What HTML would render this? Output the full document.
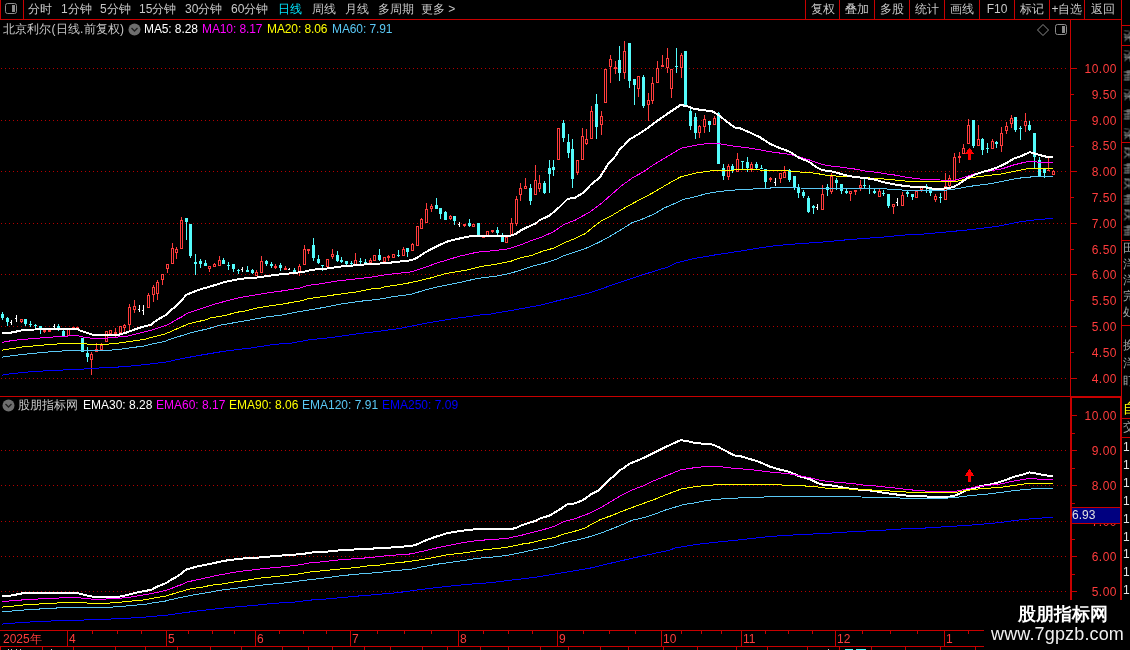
<!DOCTYPE html>
<html><head><meta charset="utf-8">
<style>
html,body{margin:0;padding:0;background:#000;}
body{width:1130px;height:650px;overflow:hidden;position:relative;font-family:"Liberation Sans",sans-serif;}
svg.main{position:absolute;left:0;top:0;}
.t{position:absolute;white-space:nowrap;line-height:15px;font-size:12px;will-change:transform;}
.ax{left:1074px;width:43px;text-align:right;color:#ff3c3c;letter-spacing:0.5px;}
.ic{position:absolute;}
.rc{left:1123px;}
</style></head><body>
<svg class="main" width="1130" height="650" viewBox="0 0 1130 650" shape-rendering="crispEdges">
<line x1="1" y1="68.5" x2="1066" y2="68.5" stroke="#b40000" stroke-width="1" stroke-dasharray="1 3"/>
<line x1="1" y1="120.5" x2="1066" y2="120.5" stroke="#b40000" stroke-width="1" stroke-dasharray="1 3"/>
<line x1="1" y1="171.5" x2="1066" y2="171.5" stroke="#b40000" stroke-width="1" stroke-dasharray="1 3"/>
<line x1="1" y1="223.5" x2="1066" y2="223.5" stroke="#b40000" stroke-width="1" stroke-dasharray="1 3"/>
<line x1="1" y1="274.5" x2="1066" y2="274.5" stroke="#b40000" stroke-width="1" stroke-dasharray="1 3"/>
<line x1="1" y1="326.5" x2="1066" y2="326.5" stroke="#b40000" stroke-width="1" stroke-dasharray="1 3"/>
<line x1="1" y1="378.5" x2="1066" y2="378.5" stroke="#b40000" stroke-width="1" stroke-dasharray="1 3"/>
<line x1="1" y1="450.5" x2="1066" y2="450.5" stroke="#b40000" stroke-width="1" stroke-dasharray="1 3"/>
<line x1="1" y1="485.5" x2="1066" y2="485.5" stroke="#b40000" stroke-width="1" stroke-dasharray="1 3"/>
<line x1="1" y1="521.5" x2="1066" y2="521.5" stroke="#b40000" stroke-width="1" stroke-dasharray="1 3"/>
<line x1="1" y1="556.5" x2="1066" y2="556.5" stroke="#b40000" stroke-width="1" stroke-dasharray="1 3"/>
<line x1="1" y1="591.5" x2="1066" y2="591.5" stroke="#b40000" stroke-width="1" stroke-dasharray="1 3"/>
<rect x="2" y="312" width="1" height="8" fill="#54fcfc"/>
<rect x="1" y="314" width="3" height="4" fill="#54fcfc"/>
<rect x="7" y="317" width="1" height="9" fill="#54fcfc"/>
<rect x="6" y="318" width="3" height="4" fill="#54fcfc"/>
<rect x="11" y="320" width="1" height="5" fill="#ffffff"/>
<rect x="10" y="322" width="1" height="1" fill="#ffffff"/>
<rect x="16" y="315" width="1" height="7" fill="#ffffff"/>
<rect x="15" y="318" width="1" height="1" fill="#ffffff"/>
<rect x="21" y="322" width="1" height="1" fill="#ff3c3c"/>
<rect x="20" y="319" width="3" height="1" fill="#ff3c3c"/>
<rect x="20" y="321" width="3" height="1" fill="#ff3c3c"/>
<rect x="20" y="319" width="1" height="3" fill="#ff3c3c"/>
<rect x="22" y="319" width="1" height="3" fill="#ff3c3c"/>
<rect x="25" y="319" width="1" height="7" fill="#54fcfc"/>
<rect x="24" y="319" width="3" height="5" fill="#54fcfc"/>
<rect x="30" y="321" width="1" height="6" fill="#54fcfc"/>
<rect x="29" y="324" width="3" height="1" fill="#54fcfc"/>
<rect x="35" y="324" width="1" height="6" fill="#54fcfc"/>
<rect x="34" y="325" width="3" height="1" fill="#54fcfc"/>
<rect x="40" y="326" width="1" height="8" fill="#54fcfc"/>
<rect x="39" y="326" width="3" height="4" fill="#54fcfc"/>
<rect x="44" y="332" width="1" height="1" fill="#ff3c3c"/>
<rect x="43" y="330" width="3" height="2" fill="#ff3c3c"/>
<rect x="48" y="330" width="3" height="2" fill="#ff3c3c"/>
<rect x="54" y="324" width="1" height="4" fill="#ffffff"/>
<rect x="53" y="326" width="1" height="1" fill="#ffffff"/>
<rect x="58" y="324" width="1" height="7" fill="#54fcfc"/>
<rect x="57" y="326" width="3" height="4" fill="#54fcfc"/>
<rect x="63" y="329" width="1" height="7" fill="#54fcfc"/>
<rect x="62" y="331" width="3" height="5" fill="#54fcfc"/>
<rect x="67" y="329" width="3" height="1" fill="#ff3c3c"/>
<rect x="67" y="335" width="3" height="1" fill="#ff3c3c"/>
<rect x="67" y="329" width="1" height="7" fill="#ff3c3c"/>
<rect x="69" y="329" width="1" height="7" fill="#ff3c3c"/>
<rect x="72" y="327" width="3" height="2" fill="#ff3c3c"/>
<rect x="76" y="327" width="3" height="1" fill="#ff3c3c"/>
<rect x="76" y="329" width="3" height="1" fill="#ff3c3c"/>
<rect x="76" y="327" width="1" height="3" fill="#ff3c3c"/>
<rect x="78" y="327" width="1" height="3" fill="#ff3c3c"/>
<rect x="82" y="338" width="1" height="14" fill="#54fcfc"/>
<rect x="81" y="338" width="3" height="14" fill="#54fcfc"/>
<rect x="87" y="347" width="1" height="15" fill="#54fcfc"/>
<rect x="86" y="353" width="3" height="4" fill="#54fcfc"/>
<rect x="91" y="352" width="1" height="2" fill="#ff3c3c"/>
<rect x="91" y="360" width="1" height="15" fill="#ff3c3c"/>
<rect x="90" y="354" width="3" height="1" fill="#ff3c3c"/>
<rect x="90" y="359" width="3" height="1" fill="#ff3c3c"/>
<rect x="90" y="354" width="1" height="6" fill="#ff3c3c"/>
<rect x="92" y="354" width="1" height="6" fill="#ff3c3c"/>
<rect x="96" y="343" width="1" height="6" fill="#ff3c3c"/>
<rect x="95" y="349" width="3" height="1" fill="#ff3c3c"/>
<rect x="95" y="351" width="3" height="1" fill="#ff3c3c"/>
<rect x="95" y="349" width="1" height="3" fill="#ff3c3c"/>
<rect x="97" y="349" width="1" height="3" fill="#ff3c3c"/>
<rect x="101" y="343" width="1" height="2" fill="#ff3c3c"/>
<rect x="100" y="345" width="3" height="1" fill="#ff3c3c"/>
<rect x="100" y="349" width="3" height="1" fill="#ff3c3c"/>
<rect x="100" y="345" width="1" height="5" fill="#ff3c3c"/>
<rect x="102" y="345" width="1" height="5" fill="#ff3c3c"/>
<rect x="105" y="331" width="3" height="1" fill="#ff3c3c"/>
<rect x="105" y="341" width="3" height="1" fill="#ff3c3c"/>
<rect x="105" y="331" width="1" height="11" fill="#ff3c3c"/>
<rect x="107" y="331" width="1" height="11" fill="#ff3c3c"/>
<rect x="109" y="330" width="3" height="1" fill="#ff3c3c"/>
<rect x="109" y="333" width="3" height="1" fill="#ff3c3c"/>
<rect x="109" y="330" width="1" height="4" fill="#ff3c3c"/>
<rect x="111" y="330" width="1" height="4" fill="#ff3c3c"/>
<rect x="115" y="328" width="1" height="4" fill="#ff3c3c"/>
<rect x="115" y="333" width="1" height="4" fill="#ff3c3c"/>
<rect x="114" y="332" width="3" height="2" fill="#ff3c3c"/>
<rect x="119" y="326" width="3" height="1" fill="#ff3c3c"/>
<rect x="119" y="332" width="3" height="1" fill="#ff3c3c"/>
<rect x="119" y="326" width="1" height="7" fill="#ff3c3c"/>
<rect x="121" y="326" width="1" height="7" fill="#ff3c3c"/>
<rect x="124" y="324" width="1" height="1" fill="#ff3c3c"/>
<rect x="124" y="328" width="1" height="4" fill="#ff3c3c"/>
<rect x="123" y="325" width="3" height="1" fill="#ff3c3c"/>
<rect x="123" y="327" width="3" height="1" fill="#ff3c3c"/>
<rect x="123" y="325" width="1" height="3" fill="#ff3c3c"/>
<rect x="125" y="325" width="1" height="3" fill="#ff3c3c"/>
<rect x="129" y="304" width="1" height="3" fill="#ff3c3c"/>
<rect x="129" y="325" width="1" height="6" fill="#ff3c3c"/>
<rect x="128" y="307" width="3" height="1" fill="#ff3c3c"/>
<rect x="128" y="324" width="3" height="1" fill="#ff3c3c"/>
<rect x="128" y="307" width="1" height="18" fill="#ff3c3c"/>
<rect x="130" y="307" width="1" height="18" fill="#ff3c3c"/>
<rect x="134" y="300" width="1" height="6" fill="#ff3c3c"/>
<rect x="134" y="310" width="1" height="3" fill="#ff3c3c"/>
<rect x="133" y="306" width="3" height="1" fill="#ff3c3c"/>
<rect x="133" y="309" width="3" height="1" fill="#ff3c3c"/>
<rect x="133" y="306" width="1" height="4" fill="#ff3c3c"/>
<rect x="135" y="306" width="1" height="4" fill="#ff3c3c"/>
<rect x="139" y="305" width="1" height="7" fill="#ffffff"/>
<rect x="138" y="309" width="1" height="1" fill="#ffffff"/>
<rect x="143" y="305" width="1" height="10" fill="#ffffff"/>
<rect x="142" y="310" width="1" height="1" fill="#ffffff"/>
<rect x="148" y="293" width="1" height="2" fill="#ff3c3c"/>
<rect x="147" y="295" width="3" height="1" fill="#ff3c3c"/>
<rect x="147" y="307" width="3" height="1" fill="#ff3c3c"/>
<rect x="147" y="295" width="1" height="13" fill="#ff3c3c"/>
<rect x="149" y="295" width="1" height="13" fill="#ff3c3c"/>
<rect x="153" y="285" width="1" height="2" fill="#ff3c3c"/>
<rect x="153" y="295" width="1" height="7" fill="#ff3c3c"/>
<rect x="152" y="287" width="3" height="1" fill="#ff3c3c"/>
<rect x="152" y="294" width="3" height="1" fill="#ff3c3c"/>
<rect x="152" y="287" width="1" height="8" fill="#ff3c3c"/>
<rect x="154" y="287" width="1" height="8" fill="#ff3c3c"/>
<rect x="157" y="280" width="1" height="2" fill="#ff3c3c"/>
<rect x="157" y="294" width="1" height="6" fill="#ff3c3c"/>
<rect x="156" y="282" width="3" height="1" fill="#ff3c3c"/>
<rect x="156" y="293" width="3" height="1" fill="#ff3c3c"/>
<rect x="156" y="282" width="1" height="12" fill="#ff3c3c"/>
<rect x="158" y="282" width="1" height="12" fill="#ff3c3c"/>
<rect x="162" y="280" width="1" height="5" fill="#ff3c3c"/>
<rect x="161" y="274" width="3" height="1" fill="#ff3c3c"/>
<rect x="161" y="279" width="3" height="1" fill="#ff3c3c"/>
<rect x="161" y="274" width="1" height="6" fill="#ff3c3c"/>
<rect x="163" y="274" width="1" height="6" fill="#ff3c3c"/>
<rect x="167" y="269" width="1" height="4" fill="#ff3c3c"/>
<rect x="166" y="264" width="3" height="1" fill="#ff3c3c"/>
<rect x="166" y="268" width="3" height="1" fill="#ff3c3c"/>
<rect x="166" y="264" width="1" height="5" fill="#ff3c3c"/>
<rect x="168" y="264" width="1" height="5" fill="#ff3c3c"/>
<rect x="172" y="243" width="1" height="5" fill="#ff3c3c"/>
<rect x="171" y="248" width="3" height="1" fill="#ff3c3c"/>
<rect x="171" y="263" width="3" height="1" fill="#ff3c3c"/>
<rect x="171" y="248" width="1" height="16" fill="#ff3c3c"/>
<rect x="173" y="248" width="1" height="16" fill="#ff3c3c"/>
<rect x="176" y="247" width="1" height="2" fill="#ff3c3c"/>
<rect x="176" y="253" width="1" height="6" fill="#ff3c3c"/>
<rect x="175" y="249" width="3" height="1" fill="#ff3c3c"/>
<rect x="175" y="252" width="3" height="1" fill="#ff3c3c"/>
<rect x="175" y="249" width="1" height="4" fill="#ff3c3c"/>
<rect x="177" y="249" width="1" height="4" fill="#ff3c3c"/>
<rect x="181" y="217" width="1" height="3" fill="#ff3c3c"/>
<rect x="180" y="220" width="3" height="1" fill="#ff3c3c"/>
<rect x="180" y="248" width="3" height="1" fill="#ff3c3c"/>
<rect x="180" y="220" width="1" height="29" fill="#ff3c3c"/>
<rect x="182" y="220" width="1" height="29" fill="#ff3c3c"/>
<rect x="186" y="218" width="1" height="22" fill="#54fcfc"/>
<rect x="185" y="218" width="3" height="4" fill="#54fcfc"/>
<rect x="190" y="224" width="1" height="34" fill="#54fcfc"/>
<rect x="189" y="224" width="3" height="32" fill="#54fcfc"/>
<rect x="195" y="254" width="1" height="21" fill="#54fcfc"/>
<rect x="194" y="262" width="3" height="2" fill="#54fcfc"/>
<rect x="200" y="259" width="1" height="9" fill="#54fcfc"/>
<rect x="199" y="261" width="3" height="3" fill="#54fcfc"/>
<rect x="205" y="260" width="1" height="6" fill="#54fcfc"/>
<rect x="204" y="263" width="3" height="3" fill="#54fcfc"/>
<rect x="209" y="269" width="1" height="3" fill="#ff3c3c"/>
<rect x="208" y="266" width="3" height="1" fill="#ff3c3c"/>
<rect x="208" y="268" width="3" height="1" fill="#ff3c3c"/>
<rect x="208" y="266" width="1" height="3" fill="#ff3c3c"/>
<rect x="210" y="266" width="1" height="3" fill="#ff3c3c"/>
<rect x="214" y="263" width="1" height="1" fill="#ff3c3c"/>
<rect x="213" y="264" width="3" height="1" fill="#ff3c3c"/>
<rect x="213" y="266" width="3" height="1" fill="#ff3c3c"/>
<rect x="213" y="264" width="1" height="3" fill="#ff3c3c"/>
<rect x="215" y="264" width="1" height="3" fill="#ff3c3c"/>
<rect x="219" y="256" width="1" height="4" fill="#ff3c3c"/>
<rect x="218" y="260" width="3" height="1" fill="#ff3c3c"/>
<rect x="218" y="265" width="3" height="1" fill="#ff3c3c"/>
<rect x="218" y="260" width="1" height="6" fill="#ff3c3c"/>
<rect x="220" y="260" width="1" height="6" fill="#ff3c3c"/>
<rect x="223" y="258" width="1" height="6" fill="#54fcfc"/>
<rect x="222" y="260" width="3" height="4" fill="#54fcfc"/>
<rect x="228" y="262" width="1" height="8" fill="#54fcfc"/>
<rect x="227" y="265" width="3" height="1" fill="#54fcfc"/>
<rect x="233" y="264" width="1" height="8" fill="#54fcfc"/>
<rect x="232" y="264" width="3" height="5" fill="#54fcfc"/>
<rect x="238" y="269" width="1" height="5" fill="#54fcfc"/>
<rect x="237" y="270" width="3" height="1" fill="#54fcfc"/>
<rect x="242" y="267" width="1" height="5" fill="#ffffff"/>
<rect x="241" y="269" width="1" height="1" fill="#ffffff"/>
<rect x="247" y="266" width="1" height="6" fill="#54fcfc"/>
<rect x="246" y="270" width="3" height="2" fill="#54fcfc"/>
<rect x="252" y="269" width="1" height="5" fill="#54fcfc"/>
<rect x="251" y="270" width="3" height="3" fill="#54fcfc"/>
<rect x="256" y="270" width="1" height="2" fill="#ff3c3c"/>
<rect x="255" y="272" width="3" height="1" fill="#ff3c3c"/>
<rect x="255" y="275" width="3" height="1" fill="#ff3c3c"/>
<rect x="255" y="272" width="1" height="4" fill="#ff3c3c"/>
<rect x="257" y="272" width="1" height="4" fill="#ff3c3c"/>
<rect x="261" y="256" width="1" height="5" fill="#ff3c3c"/>
<rect x="260" y="261" width="3" height="1" fill="#ff3c3c"/>
<rect x="260" y="272" width="3" height="1" fill="#ff3c3c"/>
<rect x="260" y="261" width="1" height="12" fill="#ff3c3c"/>
<rect x="262" y="261" width="1" height="12" fill="#ff3c3c"/>
<rect x="266" y="260" width="1" height="6" fill="#54fcfc"/>
<rect x="265" y="261" width="3" height="3" fill="#54fcfc"/>
<rect x="271" y="262" width="1" height="6" fill="#54fcfc"/>
<rect x="270" y="264" width="3" height="2" fill="#54fcfc"/>
<rect x="275" y="264" width="1" height="2" fill="#ff3c3c"/>
<rect x="275" y="268" width="1" height="1" fill="#ff3c3c"/>
<rect x="274" y="266" width="3" height="2" fill="#ff3c3c"/>
<rect x="280" y="263" width="1" height="8" fill="#54fcfc"/>
<rect x="279" y="265" width="3" height="3" fill="#54fcfc"/>
<rect x="285" y="266" width="1" height="2" fill="#ff3c3c"/>
<rect x="284" y="268" width="3" height="2" fill="#ff3c3c"/>
<rect x="289" y="268" width="1" height="2" fill="#ffffff"/>
<rect x="288" y="269" width="1" height="1" fill="#ffffff"/>
<rect x="294" y="268" width="1" height="6" fill="#54fcfc"/>
<rect x="293" y="270" width="3" height="2" fill="#54fcfc"/>
<rect x="299" y="264" width="1" height="2" fill="#ff3c3c"/>
<rect x="299" y="273" width="1" height="3" fill="#ff3c3c"/>
<rect x="298" y="266" width="3" height="1" fill="#ff3c3c"/>
<rect x="298" y="272" width="3" height="1" fill="#ff3c3c"/>
<rect x="298" y="266" width="1" height="7" fill="#ff3c3c"/>
<rect x="300" y="266" width="1" height="7" fill="#ff3c3c"/>
<rect x="304" y="245" width="1" height="4" fill="#ff3c3c"/>
<rect x="303" y="249" width="3" height="1" fill="#ff3c3c"/>
<rect x="303" y="264" width="3" height="1" fill="#ff3c3c"/>
<rect x="303" y="249" width="1" height="16" fill="#ff3c3c"/>
<rect x="305" y="249" width="1" height="16" fill="#ff3c3c"/>
<rect x="308" y="250" width="1" height="4" fill="#ff3c3c"/>
<rect x="307" y="249" width="3" height="2" fill="#ff3c3c"/>
<rect x="313" y="238" width="1" height="23" fill="#54fcfc"/>
<rect x="312" y="245" width="3" height="13" fill="#54fcfc"/>
<rect x="318" y="255" width="1" height="9" fill="#54fcfc"/>
<rect x="317" y="259" width="3" height="4" fill="#54fcfc"/>
<rect x="322" y="265" width="1" height="6" fill="#54fcfc"/>
<rect x="321" y="265" width="3" height="1" fill="#54fcfc"/>
<rect x="326" y="259" width="3" height="1" fill="#ff3c3c"/>
<rect x="326" y="266" width="3" height="1" fill="#ff3c3c"/>
<rect x="326" y="259" width="1" height="8" fill="#ff3c3c"/>
<rect x="328" y="259" width="1" height="8" fill="#ff3c3c"/>
<rect x="332" y="249" width="1" height="5" fill="#ff3c3c"/>
<rect x="332" y="257" width="1" height="2" fill="#ff3c3c"/>
<rect x="331" y="254" width="3" height="1" fill="#ff3c3c"/>
<rect x="331" y="256" width="3" height="1" fill="#ff3c3c"/>
<rect x="331" y="254" width="1" height="3" fill="#ff3c3c"/>
<rect x="333" y="254" width="1" height="3" fill="#ff3c3c"/>
<rect x="337" y="251" width="1" height="11" fill="#54fcfc"/>
<rect x="336" y="255" width="3" height="6" fill="#54fcfc"/>
<rect x="341" y="257" width="1" height="6" fill="#54fcfc"/>
<rect x="340" y="260" width="3" height="2" fill="#54fcfc"/>
<rect x="346" y="261" width="1" height="4" fill="#54fcfc"/>
<rect x="345" y="261" width="3" height="3" fill="#54fcfc"/>
<rect x="351" y="261" width="1" height="4" fill="#54fcfc"/>
<rect x="350" y="263" width="3" height="1" fill="#54fcfc"/>
<rect x="355" y="253" width="1" height="7" fill="#ff3c3c"/>
<rect x="354" y="260" width="3" height="1" fill="#ff3c3c"/>
<rect x="354" y="264" width="3" height="1" fill="#ff3c3c"/>
<rect x="354" y="260" width="1" height="5" fill="#ff3c3c"/>
<rect x="356" y="260" width="1" height="5" fill="#ff3c3c"/>
<rect x="360" y="258" width="1" height="6" fill="#54fcfc"/>
<rect x="359" y="261" width="3" height="1" fill="#54fcfc"/>
<rect x="365" y="259" width="1" height="5" fill="#54fcfc"/>
<rect x="364" y="262" width="3" height="1" fill="#54fcfc"/>
<rect x="370" y="258" width="1" height="2" fill="#ff3c3c"/>
<rect x="369" y="260" width="3" height="1" fill="#ff3c3c"/>
<rect x="369" y="262" width="3" height="1" fill="#ff3c3c"/>
<rect x="369" y="260" width="1" height="3" fill="#ff3c3c"/>
<rect x="371" y="260" width="1" height="3" fill="#ff3c3c"/>
<rect x="373" y="255" width="3" height="1" fill="#ff3c3c"/>
<rect x="373" y="260" width="3" height="1" fill="#ff3c3c"/>
<rect x="373" y="255" width="1" height="6" fill="#ff3c3c"/>
<rect x="375" y="255" width="1" height="6" fill="#ff3c3c"/>
<rect x="379" y="249" width="1" height="12" fill="#54fcfc"/>
<rect x="378" y="255" width="3" height="5" fill="#54fcfc"/>
<rect x="383" y="257" width="3" height="1" fill="#ff3c3c"/>
<rect x="383" y="261" width="3" height="1" fill="#ff3c3c"/>
<rect x="383" y="257" width="1" height="5" fill="#ff3c3c"/>
<rect x="385" y="257" width="1" height="5" fill="#ff3c3c"/>
<rect x="388" y="255" width="1" height="1" fill="#ff3c3c"/>
<rect x="388" y="258" width="1" height="3" fill="#ff3c3c"/>
<rect x="387" y="256" width="3" height="2" fill="#ff3c3c"/>
<rect x="392" y="254" width="3" height="1" fill="#ff3c3c"/>
<rect x="392" y="257" width="3" height="1" fill="#ff3c3c"/>
<rect x="392" y="254" width="1" height="4" fill="#ff3c3c"/>
<rect x="394" y="254" width="1" height="4" fill="#ff3c3c"/>
<rect x="398" y="250" width="1" height="7" fill="#54fcfc"/>
<rect x="397" y="255" width="3" height="1" fill="#54fcfc"/>
<rect x="403" y="247" width="1" height="2" fill="#ff3c3c"/>
<rect x="402" y="249" width="3" height="1" fill="#ff3c3c"/>
<rect x="402" y="255" width="3" height="1" fill="#ff3c3c"/>
<rect x="402" y="249" width="1" height="7" fill="#ff3c3c"/>
<rect x="404" y="249" width="1" height="7" fill="#ff3c3c"/>
<rect x="407" y="248" width="1" height="9" fill="#54fcfc"/>
<rect x="406" y="248" width="3" height="4" fill="#54fcfc"/>
<rect x="412" y="243" width="1" height="1" fill="#ff3c3c"/>
<rect x="411" y="244" width="3" height="1" fill="#ff3c3c"/>
<rect x="411" y="250" width="3" height="1" fill="#ff3c3c"/>
<rect x="411" y="244" width="1" height="7" fill="#ff3c3c"/>
<rect x="413" y="244" width="1" height="7" fill="#ff3c3c"/>
<rect x="416" y="226" width="3" height="1" fill="#ff3c3c"/>
<rect x="416" y="245" width="3" height="1" fill="#ff3c3c"/>
<rect x="416" y="226" width="1" height="20" fill="#ff3c3c"/>
<rect x="418" y="226" width="1" height="20" fill="#ff3c3c"/>
<rect x="421" y="218" width="1" height="1" fill="#ff3c3c"/>
<rect x="420" y="219" width="3" height="1" fill="#ff3c3c"/>
<rect x="420" y="228" width="3" height="1" fill="#ff3c3c"/>
<rect x="420" y="219" width="1" height="10" fill="#ff3c3c"/>
<rect x="422" y="219" width="1" height="10" fill="#ff3c3c"/>
<rect x="426" y="203" width="1" height="6" fill="#ff3c3c"/>
<rect x="425" y="209" width="3" height="1" fill="#ff3c3c"/>
<rect x="425" y="222" width="3" height="1" fill="#ff3c3c"/>
<rect x="425" y="209" width="1" height="14" fill="#ff3c3c"/>
<rect x="427" y="209" width="1" height="14" fill="#ff3c3c"/>
<rect x="431" y="204" width="1" height="2" fill="#ff3c3c"/>
<rect x="431" y="209" width="1" height="3" fill="#ff3c3c"/>
<rect x="430" y="206" width="3" height="1" fill="#ff3c3c"/>
<rect x="430" y="208" width="3" height="1" fill="#ff3c3c"/>
<rect x="430" y="206" width="1" height="3" fill="#ff3c3c"/>
<rect x="432" y="206" width="1" height="3" fill="#ff3c3c"/>
<rect x="436" y="198" width="1" height="11" fill="#54fcfc"/>
<rect x="435" y="205" width="3" height="4" fill="#54fcfc"/>
<rect x="440" y="208" width="1" height="11" fill="#54fcfc"/>
<rect x="439" y="208" width="3" height="6" fill="#54fcfc"/>
<rect x="445" y="211" width="1" height="9" fill="#54fcfc"/>
<rect x="444" y="212" width="3" height="8" fill="#54fcfc"/>
<rect x="450" y="215" width="1" height="1" fill="#ff3c3c"/>
<rect x="450" y="219" width="1" height="1" fill="#ff3c3c"/>
<rect x="449" y="216" width="3" height="1" fill="#ff3c3c"/>
<rect x="449" y="218" width="3" height="1" fill="#ff3c3c"/>
<rect x="449" y="216" width="1" height="3" fill="#ff3c3c"/>
<rect x="451" y="216" width="1" height="3" fill="#ff3c3c"/>
<rect x="454" y="216" width="1" height="9" fill="#54fcfc"/>
<rect x="453" y="216" width="3" height="5" fill="#54fcfc"/>
<rect x="459" y="222" width="1" height="5" fill="#ffffff"/>
<rect x="458" y="224" width="1" height="1" fill="#ffffff"/>
<rect x="464" y="225" width="1" height="2" fill="#ff3c3c"/>
<rect x="463" y="224" width="3" height="2" fill="#ff3c3c"/>
<rect x="469" y="219" width="1" height="8" fill="#54fcfc"/>
<rect x="468" y="223" width="3" height="3" fill="#54fcfc"/>
<rect x="472" y="224" width="3" height="1" fill="#ff3c3c"/>
<rect x="472" y="226" width="3" height="1" fill="#ff3c3c"/>
<rect x="472" y="224" width="1" height="3" fill="#ff3c3c"/>
<rect x="474" y="224" width="1" height="3" fill="#ff3c3c"/>
<rect x="478" y="223" width="1" height="12" fill="#54fcfc"/>
<rect x="477" y="223" width="3" height="12" fill="#54fcfc"/>
<rect x="482" y="236" width="3" height="2" fill="#ff3c3c"/>
<rect x="487" y="236" width="1" height="1" fill="#ff3c3c"/>
<rect x="486" y="231" width="3" height="1" fill="#ff3c3c"/>
<rect x="486" y="235" width="3" height="1" fill="#ff3c3c"/>
<rect x="486" y="231" width="1" height="5" fill="#ff3c3c"/>
<rect x="488" y="231" width="1" height="5" fill="#ff3c3c"/>
<rect x="492" y="231" width="1" height="2" fill="#ff3c3c"/>
<rect x="491" y="230" width="3" height="2" fill="#ff3c3c"/>
<rect x="497" y="227" width="1" height="8" fill="#54fcfc"/>
<rect x="496" y="230" width="3" height="3" fill="#54fcfc"/>
<rect x="502" y="233" width="1" height="9" fill="#54fcfc"/>
<rect x="501" y="235" width="3" height="7" fill="#54fcfc"/>
<rect x="505" y="237" width="3" height="1" fill="#ff3c3c"/>
<rect x="505" y="242" width="3" height="1" fill="#ff3c3c"/>
<rect x="505" y="237" width="1" height="6" fill="#ff3c3c"/>
<rect x="507" y="237" width="1" height="6" fill="#ff3c3c"/>
<rect x="511" y="218" width="1" height="5" fill="#ff3c3c"/>
<rect x="510" y="223" width="3" height="1" fill="#ff3c3c"/>
<rect x="510" y="234" width="3" height="1" fill="#ff3c3c"/>
<rect x="510" y="223" width="1" height="12" fill="#ff3c3c"/>
<rect x="512" y="223" width="1" height="12" fill="#ff3c3c"/>
<rect x="516" y="196" width="1" height="3" fill="#ff3c3c"/>
<rect x="516" y="224" width="1" height="2" fill="#ff3c3c"/>
<rect x="515" y="199" width="3" height="1" fill="#ff3c3c"/>
<rect x="515" y="223" width="3" height="1" fill="#ff3c3c"/>
<rect x="515" y="199" width="1" height="25" fill="#ff3c3c"/>
<rect x="517" y="199" width="1" height="25" fill="#ff3c3c"/>
<rect x="520" y="183" width="1" height="5" fill="#ff3c3c"/>
<rect x="520" y="195" width="1" height="6" fill="#ff3c3c"/>
<rect x="519" y="188" width="3" height="1" fill="#ff3c3c"/>
<rect x="519" y="194" width="3" height="1" fill="#ff3c3c"/>
<rect x="519" y="188" width="1" height="7" fill="#ff3c3c"/>
<rect x="521" y="188" width="1" height="7" fill="#ff3c3c"/>
<rect x="525" y="178" width="1" height="8" fill="#ff3c3c"/>
<rect x="524" y="186" width="3" height="1" fill="#ff3c3c"/>
<rect x="524" y="188" width="3" height="1" fill="#ff3c3c"/>
<rect x="524" y="186" width="1" height="3" fill="#ff3c3c"/>
<rect x="526" y="186" width="1" height="3" fill="#ff3c3c"/>
<rect x="530" y="184" width="1" height="21" fill="#54fcfc"/>
<rect x="529" y="188" width="3" height="13" fill="#54fcfc"/>
<rect x="535" y="165" width="1" height="15" fill="#ff3c3c"/>
<rect x="534" y="180" width="3" height="1" fill="#ff3c3c"/>
<rect x="534" y="194" width="3" height="1" fill="#ff3c3c"/>
<rect x="534" y="180" width="1" height="15" fill="#ff3c3c"/>
<rect x="536" y="180" width="1" height="15" fill="#ff3c3c"/>
<rect x="539" y="175" width="1" height="8" fill="#ff3c3c"/>
<rect x="539" y="189" width="1" height="3" fill="#ff3c3c"/>
<rect x="538" y="183" width="3" height="1" fill="#ff3c3c"/>
<rect x="538" y="188" width="3" height="1" fill="#ff3c3c"/>
<rect x="538" y="183" width="1" height="6" fill="#ff3c3c"/>
<rect x="540" y="183" width="1" height="6" fill="#ff3c3c"/>
<rect x="544" y="181" width="1" height="13" fill="#54fcfc"/>
<rect x="543" y="183" width="3" height="10" fill="#54fcfc"/>
<rect x="549" y="160" width="1" height="33" fill="#54fcfc"/>
<rect x="548" y="168" width="3" height="6" fill="#54fcfc"/>
<rect x="553" y="160" width="1" height="16" fill="#54fcfc"/>
<rect x="552" y="167" width="3" height="3" fill="#54fcfc"/>
<rect x="557" y="128" width="3" height="1" fill="#ff3c3c"/>
<rect x="557" y="159" width="3" height="1" fill="#ff3c3c"/>
<rect x="557" y="128" width="1" height="32" fill="#ff3c3c"/>
<rect x="559" y="128" width="1" height="32" fill="#ff3c3c"/>
<rect x="563" y="120" width="1" height="22" fill="#54fcfc"/>
<rect x="562" y="123" width="3" height="15" fill="#54fcfc"/>
<rect x="568" y="134" width="1" height="24" fill="#54fcfc"/>
<rect x="567" y="142" width="3" height="11" fill="#54fcfc"/>
<rect x="572" y="139" width="1" height="49" fill="#54fcfc"/>
<rect x="571" y="149" width="3" height="30" fill="#54fcfc"/>
<rect x="577" y="173" width="1" height="2" fill="#ff3c3c"/>
<rect x="576" y="160" width="3" height="1" fill="#ff3c3c"/>
<rect x="576" y="172" width="3" height="1" fill="#ff3c3c"/>
<rect x="576" y="160" width="1" height="13" fill="#ff3c3c"/>
<rect x="578" y="160" width="1" height="13" fill="#ff3c3c"/>
<rect x="582" y="128" width="1" height="8" fill="#ff3c3c"/>
<rect x="581" y="136" width="3" height="1" fill="#ff3c3c"/>
<rect x="581" y="159" width="3" height="1" fill="#ff3c3c"/>
<rect x="581" y="136" width="1" height="24" fill="#ff3c3c"/>
<rect x="583" y="136" width="1" height="24" fill="#ff3c3c"/>
<rect x="586" y="129" width="1" height="10" fill="#ff3c3c"/>
<rect x="586" y="144" width="1" height="1" fill="#ff3c3c"/>
<rect x="585" y="139" width="3" height="1" fill="#ff3c3c"/>
<rect x="585" y="143" width="3" height="1" fill="#ff3c3c"/>
<rect x="585" y="139" width="1" height="5" fill="#ff3c3c"/>
<rect x="587" y="139" width="1" height="5" fill="#ff3c3c"/>
<rect x="591" y="106" width="1" height="5" fill="#ff3c3c"/>
<rect x="590" y="111" width="3" height="1" fill="#ff3c3c"/>
<rect x="590" y="138" width="3" height="1" fill="#ff3c3c"/>
<rect x="590" y="111" width="1" height="28" fill="#ff3c3c"/>
<rect x="592" y="111" width="1" height="28" fill="#ff3c3c"/>
<rect x="596" y="94" width="1" height="45" fill="#54fcfc"/>
<rect x="595" y="104" width="3" height="23" fill="#54fcfc"/>
<rect x="601" y="111" width="1" height="5" fill="#ff3c3c"/>
<rect x="601" y="125" width="1" height="10" fill="#ff3c3c"/>
<rect x="600" y="116" width="3" height="1" fill="#ff3c3c"/>
<rect x="600" y="124" width="3" height="1" fill="#ff3c3c"/>
<rect x="600" y="116" width="1" height="9" fill="#ff3c3c"/>
<rect x="602" y="116" width="1" height="9" fill="#ff3c3c"/>
<rect x="604" y="69" width="3" height="1" fill="#ff3c3c"/>
<rect x="604" y="102" width="3" height="1" fill="#ff3c3c"/>
<rect x="604" y="69" width="1" height="34" fill="#ff3c3c"/>
<rect x="606" y="69" width="1" height="34" fill="#ff3c3c"/>
<rect x="610" y="55" width="1" height="4" fill="#ff3c3c"/>
<rect x="610" y="67" width="1" height="16" fill="#ff3c3c"/>
<rect x="609" y="59" width="3" height="1" fill="#ff3c3c"/>
<rect x="609" y="66" width="3" height="1" fill="#ff3c3c"/>
<rect x="609" y="59" width="1" height="8" fill="#ff3c3c"/>
<rect x="611" y="59" width="1" height="8" fill="#ff3c3c"/>
<rect x="615" y="61" width="1" height="6" fill="#ff3c3c"/>
<rect x="615" y="69" width="1" height="5" fill="#ff3c3c"/>
<rect x="614" y="67" width="3" height="2" fill="#ff3c3c"/>
<rect x="619" y="46" width="1" height="35" fill="#54fcfc"/>
<rect x="618" y="60" width="3" height="13" fill="#54fcfc"/>
<rect x="624" y="41" width="1" height="10" fill="#ff3c3c"/>
<rect x="624" y="73" width="1" height="6" fill="#ff3c3c"/>
<rect x="623" y="51" width="3" height="1" fill="#ff3c3c"/>
<rect x="623" y="72" width="3" height="1" fill="#ff3c3c"/>
<rect x="623" y="51" width="1" height="22" fill="#ff3c3c"/>
<rect x="625" y="51" width="1" height="22" fill="#ff3c3c"/>
<rect x="629" y="43" width="1" height="45" fill="#54fcfc"/>
<rect x="628" y="43" width="3" height="38" fill="#54fcfc"/>
<rect x="634" y="79" width="1" height="26" fill="#54fcfc"/>
<rect x="633" y="79" width="3" height="6" fill="#54fcfc"/>
<rect x="638" y="89" width="1" height="8" fill="#ff3c3c"/>
<rect x="637" y="76" width="3" height="1" fill="#ff3c3c"/>
<rect x="637" y="88" width="3" height="1" fill="#ff3c3c"/>
<rect x="637" y="76" width="1" height="13" fill="#ff3c3c"/>
<rect x="639" y="76" width="1" height="13" fill="#ff3c3c"/>
<rect x="643" y="75" width="1" height="33" fill="#54fcfc"/>
<rect x="642" y="77" width="3" height="29" fill="#54fcfc"/>
<rect x="648" y="93" width="1" height="7" fill="#ff3c3c"/>
<rect x="648" y="105" width="1" height="16" fill="#ff3c3c"/>
<rect x="647" y="100" width="3" height="1" fill="#ff3c3c"/>
<rect x="647" y="104" width="3" height="1" fill="#ff3c3c"/>
<rect x="647" y="100" width="1" height="5" fill="#ff3c3c"/>
<rect x="649" y="100" width="1" height="5" fill="#ff3c3c"/>
<rect x="652" y="77" width="1" height="6" fill="#ff3c3c"/>
<rect x="652" y="101" width="1" height="3" fill="#ff3c3c"/>
<rect x="651" y="83" width="3" height="1" fill="#ff3c3c"/>
<rect x="651" y="100" width="3" height="1" fill="#ff3c3c"/>
<rect x="651" y="83" width="1" height="18" fill="#ff3c3c"/>
<rect x="653" y="83" width="1" height="18" fill="#ff3c3c"/>
<rect x="657" y="61" width="1" height="7" fill="#ff3c3c"/>
<rect x="656" y="68" width="3" height="1" fill="#ff3c3c"/>
<rect x="656" y="82" width="3" height="1" fill="#ff3c3c"/>
<rect x="656" y="68" width="1" height="15" fill="#ff3c3c"/>
<rect x="658" y="68" width="1" height="15" fill="#ff3c3c"/>
<rect x="662" y="55" width="1" height="10" fill="#ff3c3c"/>
<rect x="661" y="65" width="3" height="2" fill="#ff3c3c"/>
<rect x="667" y="48" width="1" height="10" fill="#ff3c3c"/>
<rect x="667" y="68" width="1" height="5" fill="#ff3c3c"/>
<rect x="666" y="58" width="3" height="1" fill="#ff3c3c"/>
<rect x="666" y="67" width="3" height="1" fill="#ff3c3c"/>
<rect x="666" y="58" width="1" height="10" fill="#ff3c3c"/>
<rect x="668" y="58" width="1" height="10" fill="#ff3c3c"/>
<rect x="671" y="89" width="1" height="9" fill="#ff3c3c"/>
<rect x="670" y="69" width="3" height="1" fill="#ff3c3c"/>
<rect x="670" y="88" width="3" height="1" fill="#ff3c3c"/>
<rect x="670" y="69" width="1" height="20" fill="#ff3c3c"/>
<rect x="672" y="69" width="1" height="20" fill="#ff3c3c"/>
<rect x="676" y="48" width="1" height="25" fill="#54fcfc"/>
<rect x="675" y="66" width="3" height="1" fill="#54fcfc"/>
<rect x="681" y="53" width="1" height="2" fill="#ff3c3c"/>
<rect x="681" y="68" width="1" height="10" fill="#ff3c3c"/>
<rect x="680" y="55" width="3" height="1" fill="#ff3c3c"/>
<rect x="680" y="67" width="3" height="1" fill="#ff3c3c"/>
<rect x="680" y="55" width="1" height="13" fill="#ff3c3c"/>
<rect x="682" y="55" width="1" height="13" fill="#ff3c3c"/>
<rect x="685" y="51" width="1" height="54" fill="#54fcfc"/>
<rect x="684" y="51" width="3" height="54" fill="#54fcfc"/>
<rect x="690" y="109" width="1" height="21" fill="#54fcfc"/>
<rect x="689" y="111" width="3" height="15" fill="#54fcfc"/>
<rect x="695" y="113" width="1" height="26" fill="#54fcfc"/>
<rect x="694" y="117" width="3" height="16" fill="#54fcfc"/>
<rect x="699" y="125" width="1" height="1" fill="#ff3c3c"/>
<rect x="699" y="133" width="1" height="5" fill="#ff3c3c"/>
<rect x="698" y="126" width="3" height="1" fill="#ff3c3c"/>
<rect x="698" y="132" width="3" height="1" fill="#ff3c3c"/>
<rect x="698" y="126" width="1" height="7" fill="#ff3c3c"/>
<rect x="700" y="126" width="1" height="7" fill="#ff3c3c"/>
<rect x="704" y="115" width="1" height="4" fill="#ff3c3c"/>
<rect x="704" y="127" width="1" height="6" fill="#ff3c3c"/>
<rect x="703" y="119" width="3" height="1" fill="#ff3c3c"/>
<rect x="703" y="126" width="3" height="1" fill="#ff3c3c"/>
<rect x="703" y="119" width="1" height="8" fill="#ff3c3c"/>
<rect x="705" y="119" width="1" height="8" fill="#ff3c3c"/>
<rect x="709" y="121" width="1" height="11" fill="#54fcfc"/>
<rect x="708" y="121" width="3" height="4" fill="#54fcfc"/>
<rect x="714" y="116" width="1" height="2" fill="#ff3c3c"/>
<rect x="713" y="118" width="3" height="1" fill="#ff3c3c"/>
<rect x="713" y="124" width="3" height="1" fill="#ff3c3c"/>
<rect x="713" y="118" width="1" height="7" fill="#ff3c3c"/>
<rect x="715" y="118" width="1" height="7" fill="#ff3c3c"/>
<rect x="718" y="112" width="1" height="52" fill="#54fcfc"/>
<rect x="717" y="113" width="3" height="51" fill="#54fcfc"/>
<rect x="723" y="164" width="1" height="16" fill="#54fcfc"/>
<rect x="722" y="168" width="3" height="8" fill="#54fcfc"/>
<rect x="728" y="164" width="1" height="2" fill="#ff3c3c"/>
<rect x="728" y="177" width="1" height="3" fill="#ff3c3c"/>
<rect x="727" y="166" width="3" height="1" fill="#ff3c3c"/>
<rect x="727" y="176" width="3" height="1" fill="#ff3c3c"/>
<rect x="727" y="166" width="1" height="11" fill="#ff3c3c"/>
<rect x="729" y="166" width="1" height="11" fill="#ff3c3c"/>
<rect x="732" y="164" width="1" height="9" fill="#54fcfc"/>
<rect x="731" y="166" width="3" height="4" fill="#54fcfc"/>
<rect x="737" y="153" width="1" height="6" fill="#ff3c3c"/>
<rect x="736" y="159" width="3" height="1" fill="#ff3c3c"/>
<rect x="736" y="171" width="3" height="1" fill="#ff3c3c"/>
<rect x="736" y="159" width="1" height="13" fill="#ff3c3c"/>
<rect x="738" y="159" width="1" height="13" fill="#ff3c3c"/>
<rect x="742" y="161" width="1" height="8" fill="#54fcfc"/>
<rect x="741" y="161" width="3" height="1" fill="#54fcfc"/>
<rect x="747" y="157" width="1" height="15" fill="#54fcfc"/>
<rect x="746" y="162" width="3" height="6" fill="#54fcfc"/>
<rect x="751" y="162" width="1" height="2" fill="#ff3c3c"/>
<rect x="751" y="169" width="1" height="3" fill="#ff3c3c"/>
<rect x="750" y="164" width="3" height="1" fill="#ff3c3c"/>
<rect x="750" y="168" width="3" height="1" fill="#ff3c3c"/>
<rect x="750" y="164" width="1" height="5" fill="#ff3c3c"/>
<rect x="752" y="164" width="1" height="5" fill="#ff3c3c"/>
<rect x="756" y="162" width="1" height="7" fill="#54fcfc"/>
<rect x="755" y="164" width="3" height="4" fill="#54fcfc"/>
<rect x="761" y="165" width="1" height="4" fill="#54fcfc"/>
<rect x="760" y="168" width="3" height="1" fill="#54fcfc"/>
<rect x="765" y="169" width="1" height="19" fill="#54fcfc"/>
<rect x="764" y="169" width="3" height="13" fill="#54fcfc"/>
<rect x="770" y="177" width="1" height="1" fill="#ff3c3c"/>
<rect x="770" y="180" width="1" height="2" fill="#ff3c3c"/>
<rect x="769" y="178" width="3" height="2" fill="#ff3c3c"/>
<rect x="775" y="178" width="1" height="8" fill="#ffffff"/>
<rect x="774" y="182" width="1" height="1" fill="#ffffff"/>
<rect x="780" y="179" width="1" height="4" fill="#ff3c3c"/>
<rect x="779" y="173" width="3" height="1" fill="#ff3c3c"/>
<rect x="779" y="178" width="3" height="1" fill="#ff3c3c"/>
<rect x="779" y="173" width="1" height="6" fill="#ff3c3c"/>
<rect x="781" y="173" width="1" height="6" fill="#ff3c3c"/>
<rect x="784" y="166" width="1" height="6" fill="#ff3c3c"/>
<rect x="783" y="172" width="3" height="1" fill="#ff3c3c"/>
<rect x="783" y="177" width="3" height="1" fill="#ff3c3c"/>
<rect x="783" y="172" width="1" height="6" fill="#ff3c3c"/>
<rect x="785" y="172" width="1" height="6" fill="#ff3c3c"/>
<rect x="789" y="169" width="1" height="13" fill="#54fcfc"/>
<rect x="788" y="170" width="3" height="10" fill="#54fcfc"/>
<rect x="794" y="176" width="1" height="14" fill="#54fcfc"/>
<rect x="793" y="176" width="3" height="11" fill="#54fcfc"/>
<rect x="798" y="184" width="1" height="14" fill="#54fcfc"/>
<rect x="797" y="187" width="3" height="6" fill="#54fcfc"/>
<rect x="803" y="190" width="1" height="8" fill="#54fcfc"/>
<rect x="802" y="192" width="3" height="4" fill="#54fcfc"/>
<rect x="808" y="196" width="1" height="17" fill="#54fcfc"/>
<rect x="807" y="198" width="3" height="14" fill="#54fcfc"/>
<rect x="813" y="205" width="1" height="9" fill="#54fcfc"/>
<rect x="812" y="206" width="3" height="2" fill="#54fcfc"/>
<rect x="817" y="204" width="1" height="6" fill="#ffffff"/>
<rect x="816" y="207" width="1" height="1" fill="#ffffff"/>
<rect x="822" y="185" width="1" height="9" fill="#ff3c3c"/>
<rect x="821" y="194" width="3" height="1" fill="#ff3c3c"/>
<rect x="821" y="209" width="3" height="1" fill="#ff3c3c"/>
<rect x="821" y="194" width="1" height="16" fill="#ff3c3c"/>
<rect x="823" y="194" width="1" height="16" fill="#ff3c3c"/>
<rect x="827" y="184" width="1" height="12" fill="#54fcfc"/>
<rect x="826" y="187" width="3" height="3" fill="#54fcfc"/>
<rect x="831" y="173" width="1" height="3" fill="#ff3c3c"/>
<rect x="831" y="192" width="1" height="2" fill="#ff3c3c"/>
<rect x="830" y="176" width="3" height="1" fill="#ff3c3c"/>
<rect x="830" y="191" width="3" height="1" fill="#ff3c3c"/>
<rect x="830" y="176" width="1" height="16" fill="#ff3c3c"/>
<rect x="832" y="176" width="1" height="16" fill="#ff3c3c"/>
<rect x="836" y="178" width="1" height="12" fill="#54fcfc"/>
<rect x="835" y="180" width="3" height="3" fill="#54fcfc"/>
<rect x="841" y="184" width="1" height="10" fill="#54fcfc"/>
<rect x="840" y="184" width="3" height="7" fill="#54fcfc"/>
<rect x="846" y="189" width="1" height="5" fill="#54fcfc"/>
<rect x="845" y="191" width="3" height="2" fill="#54fcfc"/>
<rect x="850" y="194" width="1" height="7" fill="#ff3c3c"/>
<rect x="849" y="191" width="3" height="1" fill="#ff3c3c"/>
<rect x="849" y="193" width="3" height="1" fill="#ff3c3c"/>
<rect x="849" y="191" width="1" height="3" fill="#ff3c3c"/>
<rect x="851" y="191" width="1" height="3" fill="#ff3c3c"/>
<rect x="855" y="191" width="1" height="4" fill="#ff3c3c"/>
<rect x="854" y="190" width="3" height="2" fill="#ff3c3c"/>
<rect x="860" y="180" width="1" height="5" fill="#ff3c3c"/>
<rect x="860" y="188" width="1" height="3" fill="#ff3c3c"/>
<rect x="859" y="185" width="3" height="1" fill="#ff3c3c"/>
<rect x="859" y="187" width="3" height="1" fill="#ff3c3c"/>
<rect x="859" y="185" width="1" height="3" fill="#ff3c3c"/>
<rect x="861" y="185" width="1" height="3" fill="#ff3c3c"/>
<rect x="864" y="179" width="1" height="9" fill="#54fcfc"/>
<rect x="863" y="185" width="3" height="1" fill="#54fcfc"/>
<rect x="869" y="185" width="1" height="9" fill="#54fcfc"/>
<rect x="868" y="188" width="3" height="1" fill="#54fcfc"/>
<rect x="874" y="188" width="1" height="6" fill="#54fcfc"/>
<rect x="873" y="191" width="3" height="2" fill="#54fcfc"/>
<rect x="879" y="189" width="1" height="2" fill="#ff3c3c"/>
<rect x="878" y="191" width="3" height="1" fill="#ff3c3c"/>
<rect x="878" y="196" width="3" height="1" fill="#ff3c3c"/>
<rect x="878" y="191" width="1" height="6" fill="#ff3c3c"/>
<rect x="880" y="191" width="1" height="6" fill="#ff3c3c"/>
<rect x="883" y="190" width="1" height="6" fill="#54fcfc"/>
<rect x="882" y="193" width="3" height="1" fill="#54fcfc"/>
<rect x="888" y="194" width="1" height="14" fill="#54fcfc"/>
<rect x="887" y="194" width="3" height="12" fill="#54fcfc"/>
<rect x="893" y="207" width="1" height="7" fill="#ff3c3c"/>
<rect x="892" y="204" width="3" height="1" fill="#ff3c3c"/>
<rect x="892" y="206" width="3" height="1" fill="#ff3c3c"/>
<rect x="892" y="204" width="1" height="3" fill="#ff3c3c"/>
<rect x="894" y="204" width="1" height="3" fill="#ff3c3c"/>
<rect x="897" y="198" width="1" height="8" fill="#ffffff"/>
<rect x="896" y="202" width="1" height="1" fill="#ffffff"/>
<rect x="902" y="192" width="1" height="3" fill="#ff3c3c"/>
<rect x="901" y="195" width="3" height="1" fill="#ff3c3c"/>
<rect x="901" y="205" width="3" height="1" fill="#ff3c3c"/>
<rect x="901" y="195" width="1" height="11" fill="#ff3c3c"/>
<rect x="903" y="195" width="1" height="11" fill="#ff3c3c"/>
<rect x="907" y="191" width="1" height="6" fill="#54fcfc"/>
<rect x="906" y="192" width="3" height="2" fill="#54fcfc"/>
<rect x="912" y="194" width="1" height="6" fill="#54fcfc"/>
<rect x="911" y="194" width="3" height="3" fill="#54fcfc"/>
<rect x="916" y="190" width="1" height="1" fill="#ff3c3c"/>
<rect x="915" y="191" width="3" height="1" fill="#ff3c3c"/>
<rect x="915" y="197" width="3" height="1" fill="#ff3c3c"/>
<rect x="915" y="191" width="1" height="7" fill="#ff3c3c"/>
<rect x="917" y="191" width="1" height="7" fill="#ff3c3c"/>
<rect x="921" y="186" width="1" height="1" fill="#ff3c3c"/>
<rect x="921" y="190" width="1" height="2" fill="#ff3c3c"/>
<rect x="920" y="187" width="3" height="1" fill="#ff3c3c"/>
<rect x="920" y="189" width="3" height="1" fill="#ff3c3c"/>
<rect x="920" y="187" width="1" height="3" fill="#ff3c3c"/>
<rect x="922" y="187" width="1" height="3" fill="#ff3c3c"/>
<rect x="926" y="184" width="1" height="9" fill="#54fcfc"/>
<rect x="925" y="186" width="3" height="2" fill="#54fcfc"/>
<rect x="930" y="189" width="1" height="7" fill="#54fcfc"/>
<rect x="929" y="189" width="3" height="4" fill="#54fcfc"/>
<rect x="935" y="194" width="1" height="2" fill="#ff3c3c"/>
<rect x="935" y="200" width="1" height="2" fill="#ff3c3c"/>
<rect x="934" y="196" width="3" height="1" fill="#ff3c3c"/>
<rect x="934" y="199" width="3" height="1" fill="#ff3c3c"/>
<rect x="934" y="196" width="1" height="4" fill="#ff3c3c"/>
<rect x="936" y="196" width="1" height="4" fill="#ff3c3c"/>
<rect x="940" y="193" width="1" height="10" fill="#54fcfc"/>
<rect x="939" y="197" width="3" height="1" fill="#54fcfc"/>
<rect x="945" y="173" width="1" height="13" fill="#ff3c3c"/>
<rect x="944" y="186" width="3" height="1" fill="#ff3c3c"/>
<rect x="944" y="199" width="3" height="1" fill="#ff3c3c"/>
<rect x="944" y="186" width="1" height="14" fill="#ff3c3c"/>
<rect x="946" y="186" width="1" height="14" fill="#ff3c3c"/>
<rect x="949" y="175" width="1" height="3" fill="#ff3c3c"/>
<rect x="949" y="186" width="1" height="2" fill="#ff3c3c"/>
<rect x="948" y="178" width="3" height="1" fill="#ff3c3c"/>
<rect x="948" y="185" width="3" height="1" fill="#ff3c3c"/>
<rect x="948" y="178" width="1" height="8" fill="#ff3c3c"/>
<rect x="950" y="178" width="1" height="8" fill="#ff3c3c"/>
<rect x="954" y="153" width="1" height="4" fill="#ff3c3c"/>
<rect x="953" y="157" width="3" height="1" fill="#ff3c3c"/>
<rect x="953" y="181" width="3" height="1" fill="#ff3c3c"/>
<rect x="953" y="157" width="1" height="25" fill="#ff3c3c"/>
<rect x="955" y="157" width="1" height="25" fill="#ff3c3c"/>
<rect x="959" y="152" width="1" height="4" fill="#ff3c3c"/>
<rect x="959" y="158" width="1" height="5" fill="#ff3c3c"/>
<rect x="958" y="156" width="3" height="2" fill="#ff3c3c"/>
<rect x="963" y="144" width="1" height="4" fill="#ff3c3c"/>
<rect x="962" y="148" width="3" height="1" fill="#ff3c3c"/>
<rect x="962" y="153" width="3" height="1" fill="#ff3c3c"/>
<rect x="962" y="148" width="1" height="6" fill="#ff3c3c"/>
<rect x="964" y="148" width="1" height="6" fill="#ff3c3c"/>
<rect x="968" y="119" width="1" height="6" fill="#ff3c3c"/>
<rect x="967" y="125" width="3" height="1" fill="#ff3c3c"/>
<rect x="967" y="143" width="3" height="1" fill="#ff3c3c"/>
<rect x="967" y="125" width="1" height="19" fill="#ff3c3c"/>
<rect x="969" y="125" width="1" height="19" fill="#ff3c3c"/>
<rect x="973" y="120" width="1" height="28" fill="#54fcfc"/>
<rect x="972" y="120" width="3" height="26" fill="#54fcfc"/>
<rect x="978" y="125" width="1" height="14" fill="#ff3c3c"/>
<rect x="977" y="139" width="3" height="1" fill="#ff3c3c"/>
<rect x="977" y="145" width="3" height="1" fill="#ff3c3c"/>
<rect x="977" y="139" width="1" height="7" fill="#ff3c3c"/>
<rect x="979" y="139" width="1" height="7" fill="#ff3c3c"/>
<rect x="982" y="138" width="1" height="17" fill="#54fcfc"/>
<rect x="981" y="139" width="3" height="11" fill="#54fcfc"/>
<rect x="987" y="143" width="1" height="10" fill="#54fcfc"/>
<rect x="986" y="148" width="3" height="1" fill="#54fcfc"/>
<rect x="992" y="139" width="1" height="2" fill="#ff3c3c"/>
<rect x="991" y="141" width="3" height="1" fill="#ff3c3c"/>
<rect x="991" y="148" width="3" height="1" fill="#ff3c3c"/>
<rect x="991" y="141" width="1" height="8" fill="#ff3c3c"/>
<rect x="993" y="141" width="1" height="8" fill="#ff3c3c"/>
<rect x="996" y="141" width="1" height="7" fill="#54fcfc"/>
<rect x="995" y="142" width="3" height="2" fill="#54fcfc"/>
<rect x="1001" y="127" width="1" height="6" fill="#ff3c3c"/>
<rect x="1001" y="146" width="1" height="6" fill="#ff3c3c"/>
<rect x="1000" y="133" width="3" height="1" fill="#ff3c3c"/>
<rect x="1000" y="145" width="3" height="1" fill="#ff3c3c"/>
<rect x="1000" y="133" width="1" height="13" fill="#ff3c3c"/>
<rect x="1002" y="133" width="1" height="13" fill="#ff3c3c"/>
<rect x="1006" y="122" width="1" height="4" fill="#ff3c3c"/>
<rect x="1006" y="131" width="1" height="3" fill="#ff3c3c"/>
<rect x="1005" y="126" width="3" height="1" fill="#ff3c3c"/>
<rect x="1005" y="130" width="3" height="1" fill="#ff3c3c"/>
<rect x="1005" y="126" width="1" height="5" fill="#ff3c3c"/>
<rect x="1007" y="126" width="1" height="5" fill="#ff3c3c"/>
<rect x="1011" y="115" width="1" height="3" fill="#ff3c3c"/>
<rect x="1011" y="124" width="1" height="4" fill="#ff3c3c"/>
<rect x="1010" y="118" width="3" height="1" fill="#ff3c3c"/>
<rect x="1010" y="123" width="3" height="1" fill="#ff3c3c"/>
<rect x="1010" y="118" width="1" height="6" fill="#ff3c3c"/>
<rect x="1012" y="118" width="1" height="6" fill="#ff3c3c"/>
<rect x="1015" y="117" width="1" height="15" fill="#54fcfc"/>
<rect x="1014" y="117" width="3" height="13" fill="#54fcfc"/>
<rect x="1020" y="126" width="1" height="14" fill="#54fcfc"/>
<rect x="1019" y="128" width="3" height="1" fill="#54fcfc"/>
<rect x="1025" y="113" width="1" height="8" fill="#ff3c3c"/>
<rect x="1025" y="126" width="1" height="6" fill="#ff3c3c"/>
<rect x="1024" y="121" width="3" height="1" fill="#ff3c3c"/>
<rect x="1024" y="125" width="3" height="1" fill="#ff3c3c"/>
<rect x="1024" y="121" width="1" height="5" fill="#ff3c3c"/>
<rect x="1026" y="121" width="1" height="5" fill="#ff3c3c"/>
<rect x="1029" y="121" width="1" height="10" fill="#54fcfc"/>
<rect x="1028" y="125" width="3" height="5" fill="#54fcfc"/>
<rect x="1034" y="133" width="1" height="35" fill="#54fcfc"/>
<rect x="1033" y="133" width="3" height="24" fill="#54fcfc"/>
<rect x="1039" y="157" width="1" height="19" fill="#54fcfc"/>
<rect x="1038" y="160" width="3" height="16" fill="#54fcfc"/>
<rect x="1044" y="168" width="1" height="10" fill="#54fcfc"/>
<rect x="1043" y="169" width="3" height="4" fill="#54fcfc"/>
<rect x="1048" y="158" width="1" height="12" fill="#ff3c3c"/>
<rect x="1047" y="170" width="3" height="1" fill="#ff3c3c"/>
<rect x="1053" y="170" width="1" height="1" fill="#ff3c3c"/>
<rect x="1052" y="171" width="3" height="1" fill="#ff3c3c"/>
<rect x="1052" y="174" width="3" height="1" fill="#ff3c3c"/>
<rect x="1052" y="171" width="1" height="4" fill="#ff3c3c"/>
<rect x="1054" y="171" width="1" height="4" fill="#ff3c3c"/>
<polyline points="2,375.17 3,374.90 4,374.63 5,374.44 6,374.33 7,374.22 8,374.11 9,374.00 10,373.89 11,373.78 12,373.67 13,373.56 14,373.44 15,373.32 16,373.19 17,373.07 18,372.95 19,372.83 20,372.71 21,372.58 22,372.46 23,372.37 24,372.30 25,372.23 26,372.17 27,372.10 28,372.03 29,371.97 30,371.90 31,371.83 32,371.77 33,371.70 34,371.63 35,371.57 36,371.50 37,371.43 38,371.36 39,371.29 40,371.22 41,371.15 42,371.08 43,371.01 44,370.94 45,370.86 46,370.79 47,370.72 48,370.65 49,370.58 50,370.51 51,370.44 52,370.38 53,370.35 54,370.31 55,370.28 56,370.25 57,370.21 58,370.18 59,370.14 60,370.11 61,370.07 62,370.04 63,370.00 64,369.97 65,369.94 66,369.90 67,369.87 68,369.83 69,369.80 70,369.76 71,369.73 72,369.70 73,369.66 74,369.63 75,369.59 76,369.56 77,369.52 78,369.49 79,369.45 80,369.42 81,369.39 82,369.35 83,369.32 84,368.90 85,368.48 86,368.45 87,368.41 88,368.38 89,368.34 90,368.31 91,368.27 92,368.24 93,368.20 94,368.17 95,368.13 96,368.10 97,368.07 98,368.03 99,368.00 100,367.96 101,367.93 102,367.89 103,367.86 104,367.82 105,367.79 106,367.75 107,367.72 108,367.67 109,367.61 110,367.54 111,367.48 112,367.42 113,367.35 114,367.29 115,367.23 116,367.16 117,367.10 118,367.04 119,366.97 120,366.91 121,366.85 122,366.78 123,366.72 124,366.66 125,366.59 126,366.53 127,366.45 128,366.35 129,366.25 130,366.15 131,366.05 132,365.95 133,365.85 134,365.75 135,365.65 136,365.55 137,365.45 138,365.35 139,365.25 140,365.15 141,365.05 142,364.95 143,364.85 144,364.75 145,364.65 146,364.53 147,364.40 148,364.27 149,364.13 150,364.00 151,363.87 152,363.73 153,363.60 154,363.47 155,363.34 156,363.23 157,363.12 158,363.01 159,362.90 160,362.80 161,362.69 162,362.57 163,362.47 164,362.36 165,362.19 166,361.98 167,361.77 168,361.55 169,361.34 170,361.13 171,360.92 172,360.70 173,360.49 174,360.28 175,360.06 176,359.86 177,359.66 178,359.47 179,359.27 180,359.07 181,358.88 182,358.68 183,358.48 184,358.29 185,358.09 186,357.89 187,357.69 188,357.50 189,357.30 190,357.10 191,356.91 192,356.71 193,356.51 194,356.31 195,356.12 196,355.92 197,355.75 198,355.58 199,355.42 200,355.25 201,355.09 202,354.92 203,354.75 204,354.59 205,354.42 206,354.26 207,354.09 208,353.92 209,353.76 210,353.59 211,353.43 212,353.26 213,353.09 214,352.93 215,352.76 216,352.60 217,352.43 218,352.26 219,352.10 220,351.93 221,351.76 222,351.60 223,351.43 224,351.28 225,351.15 226,351.03 227,350.91 228,350.78 229,350.66 230,350.54 231,350.42 232,350.29 233,350.17 234,350.05 235,349.93 236,349.80 237,349.68 238,349.56 239,349.43 240,349.31 241,349.19 242,349.07 243,348.94 244,348.82 245,348.70 246,348.58 247,348.45 248,348.33 249,348.21 250,348.08 251,347.96 252,347.82 253,347.67 254,347.52 255,347.36 256,347.21 257,347.06 258,346.90 259,346.75 260,346.60 261,346.44 262,346.29 263,346.13 264,345.98 265,345.83 266,345.67 267,345.52 268,345.37 269,345.21 270,345.06 271,344.91 272,344.75 273,344.60 274,344.50 275,344.39 276,344.29 277,344.18 278,344.08 279,343.97 280,343.87 281,343.77 282,343.66 283,343.56 284,343.45 285,343.38 286,343.34 287,343.29 288,343.25 289,343.21 290,343.16 291,343.12 292,343.01 293,342.83 294,342.64 295,342.46 296,342.28 297,342.09 298,341.91 299,341.73 300,341.54 301,341.36 302,341.18 303,340.99 304,340.81 305,340.62 306,340.44 307,340.26 308,340.07 309,339.89 310,339.75 311,339.65 312,339.55 313,339.45 314,339.35 315,339.25 316,339.15 317,339.05 318,338.95 319,338.85 320,338.75 321,338.65 322,338.55 323,338.45 324,338.35 325,338.25 326,338.15 327,338.05 328,337.95 329,337.83 330,337.69 331,337.54 332,337.40 333,337.26 334,337.12 335,336.97 336,336.83 337,336.69 338,336.55 339,336.41 340,336.26 341,336.12 342,335.98 343,335.84 344,335.69 345,335.55 346,335.41 347,335.27 348,335.12 349,334.98 350,334.84 351,334.70 352,334.56 353,334.41 354,334.27 355,334.14 356,334.02 357,333.90 358,333.78 359,333.66 360,333.54 361,333.42 362,333.30 363,333.18 364,333.06 365,332.94 366,332.82 367,332.70 368,332.58 369,332.46 370,332.34 371,332.21 372,332.08 373,331.96 374,331.83 375,331.71 376,331.58 377,331.45 378,331.33 379,331.20 380,331.07 381,330.95 382,330.82 383,330.69 384,330.57 385,330.44 386,330.32 387,330.19 388,330.06 389,329.94 390,329.81 391,329.68 392,329.56 393,329.43 394,329.30 395,329.18 396,329.05 397,328.93 398,328.74 399,328.54 400,328.34 401,328.15 402,327.95 403,327.75 404,327.55 405,327.35 406,327.15 407,326.95 408,326.76 409,326.56 410,326.36 411,326.16 412,325.96 413,325.76 414,325.56 415,325.37 416,325.17 417,324.97 418,324.77 419,324.57 420,324.37 421,324.17 422,323.98 423,323.78 424,323.58 425,323.38 426,323.22 427,323.05 428,322.88 429,322.72 430,322.55 431,322.38 432,322.22 433,322.05 434,321.88 435,321.72 436,321.55 437,321.38 438,321.22 439,321.05 440,320.88 441,320.72 442,320.55 443,320.38 444,320.22 445,320.05 446,319.88 447,319.72 448,319.55 449,319.38 450,319.22 451,319.05 452,318.88 453,318.73 454,318.59 455,318.46 456,318.32 457,318.18 458,318.05 459,317.91 460,317.77 461,317.63 462,317.50 463,317.36 464,317.22 465,317.09 466,316.95 467,316.81 468,316.67 469,316.54 470,316.40 471,316.26 472,316.12 473,315.99 474,315.85 475,315.71 476,315.58 477,315.44 478,315.30 479,315.16 480,315.03 481,314.95 482,314.88 483,314.82 484,314.75 485,314.69 486,314.63 487,314.56 488,314.50 489,314.43 490,314.30 491,314.10 492,313.90 493,313.70 494,313.50 495,313.30 496,313.10 497,312.90 498,312.70 499,312.50 500,312.31 501,312.14 502,311.97 503,311.81 504,311.63 505,311.46 506,311.29 507,311.12 508,310.95 509,310.78 510,310.62 511,310.44 512,310.27 513,310.11 514,309.94 515,309.76 516,309.59 517,309.43 518,309.25 519,309.08 520,308.91 521,308.72 522,308.54 523,308.35 524,308.17 525,307.98 526,307.80 527,307.61 528,307.43 529,307.24 530,307.06 531,306.87 532,306.69 533,306.50 534,306.32 535,306.13 536,305.95 537,305.76 538,305.58 539,305.39 540,305.17 541,304.92 542,304.67 543,304.42 544,304.17 545,303.91 546,303.66 547,303.41 548,303.16 549,302.91 550,302.65 551,302.40 552,302.15 553,301.90 554,301.65 555,301.39 556,301.14 557,300.89 558,300.64 559,300.39 560,300.13 561,299.88 562,299.63 563,299.38 564,299.13 565,298.89 566,298.65 567,298.41 568,298.17 569,297.93 570,297.69 571,297.45 572,297.21 573,296.97 574,296.74 575,296.50 576,296.26 577,296.02 578,295.78 579,295.54 580,295.30 581,295.06 582,294.82 583,294.59 584,294.35 585,294.11 586,293.87 587,293.63 588,293.39 589,293.13 590,292.78 591,292.43 592,292.08 593,291.73 594,291.38 595,291.03 596,290.68 597,290.33 598,289.98 599,289.63 600,289.28 601,288.93 602,288.59 603,288.24 604,287.89 605,287.54 606,287.19 607,286.84 608,286.49 609,286.14 610,285.79 611,285.44 612,285.09 613,284.74 614,284.40 615,284.06 616,283.72 617,283.39 618,283.05 619,282.71 620,282.37 621,282.04 622,281.70 623,281.36 624,281.02 625,280.69 626,280.35 627,280.01 628,279.67 629,279.34 630,279.00 631,278.66 632,278.32 633,277.99 634,277.65 635,277.31 636,276.97 637,276.64 638,276.30 639,275.99 640,275.68 641,275.37 642,275.05 643,274.74 644,274.43 645,274.12 646,273.81 647,273.50 648,273.18 649,272.87 650,272.56 651,272.25 652,271.94 653,271.63 654,271.31 655,271.00 656,270.69 657,270.38 658,270.07 659,269.76 660,269.45 661,269.13 662,268.83 663,268.51 664,268.21 665,267.89 666,267.59 667,267.27 668,266.97 669,266.65 670,266.20 671,265.60 672,265.00 673,264.40 674,263.80 675,263.37 676,263.12 677,262.86 678,262.61 679,262.35 680,262.10 681,261.84 682,261.59 683,261.33 684,261.08 685,260.82 686,260.57 687,260.31 688,260.06 689,259.80 690,259.55 691,259.29 692,259.04 693,258.78 694,258.53 695,258.31 696,258.14 697,257.97 698,257.81 699,257.63 700,257.46 701,257.29 702,257.12 703,256.95 704,256.78 705,256.62 706,256.44 707,256.27 708,256.11 709,255.94 710,255.76 711,255.59 712,255.43 713,255.25 714,255.09 715,254.93 716,254.78 717,254.62 718,254.47 719,254.32 720,254.18 721,254.03 722,253.88 723,253.72 724,253.57 725,253.43 726,253.28 727,253.12 728,252.97 729,252.82 730,252.68 731,252.53 732,252.38 733,252.22 734,252.07 735,251.92 736,251.76 737,251.60 738,251.44 739,251.28 740,251.12 741,250.96 742,250.80 743,250.64 744,250.48 745,250.32 746,250.16 747,250.00 748,249.84 749,249.68 750,249.52 751,249.36 752,249.20 753,249.04 754,248.88 755,248.72 756,248.56 757,248.40 758,248.24 759,248.08 760,247.92 761,247.76 762,247.60 763,247.44 764,247.28 765,247.12 766,246.96 767,246.80 768,246.64 769,246.48 770,246.35 771,246.25 772,246.15 773,246.05 774,245.95 775,245.85 776,245.75 777,245.65 778,245.55 779,245.45 780,245.35 781,245.25 782,245.15 783,245.05 784,244.95 785,244.85 786,244.75 787,244.65 788,244.55 789,244.45 790,244.37 791,244.30 792,244.22 793,244.16 794,244.09 795,244.02 796,243.94 797,243.88 798,243.81 799,243.74 800,243.66 801,243.59 802,243.53 803,243.46 804,243.38 805,243.31 806,243.25 807,243.18 808,243.10 809,243.03 810,242.96 811,242.89 812,242.81 813,242.74 814,242.66 815,242.59 816,242.51 817,242.44 818,242.36 819,242.29 820,242.21 821,242.14 822,242.06 823,241.99 824,241.91 825,241.84 826,241.76 827,241.69 828,241.61 829,241.54 830,241.45 831,241.35 832,241.25 833,241.15 834,241.05 835,240.95 836,240.85 837,240.75 838,240.65 839,240.55 840,240.45 841,240.35 842,240.25 843,240.15 844,240.05 845,239.96 846,239.88 847,239.80 848,239.72 849,239.64 850,239.56 851,239.48 852,239.40 853,239.32 854,239.24 855,239.16 856,239.08 857,239.00 858,238.92 859,238.84 860,238.76 861,238.68 862,238.60 863,238.52 864,238.44 865,238.37 866,238.30 867,238.22 868,238.16 869,238.09 870,238.02 871,237.94 872,237.88 873,237.81 874,237.74 875,237.66 876,237.59 877,237.53 878,237.46 879,237.38 880,237.31 881,237.25 882,237.18 883,237.10 884,237.03 885,236.95 886,236.85 887,236.75 888,236.65 889,236.55 890,236.45 891,236.35 892,236.25 893,236.15 894,236.05 895,235.95 896,235.85 897,235.75 898,235.65 899,235.55 900,235.45 901,235.35 902,235.25 903,235.15 904,235.05 905,234.97 906,234.93 907,234.88 908,234.82 909,234.78 910,234.72 911,234.68 912,234.62 913,234.57 914,234.53 915,234.47 916,234.43 917,234.38 918,234.32 919,234.28 920,234.22 921,234.18 922,234.12 923,234.07 924,234.03 925,233.95 926,233.86 927,233.77 928,233.67 929,233.58 930,233.49 931,233.39 932,233.30 933,233.20 934,233.11 935,233.02 936,232.92 937,232.83 938,232.74 939,232.64 940,232.55 941,232.46 942,232.36 943,232.27 944,232.17 945,232.08 946,231.99 947,231.89 948,231.80 949,231.71 950,231.61 951,231.52 952,231.43 953,231.33 954,231.24 955,231.14 956,231.05 957,230.96 958,230.86 959,230.77 960,230.68 961,230.58 962,230.49 963,230.40 964,230.30 965,230.21 966,230.11 967,230.02 968,229.93 969,229.83 970,229.74 971,229.65 972,229.54 973,229.41 974,229.28 975,229.15 976,229.02 977,228.89 978,228.76 979,228.64 980,228.51 981,228.38 982,228.25 983,228.12 984,227.99 985,227.86 986,227.74 987,227.61 988,227.48 989,227.35 990,227.22 991,227.09 992,226.96 993,226.84 994,226.71 995,226.58 996,226.45 997,226.32 998,226.19 999,226.06 1000,225.90 1001,225.70 1002,225.50 1003,225.30 1004,225.10 1005,224.90 1006,224.70 1007,224.50 1008,224.30 1009,224.10 1010,223.90 1011,223.70 1012,223.50 1013,223.30 1014,223.10 1015,222.90 1016,222.70 1017,222.50 1018,222.30 1019,222.10 1020,221.90 1021,221.70 1022,221.54 1023,221.41 1024,221.29 1025,221.16 1026,221.04 1027,220.91 1028,220.79 1029,220.66 1030,220.54 1031,220.41 1032,220.29 1033,220.16 1034,220.04 1035,219.91 1036,219.79 1037,219.66 1038,219.56 1039,219.48 1040,219.40 1041,219.32 1042,219.24 1043,219.16 1044,219.08 1045,219.00 1046,218.92 1047,218.84 1048,218.76 1049,218.68 1050,218.60 1051,218.52 1052,218.44 1053,218.40" fill="none" stroke="#0000ff" stroke-width="1" stroke-linejoin="round"/>
<polyline points="2,357.35 3,357.05 4,356.75 5,356.54 6,356.43 7,356.32 8,356.21 9,356.10 10,355.99 11,355.88 12,355.77 13,355.66 14,355.53 15,355.40 16,355.27 17,355.13 18,355.00 19,354.87 20,354.73 21,354.60 22,354.47 23,354.35 24,354.26 25,354.17 26,354.08 27,354.00 28,353.90 29,353.81 30,353.73 31,353.63 32,353.55 33,353.45 34,353.35 35,353.25 36,353.15 37,353.05 38,352.95 39,352.85 40,352.75 41,352.65 42,352.56 43,352.47 44,352.39 45,352.30 46,352.21 47,352.13 48,352.04 49,351.96 50,351.87 51,351.79 52,351.70 53,351.61 54,351.53 55,351.44 56,351.37 57,351.31 58,351.25 59,351.19 60,351.13 61,351.07 62,351.01 63,350.95 64,350.89 65,350.83 66,350.77 67,350.71 68,350.65 69,350.59 70,350.53 71,350.50 72,350.50 73,350.50 74,350.50 75,350.50 76,350.50 77,350.50 78,350.50 79,350.50 80,350.50 81,350.50 82,350.50 83,350.50 84,350.50 85,350.50 86,350.50 87,350.50 88,350.50 89,350.50 90,350.50 91,350.50 92,350.50 93,350.50 94,350.50 95,350.50 96,350.50 97,350.50 98,350.50 99,350.50 100,350.50 101,350.50 102,350.50 103,350.50 104,350.50 105,350.50 106,350.50 107,350.48 108,350.39 109,350.29 110,350.20 111,350.10 112,350.01 113,349.91 114,349.82 115,349.72 116,349.63 117,349.53 118,349.44 119,349.34 120,349.25 121,349.13 122,348.99 123,348.86 124,348.72 125,348.58 126,348.45 127,348.31 128,348.17 129,348.03 130,347.90 131,347.76 132,347.62 133,347.49 134,347.35 135,347.21 136,347.07 137,346.94 138,346.80 139,346.66 140,346.53 141,346.39 142,346.25 143,346.12 144,345.98 145,345.84 146,345.62 147,345.36 148,345.10 149,344.83 150,344.57 151,344.31 152,344.05 153,343.79 154,343.53 155,343.30 156,343.12 157,342.92 158,342.74 159,342.54 160,342.36 161,342.16 162,341.98 163,341.78 164,341.60 165,341.28 166,340.85 167,340.41 168,339.97 169,339.61 170,339.30 171,338.98 172,338.67 173,338.36 174,338.04 175,337.73 176,337.41 177,337.10 178,336.79 179,336.47 180,336.16 181,335.84 182,335.53 183,335.22 184,334.90 185,334.59 186,334.27 187,333.96 188,333.65 189,333.33 190,333.08 191,332.83 192,332.59 193,332.34 194,332.10 195,331.85 196,331.61 197,331.36 198,331.12 199,330.87 200,330.63 201,330.38 202,330.14 203,329.89 204,329.65 205,329.40 206,329.16 207,328.91 208,328.67 209,328.42 210,328.17 211,327.85 212,327.53 213,327.21 214,326.90 215,326.58 216,326.26 217,325.94 218,325.62 219,325.35 220,325.17 221,325.00 222,324.83 223,324.65 224,324.48 225,324.31 226,324.14 227,323.96 228,323.79 229,323.62 230,323.44 231,323.27 232,323.10 233,322.92 234,322.75 235,322.58 236,322.40 237,322.23 238,322.06 239,321.88 240,321.71 241,321.54 242,321.36 243,321.19 244,321.02 245,320.84 246,320.67 247,320.49 248,320.31 249,320.13 250,319.95 251,319.76 252,319.58 253,319.40 254,319.22 255,319.04 256,318.85 257,318.67 258,318.49 259,318.31 260,318.13 261,317.95 262,317.76 263,317.58 264,317.40 265,317.22 266,317.04 267,316.85 268,316.67 269,316.49 270,316.35 271,316.26 272,316.17 273,316.08 274,315.98 275,315.89 276,315.80 277,315.71 278,315.61 279,315.52 280,315.43 281,315.26 282,315.06 283,314.87 284,314.67 285,314.47 286,314.27 287,314.07 288,313.87 289,313.68 290,313.48 291,313.28 292,313.08 293,312.88 294,312.69 295,312.49 296,312.29 297,312.09 298,311.89 299,311.70 300,311.50 301,311.30 302,311.13 303,310.96 304,310.80 305,310.63 306,310.46 307,310.29 308,310.12 309,309.95 310,309.79 311,309.62 312,309.45 313,309.28 314,309.11 315,308.94 316,308.78 317,308.61 318,308.44 319,308.27 320,308.10 321,307.93 322,307.76 323,307.56 324,307.36 325,307.17 326,306.97 327,306.77 328,306.57 329,306.37 330,306.18 331,305.98 332,305.78 333,305.58 334,305.38 335,305.19 336,304.99 337,304.79 338,304.59 339,304.39 340,304.20 341,304.00 342,303.80 343,303.63 344,303.50 345,303.36 346,303.23 347,303.09 348,302.96 349,302.82 350,302.69 351,302.56 352,302.42 353,302.29 354,302.15 355,302.02 356,301.88 357,301.75 358,301.61 359,301.48 360,301.34 361,301.21 362,301.07 363,300.94 364,300.83 365,300.72 366,300.62 367,300.51 368,300.41 369,300.30 370,300.20 371,300.09 372,299.99 373,299.88 374,299.78 375,299.67 376,299.57 377,299.46 378,299.36 379,299.25 380,299.10 381,298.91 382,298.71 383,298.52 384,298.32 385,298.13 386,297.94 387,297.74 388,297.55 389,297.35 390,297.16 391,297.01 392,296.87 393,296.73 394,296.60 395,296.46 396,296.33 397,296.19 398,296.06 399,295.92 400,295.79 401,295.65 402,295.52 403,295.38 404,295.25 405,295.11 406,294.98 407,294.84 408,294.71 409,294.57 410,294.44 411,294.30 412,294.00 413,293.70 414,293.39 415,293.09 416,292.79 417,292.49 418,292.18 419,291.88 420,291.58 421,291.28 422,290.98 423,290.67 424,290.37 425,290.08 426,289.83 427,289.58 428,289.34 429,289.09 430,288.84 431,288.60 432,288.35 433,288.10 434,287.86 435,287.61 436,287.37 437,287.12 438,286.87 439,286.64 440,286.44 441,286.24 442,286.03 443,285.83 444,285.63 445,285.43 446,285.23 447,285.02 448,284.82 449,284.62 450,284.42 451,284.22 452,284.01 453,283.81 454,283.61 455,283.41 456,283.21 457,283.00 458,282.80 459,282.60 460,282.39 461,282.16 462,281.93 463,281.70 464,281.48 465,281.25 466,281.02 467,280.79 468,280.56 469,280.34 470,280.11 471,279.88 472,279.65 473,279.42 474,279.20 475,278.97 476,278.74 477,278.51 478,278.34 479,278.22 480,278.11 481,277.99 482,277.88 483,277.76 484,277.64 485,277.52 486,277.41 487,277.29 488,277.18 489,277.06 490,276.93 491,276.79 492,276.65 493,276.51 494,276.37 495,276.23 496,276.09 497,275.95 498,275.81 499,275.67 500,275.49 501,275.28 502,275.07 503,274.85 504,274.64 505,274.43 506,274.22 507,274.00 508,273.79 509,273.58 510,273.36 511,273.08 512,272.78 513,272.47 514,272.16 515,271.85 516,271.54 517,271.23 518,270.93 519,270.62 520,270.31 521,270.00 522,269.67 523,269.33 524,269.00 525,268.67 526,268.33 527,268.00 528,267.67 529,267.33 530,267.00 531,266.67 532,266.37 533,266.10 534,265.84 535,265.58 536,265.31 537,265.05 538,264.79 539,264.52 540,264.26 541,264.00 542,263.73 543,263.45 544,263.16 545,262.87 546,262.58 547,262.29 548,262.00 549,261.71 550,261.42 551,261.13 552,260.84 553,260.55 554,260.18 555,259.73 556,259.29 557,258.84 558,258.40 559,257.95 560,257.50 561,257.06 562,256.61 563,256.17 564,255.72 565,255.34 566,255.02 567,254.70 568,254.38 569,254.06 570,253.74 571,253.42 572,253.10 573,252.78 574,252.46 575,252.13 576,251.78 577,251.44 578,251.09 579,250.75 580,250.40 581,250.05 582,249.71 583,249.36 584,249.02 585,248.67 586,248.27 587,247.81 588,247.36 589,246.90 590,246.44 591,245.99 592,245.53 593,245.07 594,244.61 595,244.16 596,243.70 597,243.24 598,242.79 599,242.33 600,241.82 601,241.27 602,240.71 603,240.16 604,239.60 605,239.05 606,238.50 607,237.94 608,237.39 609,236.83 610,236.28 611,235.70 612,235.10 613,234.50 614,233.90 615,233.30 616,232.70 617,232.10 618,231.50 619,230.90 620,230.30 621,229.70 622,229.08 623,228.45 624,227.81 625,227.17 626,226.54 627,225.90 628,225.26 629,224.63 630,223.99 631,223.35 632,222.72 633,222.23 634,221.90 635,221.56 636,221.22 637,220.89 638,220.55 639,220.21 640,219.88 641,219.54 642,219.20 643,218.87 644,218.48 645,218.03 646,217.59 647,217.14 648,216.70 649,216.25 650,215.80 651,215.36 652,214.91 653,214.47 654,214.02 655,213.51 656,212.92 657,212.33 658,211.74 659,211.15 660,210.56 661,209.97 662,209.38 663,208.78 664,208.19 665,207.68 666,207.25 667,206.81 668,206.37 669,205.94 670,205.50 671,205.06 672,204.63 673,204.19 674,203.75 675,203.32 676,202.86 677,202.39 678,201.91 679,201.44 680,200.96 681,200.49 682,200.01 683,199.54 684,199.21 685,199.03 686,198.84 687,198.66 688,198.47 689,198.29 690,198.08 691,197.84 692,197.60 693,197.36 694,197.12 695,196.86 696,196.57 697,196.29 698,196.01 699,195.72 700,195.44 701,195.16 702,194.88 703,194.59 704,194.31 705,194.03 706,193.74 707,193.52 708,193.35 709,193.18 710,193.02 711,192.85 712,192.68 713,192.52 714,192.35 715,192.18 716,192.02 717,191.85 718,191.68 719,191.55 720,191.44 721,191.33 722,191.22 723,191.12 724,191.01 725,190.90 726,190.79 727,190.68 728,190.58 729,190.47 730,190.36 731,190.25 732,190.17 733,190.12 734,190.06 735,190.01 736,189.95 737,189.90 738,189.85 739,189.79 740,189.74 741,189.68 742,189.63 743,189.57 744,189.52 745,189.46 746,189.41 747,189.35 748,189.30 749,189.25 750,189.19 751,189.14 752,189.08 753,189.03 754,188.97 755,188.91 756,188.85 757,188.80 758,188.74 759,188.68 760,188.62 761,188.56 762,188.50 763,188.45 764,188.39 765,188.33 766,188.27 767,188.21 768,188.15 769,188.10 770,188.04 771,187.98 772,187.92 773,187.86 774,187.80 775,187.75 776,187.69 777,187.63 778,187.61 779,187.63 780,187.65 781,187.66 782,187.68 783,187.70 784,187.72 785,187.74 786,187.75 787,187.77 788,187.79 789,187.81 790,187.83 791,187.85 792,187.86 793,187.88 794,187.90 795,187.92 796,187.94 797,187.95 798,187.97 799,187.99 800,188.00 801,188.01 802,188.02 803,188.02 804,188.03 805,188.04 806,188.04 807,188.05 808,188.06 809,188.06 810,188.07 811,188.08 812,188.08 813,188.09 814,188.10 815,188.10 816,188.11 817,188.12 818,188.12 819,188.13 820,188.14 821,188.14 822,188.15 823,188.16 824,188.16 825,188.17 826,188.18 827,188.18 828,188.19 829,188.20 830,188.20 831,188.21 832,188.21 833,188.22 834,188.23 835,188.23 836,188.24 837,188.24 838,188.25 839,188.25 840,188.26 841,188.27 842,188.27 843,188.28 844,188.28 845,188.29 846,188.29 847,188.30 848,188.31 849,188.31 850,188.32 851,188.32 852,188.33 853,188.33 854,188.34 855,188.35 856,188.35 857,188.36 858,188.36 859,188.37 860,188.37 861,188.38 862,188.39 863,188.39 864,188.40 865,188.41 866,188.42 867,188.43 868,188.44 869,188.45 870,188.46 871,188.48 872,188.49 873,188.50 874,188.51 875,188.52 876,188.54 877,188.55 878,188.56 879,188.57 880,188.58 881,188.59 882,188.63 883,188.70 884,188.77 885,188.84 886,188.91 887,188.98 888,189.05 889,189.12 890,189.19 891,189.26 892,189.33 893,189.40 894,189.47 895,189.53 896,189.60 897,189.67 898,189.73 899,189.80 900,189.87 901,189.93 902,190.00 903,190.07 904,190.13 905,190.20 906,190.27 907,190.33 908,190.40 909,190.47 910,190.50 911,190.50 912,190.49 913,190.49 914,190.49 915,190.48 916,190.48 917,190.48 918,190.47 919,190.47 920,190.47 921,190.47 922,190.46 923,190.46 924,190.46 925,190.45 926,190.45 927,190.45 928,190.45 929,190.44 930,190.44 931,190.44 932,190.43 933,190.43 934,190.43 935,190.43 936,190.42 937,190.42 938,190.42 939,190.41 940,190.41 941,190.41 942,190.40 943,190.40 944,190.34 945,190.22 946,190.09 947,189.97 948,189.85 949,189.72 950,189.60 951,189.48 952,189.35 953,189.23 954,189.11 955,188.98 956,188.86 957,188.71 958,188.52 959,188.34 960,188.15 961,187.97 962,187.78 963,187.60 964,187.42 965,187.23 966,187.05 967,186.86 968,186.68 969,186.49 970,186.34 971,186.21 972,186.08 973,185.94 974,185.81 975,185.69 976,185.56 977,185.43 978,185.30 979,185.17 980,185.03 981,184.91 982,184.78 983,184.65 984,184.52 985,184.39 986,184.26 987,184.12 988,184.00 989,183.87 990,183.71 991,183.53 992,183.34 993,183.16 994,182.97 995,182.79 996,182.61 997,182.43 998,182.24 999,182.06 1000,181.88 1001,181.69 1002,181.49 1003,181.28 1004,181.06 1005,180.84 1006,180.62 1007,180.41 1008,180.19 1009,179.97 1010,179.76 1011,179.54 1012,179.32 1013,179.11 1014,178.93 1015,178.79 1016,178.65 1017,178.50 1018,178.36 1019,178.22 1020,178.08 1021,177.94 1022,177.80 1023,177.65 1024,177.51 1025,177.37 1026,177.33 1027,177.38 1028,177.43 1029,177.47 1030,177.22 1031,176.68 1032,176.40 1033,176.40 1034,176.40 1035,176.40 1036,176.40 1037,176.40 1038,176.40 1039,176.40 1040,176.40 1041,176.40 1042,176.40 1043,176.40 1044,176.40 1045,176.40 1046,176.40 1047,176.40 1048,176.40 1049,176.40 1050,176.40 1051,176.40 1052,176.40 1053,176.40" fill="none" stroke="#5ac8f5" stroke-width="1" stroke-linejoin="round"/>
<polyline points="2,350.33 3,350.00 4,349.67 5,349.45 6,349.35 7,349.25 8,349.15 9,349.05 10,348.95 11,348.85 12,348.75 13,348.65 14,348.48 15,348.24 16,348.00 17,347.76 18,347.52 19,347.34 20,347.23 21,347.12 22,347.01 23,346.90 24,346.79 25,346.68 26,346.57 27,346.46 28,346.36 29,346.28 30,346.20 31,346.12 32,346.05 33,345.97 34,345.89 35,345.81 36,345.73 37,345.65 38,345.57 39,345.50 40,345.42 41,345.34 42,345.25 43,345.15 44,345.05 45,344.95 46,344.85 47,344.75 48,344.65 49,344.55 50,344.45 51,344.35 52,344.27 53,344.22 54,344.17 55,344.12 56,344.06 57,344.01 58,343.96 59,343.91 60,343.85 61,343.80 62,343.75 63,343.69 64,343.64 65,343.59 66,343.54 67,343.48 68,343.43 69,343.38 70,343.33 71,343.30 72,343.30 73,343.30 74,343.30 75,343.30 76,343.30 77,343.30 78,343.30 79,343.30 80,343.35 81,343.44 82,343.54 83,343.64 84,343.73 85,343.83 86,343.93 87,344.02 88,344.12 89,344.21 90,344.30 91,344.30 92,344.30 93,344.30 94,344.30 95,344.30 96,344.30 97,344.30 98,344.30 99,344.30 100,344.30 101,344.30 102,344.30 103,344.30 104,344.30 105,344.30 106,344.30 107,344.28 108,344.17 109,344.06 110,343.95 111,343.84 112,343.73 113,343.62 114,343.51 115,343.40 116,343.29 117,343.18 118,343.07 119,342.96 120,342.85 121,342.73 122,342.58 123,342.44 124,342.29 125,342.15 126,342.00 127,341.86 128,341.71 129,341.57 130,341.42 131,341.28 132,341.13 133,340.99 134,340.84 135,340.70 136,340.55 137,340.40 138,340.26 139,340.11 140,339.97 141,339.82 142,339.68 143,339.53 144,339.39 145,339.24 146,338.99 147,338.70 148,338.41 149,338.11 150,337.82 151,337.53 152,337.23 153,336.94 154,336.65 155,336.38 156,336.15 157,335.93 158,335.69 159,335.46 160,335.24 161,335.00 162,334.77 163,334.55 164,334.31 165,333.99 166,333.58 167,333.17 168,332.76 169,332.34 170,331.90 171,331.46 172,331.02 173,330.59 174,330.15 175,329.71 176,329.27 177,328.83 178,328.40 179,327.96 180,327.52 181,327.08 182,326.65 183,326.21 184,325.77 185,325.33 186,324.89 187,324.46 188,324.02 189,323.68 190,323.45 191,323.22 192,322.98 193,322.75 194,322.51 195,322.28 196,322.05 197,321.81 198,321.58 199,321.34 200,321.11 201,320.88 202,320.64 203,320.41 204,320.17 205,319.94 206,319.64 207,319.25 208,318.85 209,318.46 210,318.08 211,317.91 212,317.75 213,317.58 214,317.41 215,317.24 216,317.07 217,316.90 218,316.73 219,316.56 220,316.39 221,316.22 222,316.05 223,315.89 224,315.72 225,315.46 226,315.19 227,314.93 228,314.66 229,314.39 230,314.13 231,313.86 232,313.59 233,313.33 234,313.06 235,312.79 236,312.53 237,312.26 238,312.06 239,311.96 240,311.86 241,311.75 242,311.65 243,311.47 244,311.22 245,310.97 246,310.71 247,310.46 248,310.21 249,309.95 250,309.70 251,309.45 252,309.19 253,308.94 254,308.69 255,308.43 256,308.18 257,307.93 258,307.72 259,307.57 260,307.42 261,307.26 262,307.11 263,306.95 264,306.80 265,306.65 266,306.50 267,306.35 268,306.20 269,306.06 270,305.91 271,305.76 272,305.62 273,305.47 274,305.32 275,305.18 276,305.03 277,304.88 278,304.74 279,304.59 280,304.44 281,304.28 282,304.11 283,303.94 284,303.77 285,303.61 286,303.44 287,303.27 288,303.10 289,302.93 290,302.76 291,302.59 292,302.42 293,302.25 294,302.08 295,301.91 296,301.75 297,301.58 298,301.41 299,301.24 300,301.07 301,300.90 302,300.60 303,300.29 304,299.99 305,299.68 306,299.38 307,299.07 308,298.78 309,298.63 310,298.48 311,298.33 312,298.18 313,298.03 314,297.88 315,297.73 316,297.58 317,297.43 318,297.27 319,297.12 320,296.97 321,296.82 322,296.67 323,296.53 324,296.38 325,296.24 326,296.09 327,295.95 328,295.80 329,295.66 330,295.51 331,295.37 332,295.22 333,295.08 334,294.93 335,294.79 336,294.65 337,294.51 338,294.38 339,294.24 340,294.11 341,293.97 342,293.84 343,293.70 344,293.57 345,293.43 346,293.30 347,293.17 348,293.03 349,292.90 350,292.76 351,292.63 352,292.49 353,292.36 354,292.22 355,292.09 356,291.95 357,291.78 358,291.58 359,291.37 360,291.17 361,290.97 362,290.76 363,290.56 364,290.36 365,290.16 366,289.95 367,289.75 368,289.55 369,289.34 370,289.14 371,289.04 372,288.96 373,288.89 374,288.81 375,288.74 376,288.66 377,288.59 378,288.51 379,288.44 380,288.23 381,287.89 382,287.54 383,287.20 384,286.99 385,286.84 386,286.68 387,286.53 388,286.38 389,286.22 390,286.07 391,285.92 392,285.76 393,285.61 394,285.45 395,285.30 396,285.15 397,284.99 398,284.84 399,284.68 400,284.53 401,284.38 402,284.22 403,284.07 404,283.92 405,283.72 406,283.51 407,283.31 408,283.11 409,282.91 410,282.70 411,282.50 412,282.30 413,282.09 414,281.89 415,281.69 416,281.49 417,281.28 418,281.08 419,280.83 420,280.59 421,280.34 422,280.10 423,279.85 424,279.61 425,279.36 426,279.12 427,278.87 428,278.63 429,278.38 430,278.14 431,277.90 432,277.64 433,277.33 434,277.03 435,276.73 436,276.42 437,276.12 438,275.81 439,275.51 440,275.20 441,274.90 442,274.60 443,274.29 444,273.99 445,273.68 446,273.43 447,273.27 448,273.11 449,272.94 450,272.78 451,272.62 452,272.45 453,272.29 454,272.13 455,271.96 456,271.80 457,271.64 458,271.47 459,271.31 460,271.15 461,270.98 462,270.82 463,270.66 464,270.49 465,270.33 466,270.17 467,269.95 468,269.69 469,269.44 470,269.19 471,268.93 472,268.68 473,268.43 474,268.17 475,267.92 476,267.67 477,267.41 478,267.16 479,266.90 480,266.65 481,266.48 482,266.33 483,266.18 484,266.03 485,265.88 486,265.73 487,265.58 488,265.43 489,265.28 490,265.12 491,264.96 492,264.80 493,264.64 494,264.48 495,264.32 496,264.16 497,264.00 498,263.84 499,263.68 500,263.50 501,263.29 502,263.09 503,262.89 504,262.68 505,262.48 506,262.28 507,262.07 508,261.87 509,261.66 510,261.46 511,261.16 512,260.81 513,260.47 514,260.12 515,259.77 516,259.43 517,259.08 518,258.74 519,258.39 520,258.05 521,257.70 522,257.49 523,257.28 524,257.07 525,256.86 526,256.65 527,256.44 528,256.23 529,256.02 530,255.81 531,255.60 532,255.30 533,254.91 534,254.52 535,254.13 536,253.74 537,253.35 538,252.96 539,252.57 540,252.18 541,251.79 542,251.40 543,251.06 544,250.79 545,250.52 546,250.25 547,249.97 548,249.70 549,249.43 550,249.15 551,248.88 552,248.61 553,248.34 554,247.95 555,247.44 556,246.93 557,246.42 558,245.91 559,245.40 560,244.89 561,244.38 562,243.87 563,243.36 564,242.85 565,242.41 566,242.03 567,241.65 568,241.27 569,240.89 570,240.51 571,240.13 572,239.75 573,239.37 574,238.99 575,238.56 576,238.08 577,237.60 578,237.11 579,236.63 580,236.15 581,235.67 582,235.19 583,234.70 584,234.22 585,233.74 586,233.06 587,232.19 588,231.31 589,230.44 590,229.61 591,228.83 592,228.05 593,227.26 594,226.48 595,225.70 596,224.92 597,224.14 598,223.35 599,222.57 600,221.79 601,221.14 602,220.63 603,220.11 604,219.60 605,219.09 606,218.57 607,218.06 608,217.54 609,217.03 610,216.51 611,216.00 612,215.40 613,214.80 614,214.20 615,213.60 616,213.00 617,212.40 618,211.80 619,211.20 620,210.60 621,210.00 622,209.42 623,208.87 624,208.31 625,207.76 626,207.20 627,206.65 628,206.10 629,205.54 630,204.99 631,204.43 632,203.88 633,203.33 634,202.80 635,202.26 636,201.72 637,201.19 638,200.65 639,200.11 640,199.58 641,199.04 642,198.50 643,197.97 644,197.44 645,196.92 646,196.40 647,195.88 648,195.36 649,194.84 650,194.32 651,193.80 652,193.28 653,192.76 654,192.18 655,191.58 656,190.99 657,190.39 658,189.79 659,189.20 660,188.60 661,188.00 662,187.41 663,186.81 664,186.21 665,185.61 666,185.02 667,184.42 668,183.86 669,183.31 670,182.76 671,182.21 672,181.66 673,181.11 674,180.56 675,180.00 676,179.45 677,178.90 678,178.35 679,177.80 680,177.25 681,176.70 682,176.45 683,176.20 684,175.94 685,175.69 686,175.44 687,175.19 688,174.94 689,174.69 690,174.43 691,174.18 692,173.93 693,173.68 694,173.43 695,173.18 696,173.03 697,172.88 698,172.73 699,172.58 700,172.42 701,172.27 702,172.12 703,171.97 704,171.82 705,171.66 706,171.51 707,171.36 708,171.21 709,171.08 710,171.01 711,170.94 712,170.86 713,170.79 714,170.72 715,170.65 716,170.58 717,170.51 718,170.44 719,170.39 720,170.36 721,170.34 722,170.31 723,170.29 724,170.26 725,170.24 726,170.21 727,170.19 728,170.16 729,170.14 730,170.11 731,170.09 732,170.06 733,170.04 734,170.01 735,169.99 736,169.96 737,169.93 738,169.91 739,169.88 740,169.85 741,169.83 742,169.80 743,169.77 744,169.75 745,169.72 746,169.69 747,169.67 748,169.64 749,169.61 750,169.62 751,169.66 752,169.70 753,169.74 754,169.78 755,169.82 756,169.86 757,169.90 758,169.94 759,169.98 760,170.02 761,170.06 762,170.10 763,170.14 764,170.18 765,170.22 766,170.26 767,170.30 768,170.34 769,170.38 770,170.41 771,170.44 772,170.47 773,170.50 774,170.53 775,170.56 776,170.59 777,170.62 778,170.66 779,170.69 780,170.72 781,170.75 782,170.78 783,170.81 784,170.84 785,170.87 786,170.90 787,170.93 788,170.96 789,170.99 790,171.05 791,171.15 792,171.25 793,171.35 794,171.45 795,171.55 796,171.65 797,171.75 798,171.85 799,171.95 800,172.02 801,172.06 802,172.10 803,172.14 804,172.18 805,172.22 806,172.26 807,172.30 808,172.34 809,172.38 810,172.48 811,172.64 812,172.80 813,172.96 814,173.12 815,173.28 816,173.44 817,173.60 818,173.76 819,173.92 820,174.10 821,174.30 822,174.50 823,174.70 824,174.90 825,175.10 826,175.30 827,175.50 828,175.62 829,175.67 830,175.72 831,175.76 832,175.81 833,175.86 834,175.91 835,175.95 836,176.00 837,176.05 838,176.09 839,176.14 840,176.19 841,176.24 842,176.28 843,176.33 844,176.38 845,176.43 846,176.49 847,176.55 848,176.61 849,176.67 850,176.73 851,176.79 852,176.85 853,176.91 854,176.97 855,177.03 856,177.09 857,177.15 858,177.21 859,177.27 860,177.33 861,177.39 862,177.45 863,177.51 864,177.57 865,177.63 866,177.70 867,177.78 868,177.84 869,177.91 870,177.98 871,178.06 872,178.12 873,178.19 874,178.26 875,178.34 876,178.41 877,178.47 878,178.54 879,178.62 880,178.69 881,178.75 882,178.82 883,178.90 884,178.97 885,179.05 886,179.15 887,179.25 888,179.35 889,179.45 890,179.55 891,179.65 892,179.75 893,179.85 894,179.95 895,180.05 896,180.15 897,180.25 898,180.35 899,180.45 900,180.55 901,180.65 902,180.75 903,180.85 904,180.95 905,181.01 906,181.04 907,181.07 908,181.10 909,181.13 910,181.16 911,181.19 912,181.22 913,181.25 914,181.28 915,181.31 916,181.34 917,181.38 918,181.41 919,181.44 920,181.47 921,181.50 922,181.53 923,181.56 924,181.59 925,181.61 926,181.64 927,181.67 928,181.69 929,181.72 930,181.75 931,181.77 932,181.80 933,181.83 934,181.85 935,181.88 936,181.91 937,181.93 938,181.96 939,181.99 940,181.99 941,181.96 942,181.94 943,181.91 944,181.89 945,181.86 946,181.84 947,181.81 948,181.79 949,181.76 950,181.74 951,181.71 952,181.69 953,181.66 954,181.64 955,181.61 956,181.47 957,181.21 958,180.95 959,180.69 960,180.43 961,180.17 962,179.91 963,179.65 964,179.39 965,179.13 966,178.90 967,178.70 968,178.50 969,178.30 970,178.10 971,177.90 972,177.70 973,177.50 974,177.30 975,177.10 976,176.94 977,176.82 978,176.70 979,176.57 980,176.45 981,176.33 982,176.21 983,176.09 984,175.97 985,175.85 986,175.73 987,175.60 988,175.48 989,175.36 990,175.25 991,175.14 992,175.03 993,174.92 994,174.81 995,174.70 996,174.60 997,174.49 998,174.38 999,174.27 1000,174.16 1001,174.05 1002,173.90 1003,173.70 1004,173.50 1005,173.30 1006,173.10 1007,172.90 1008,172.70 1009,172.50 1010,172.30 1011,172.10 1012,171.90 1013,171.70 1014,171.49 1015,171.28 1016,171.06 1017,170.84 1018,170.62 1019,170.41 1020,170.19 1021,169.97 1022,169.76 1023,169.54 1024,169.32 1025,169.11 1026,168.94 1027,168.81 1028,168.69 1029,168.56 1030,168.50 1031,168.50 1032,168.50 1033,168.50 1034,168.50 1035,168.50 1036,168.50 1037,168.50 1038,168.50 1039,168.50 1040,168.50 1041,168.50 1042,168.50 1043,168.50 1044,168.50 1045,168.50 1046,168.50 1047,168.50 1048,168.50 1049,168.50 1050,168.50 1051,168.50 1052,168.50 1053,168.50" fill="none" stroke="#ffff00" stroke-width="1" stroke-linejoin="round"/>
<polyline points="2,342.39 3,342.16 4,341.94 5,341.71 6,341.53 7,341.38 8,341.23 9,341.07 10,340.93 11,340.77 12,340.62 13,340.47 14,340.35 15,340.25 16,340.15 17,340.05 18,339.95 19,339.85 20,339.75 21,339.65 22,339.55 23,339.45 24,339.35 25,339.26 26,339.17 27,339.08 28,338.99 29,338.90 30,338.81 31,338.72 32,338.63 33,338.54 34,338.45 35,338.36 36,338.28 37,338.20 38,338.12 39,338.05 40,337.97 41,337.89 42,337.81 43,337.73 44,337.65 45,337.57 46,337.50 47,337.42 48,337.34 49,337.27 50,337.21 51,337.14 52,337.08 53,337.02 54,336.96 55,336.89 56,336.83 57,336.77 58,336.71 59,336.64 60,336.58 61,336.52 62,336.46 63,336.39 64,336.33 65,336.26 66,336.18 67,336.11 68,336.03 69,335.95 70,335.88 71,335.80 72,335.72 73,335.65 74,335.57 75,335.49 76,335.42 77,335.34 78,335.57 79,336.12 80,336.48 81,336.65 82,336.82 83,336.98 84,337.15 85,337.32 86,337.47 87,337.61 88,337.74 89,337.88 90,338.02 91,338.16 92,338.29 93,338.43 94,338.49 95,338.46 96,338.44 97,338.41 98,338.39 99,338.36 100,338.34 101,338.31 102,338.29 103,338.26 104,338.24 105,338.21 106,338.15 107,338.06 108,337.97 109,337.87 110,337.78 111,337.68 112,337.59 113,337.50 114,337.40 115,337.31 116,337.21 117,337.12 118,337.03 119,336.93 120,336.84 121,336.74 122,336.65 123,336.56 124,336.46 125,336.37 126,336.28 127,336.15 128,335.92 129,335.69 130,335.45 131,335.22 132,334.99 133,334.75 134,334.52 135,334.28 136,334.05 137,333.82 138,333.58 139,333.35 140,333.12 141,332.87 142,332.60 143,332.34 144,332.07 145,331.81 146,331.55 147,331.28 148,331.02 149,330.75 150,330.49 151,330.23 152,329.96 153,329.70 154,329.43 155,329.12 156,328.77 157,328.42 158,328.06 159,327.71 160,327.36 161,327.01 162,326.65 163,326.30 164,325.95 165,325.59 166,325.24 167,324.89 168,324.54 169,323.98 170,323.39 171,322.81 172,322.23 173,321.65 174,321.06 175,320.48 176,319.90 177,319.32 178,318.80 179,318.30 180,317.80 181,317.30 182,316.80 183,316.14 184,315.44 185,314.75 186,314.05 187,313.35 188,312.84 189,312.52 190,312.20 191,311.87 192,311.55 193,311.23 194,310.91 195,310.59 196,310.26 197,309.94 198,309.62 199,309.30 200,308.98 201,308.66 202,308.33 203,308.01 204,307.69 205,307.37 206,307.04 207,306.71 208,306.38 209,306.06 210,305.73 211,305.40 212,305.07 213,304.75 214,304.42 215,304.09 216,303.76 217,303.45 218,303.18 219,302.92 220,302.65 221,302.39 222,302.12 223,301.86 224,301.60 225,301.33 226,301.07 227,300.80 228,300.54 229,300.27 230,300.01 231,299.75 232,299.48 233,299.22 234,298.95 235,298.69 236,298.42 237,298.16 238,297.93 239,297.76 240,297.59 241,297.42 242,297.24 243,297.07 244,296.90 245,296.73 246,296.56 247,296.39 248,296.22 249,296.04 250,295.87 251,295.70 252,295.53 253,295.36 254,295.19 255,295.01 256,294.84 257,294.66 258,294.48 259,294.31 260,294.13 261,293.96 262,293.78 263,293.60 264,293.43 265,293.25 266,293.11 267,292.97 268,292.84 269,292.71 270,292.57 271,292.44 272,292.31 273,292.17 274,292.04 275,291.91 276,291.77 277,291.64 278,291.51 279,291.37 280,291.24 281,291.09 282,290.92 283,290.76 284,290.59 285,290.43 286,290.26 287,290.10 288,289.94 289,289.77 290,289.61 291,289.44 292,289.28 293,289.11 294,288.95 295,288.79 296,288.62 297,288.46 298,288.29 299,288.13 300,287.96 301,287.80 302,287.45 303,287.10 304,286.76 305,286.41 306,286.06 307,285.71 308,285.39 309,285.26 310,285.13 311,285.00 312,284.87 313,284.74 314,284.61 315,284.48 316,284.35 317,284.22 318,284.09 319,283.96 320,283.83 321,283.70 322,283.57 323,283.39 324,283.22 325,283.04 326,282.87 327,282.70 328,282.52 329,282.35 330,282.17 331,282.00 332,281.83 333,281.65 334,281.48 335,281.30 336,281.15 337,281.04 338,280.92 339,280.81 340,280.69 341,280.58 342,280.46 343,280.35 344,280.23 345,280.12 346,280.00 347,279.88 348,279.77 349,279.65 350,279.54 351,279.42 352,279.31 353,279.19 354,279.08 355,278.96 356,278.85 357,278.74 358,278.63 359,278.52 360,278.42 361,278.31 362,278.20 363,278.09 364,277.99 365,277.88 366,277.77 367,277.67 368,277.56 369,277.45 370,277.32 371,277.15 372,276.98 373,276.81 374,276.64 375,276.47 376,276.30 377,276.13 378,275.97 379,275.80 380,275.63 381,275.46 382,275.29 383,275.12 384,274.95 385,274.79 386,274.62 387,274.50 388,274.39 389,274.29 390,274.18 391,274.07 392,273.96 393,273.85 394,273.74 395,273.63 396,273.53 397,273.42 398,273.31 399,273.20 400,273.09 401,272.98 402,272.88 403,272.77 404,272.66 405,272.55 406,272.44 407,272.33 408,272.23 409,272.12 410,272.01 411,271.90 412,271.57 413,271.24 414,270.91 415,270.58 416,270.25 417,269.91 418,269.58 419,269.25 420,268.92 421,268.59 422,268.26 423,267.93 424,267.60 425,267.27 426,266.92 427,266.57 428,266.22 429,265.87 430,265.53 431,265.18 432,264.83 433,264.48 434,264.13 435,263.79 436,263.44 437,263.09 438,262.74 439,262.41 440,262.11 441,261.80 442,261.50 443,261.20 444,260.89 445,260.59 446,260.29 447,259.99 448,259.68 449,259.38 450,259.08 451,258.77 452,258.47 453,258.17 454,257.87 455,257.56 456,257.26 457,256.96 458,256.65 459,256.35 460,256.09 461,255.86 462,255.63 463,255.40 464,255.17 465,254.95 466,254.72 467,254.49 468,254.26 469,254.04 470,253.81 471,253.58 472,253.35 473,253.12 474,252.90 475,252.67 476,252.44 477,252.21 478,252.06 479,251.97 480,251.89 481,251.81 482,251.72 483,251.64 484,251.56 485,251.47 486,251.39 487,251.31 488,251.22 489,251.14 490,251.04 491,250.94 492,250.82 493,250.72 494,250.60 495,250.50 496,250.38 497,250.28 498,250.16 499,250.06 500,249.93 501,249.79 502,249.65 503,249.51 504,249.37 505,249.23 506,249.09 507,248.95 508,248.81 509,248.51 510,248.20 511,247.88 512,247.56 513,247.25 514,246.94 515,246.64 516,246.33 517,246.02 518,245.72 519,245.41 520,245.11 521,244.80 522,244.39 523,243.98 524,243.57 525,243.16 526,242.75 527,242.34 528,241.93 529,241.52 530,241.11 531,240.70 532,240.33 533,239.98 534,239.64 535,239.29 536,238.95 537,238.60 538,238.25 539,237.91 540,237.56 541,237.22 542,236.87 543,236.48 544,236.03 545,235.59 546,235.14 547,234.70 548,234.25 549,233.80 550,233.36 551,232.91 552,232.47 553,232.02 554,231.45 555,230.74 556,230.03 557,229.32 558,228.62 559,227.91 560,227.20 561,226.49 562,225.79 563,225.08 564,224.37 565,223.97 566,223.61 567,223.24 568,222.88 569,222.51 570,222.14 571,221.78 572,221.41 573,221.05 574,220.68 575,220.22 576,219.67 577,219.12 578,218.56 579,218.01 580,217.46 581,216.90 582,216.35 583,215.80 584,215.24 585,214.69 586,214.14 587,213.58 588,213.03 589,212.48 590,211.83 591,211.10 592,210.36 593,209.62 594,208.89 595,208.15 596,207.41 597,206.68 598,205.94 599,205.20 600,204.47 601,203.67 602,202.80 603,201.93 604,201.07 605,200.20 606,199.33 607,198.47 608,197.60 609,196.73 610,195.87 611,195.00 612,194.12 613,193.25 614,192.37 615,191.50 616,190.62 617,189.74 618,188.87 619,187.99 620,187.11 621,186.24 622,185.44 623,184.71 624,183.98 625,183.25 626,182.53 627,181.80 628,181.07 629,180.35 630,179.62 631,178.89 632,178.16 633,177.53 634,176.98 635,176.44 636,175.89 637,175.35 638,174.80 639,174.25 640,173.71 641,173.16 642,172.62 643,172.07 644,171.45 645,170.74 646,170.04 647,169.34 648,168.63 649,167.93 650,167.22 651,166.52 652,165.82 653,165.11 654,164.48 655,163.88 656,163.29 657,162.69 658,162.09 659,161.50 660,160.90 661,160.30 662,159.71 663,159.11 664,158.51 665,157.91 666,157.32 667,156.72 668,156.12 669,155.52 670,154.92 671,154.31 672,153.71 673,153.11 674,152.51 675,151.91 676,151.31 677,150.71 678,150.10 679,149.50 680,148.90 681,148.30 682,148.08 683,147.87 684,147.65 685,147.44 686,147.22 687,147.01 688,146.79 689,146.57 690,146.36 691,146.14 692,145.93 693,145.71 694,145.49 695,145.29 696,145.14 697,144.99 698,144.85 699,144.70 700,144.55 701,144.41 702,144.26 703,144.11 704,143.97 705,143.82 706,143.67 707,143.60 708,143.60 709,143.60 710,143.60 711,143.60 712,143.60 713,143.60 714,143.60 715,143.60 716,143.60 717,143.60 718,143.60 719,143.69 720,143.86 721,144.04 722,144.21 723,144.39 724,144.56 725,144.74 726,144.91 727,145.08 728,145.25 729,145.42 730,145.58 731,145.75 732,145.92 733,146.06 734,146.18 735,146.29 736,146.41 737,146.53 738,146.65 739,146.76 740,146.88 741,147.00 742,147.12 743,147.24 744,147.35 745,147.47 746,147.59 747,147.71 748,147.82 749,147.94 750,148.09 751,148.27 752,148.45 753,148.63 754,148.81 755,148.99 756,149.17 757,149.35 758,149.53 759,149.71 760,149.89 761,150.07 762,150.25 763,150.43 764,150.61 765,150.79 766,150.97 767,151.15 768,151.33 769,151.51 770,151.67 771,151.81 772,151.95 773,152.09 774,152.23 775,152.37 776,152.51 777,152.65 778,152.79 779,152.93 780,153.07 781,153.21 782,153.35 783,153.49 784,153.63 785,153.77 786,153.91 787,154.05 788,154.19 789,154.33 790,154.53 791,154.79 792,155.05 793,155.31 794,155.57 795,155.83 796,156.09 797,156.35 798,156.61 799,156.87 800,157.15 801,157.45 802,157.75 803,158.05 804,158.35 805,158.65 806,158.95 807,159.25 808,159.55 809,159.85 810,160.18 811,160.54 812,160.90 813,161.26 814,161.62 815,161.98 816,162.34 817,162.70 818,163.06 819,163.42 820,163.72 821,163.97 822,164.22 823,164.47 824,164.72 825,164.97 826,165.22 827,165.47 828,165.66 829,165.77 830,165.89 831,166.00 832,166.11 833,166.23 834,166.34 835,166.46 836,166.58 837,166.70 838,166.82 839,166.94 840,167.06 841,167.18 842,167.30 843,167.42 844,167.54 845,167.67 846,167.81 847,167.95 848,168.09 849,168.23 850,168.37 851,168.51 852,168.65 853,168.79 854,168.93 855,169.10 856,169.30 857,169.50 858,169.70 859,169.90 860,170.10 861,170.30 862,170.50 863,170.70 864,170.90 865,171.05 866,171.15 867,171.25 868,171.35 869,171.45 870,171.55 871,171.65 872,171.75 873,171.85 874,171.95 875,172.08 876,172.24 877,172.40 878,172.56 879,172.72 880,172.88 881,173.04 882,173.20 883,173.36 884,173.52 885,173.67 886,173.81 887,173.95 888,174.09 889,174.23 890,174.37 891,174.51 892,174.65 893,174.79 894,174.93 895,175.10 896,175.30 897,175.50 898,175.70 899,175.90 900,176.10 901,176.30 902,176.50 903,176.70 904,176.90 905,177.07 906,177.21 907,177.35 908,177.49 909,177.63 910,177.77 911,177.91 912,178.05 913,178.19 914,178.33 915,178.46 916,178.58 917,178.70 918,178.82 919,178.94 920,179.06 921,179.18 922,179.30 923,179.42 924,179.54 925,179.61 926,179.64 927,179.67 928,179.69 929,179.72 930,179.75 931,179.77 932,179.80 933,179.83 934,179.85 935,179.88 936,179.91 937,179.93 938,179.96 939,179.99 940,180.00 941,180.00 942,180.00 943,180.00 944,180.00 945,180.00 946,180.00 947,180.00 948,180.00 949,180.00 950,180.00 951,180.00 952,180.00 953,180.00 954,180.00 955,180.00 956,179.85 957,179.55 958,179.25 959,178.95 960,178.65 961,178.35 962,178.05 963,177.75 964,177.43 965,177.10 966,176.77 967,176.43 968,176.10 969,175.77 970,175.43 971,175.10 972,174.77 973,174.43 974,174.10 975,173.77 976,173.51 977,173.32 978,173.14 979,172.95 980,172.76 981,172.58 982,172.39 983,172.21 984,172.02 985,171.84 986,171.65 987,171.46 988,171.28 989,171.09 990,170.92 991,170.75 992,170.58 993,170.42 994,170.25 995,170.08 996,169.92 997,169.75 998,169.58 999,169.42 1000,169.25 1001,169.08 1002,168.83 1003,168.50 1004,168.17 1005,167.83 1006,167.50 1007,167.17 1008,166.83 1009,166.50 1010,166.17 1011,165.83 1012,165.50 1013,165.17 1014,164.88 1015,164.62 1016,164.38 1017,164.12 1018,163.88 1019,163.62 1020,163.38 1021,163.12 1022,162.88 1023,162.62 1024,162.38 1025,162.12 1026,161.96 1027,161.89 1028,161.82 1029,161.75 1030,161.67 1031,161.60 1032,161.53 1033,161.45 1034,161.38 1035,161.31 1036,161.24 1037,161.85 1038,162.50 1039,162.50 1040,162.50 1041,162.50 1042,162.50 1043,162.50 1044,162.50 1045,162.50 1046,162.50 1047,162.50 1048,162.50 1049,162.50 1050,162.50 1051,162.50 1052,162.50 1053,162.50" fill="none" stroke="#ff00ff" stroke-width="1" stroke-linejoin="round"/>
<polyline points="2,333.19 3,333.17 4,333.15 5,333.13 6,333.11 7,333.08 8,333.06 9,333.04 10,333.02 11,333.00 12,332.18 13,332.13 14,332.09 15,332.04 16,332.00 17,330.59 18,330.57 19,330.54 20,330.52 21,330.50 22,329.69 23,329.68 24,329.66 25,329.65 26,329.63 27,329.62 28,329.60 29,329.59 30,329.57 31,329.56 32,329.54 33,329.53 34,329.51 35,329.50 36,328.80 37,328.81 38,328.81 39,328.82 40,328.82 41,328.83 42,328.83 43,328.84 44,328.84 45,328.85 46,328.85 47,328.85 48,328.86 49,328.86 50,328.87 51,328.87 52,328.88 53,328.88 54,328.89 55,328.89 56,328.90 57,328.90 58,328.91 59,328.91 60,328.92 61,328.92 62,328.93 63,328.93 64,328.94 65,328.94 66,328.95 67,328.95 68,328.95 69,328.96 70,328.96 71,328.97 72,328.97 73,328.98 74,328.98 75,328.99 76,328.99 77,329.00 78,329.30 79,329.90 80,330.50 81,330.96 82,331.28 83,331.60 84,331.92 85,332.24 86,332.56 87,332.87 88,333.19 89,333.51 90,333.83 91,334.18 92,334.53 93,334.60 94,334.60 95,334.60 96,334.60 97,334.60 98,334.60 99,334.60 100,334.60 101,334.60 102,334.60 103,334.60 104,334.60 105,334.60 106,334.60 107,334.60 108,334.60 109,334.60 110,334.60 111,334.60 112,334.60 113,334.60 114,334.60 115,334.60 116,334.60 117,334.60 118,334.60 119,334.60 120,334.37 121,334.11 122,333.85 123,333.59 124,333.34 125,333.08 126,332.73 127,332.34 128,331.95 129,331.56 130,331.17 131,330.78 132,330.39 133,330.00 134,329.67 135,329.35 136,329.02 137,328.70 138,328.37 139,328.04 140,327.72 141,327.39 142,327.07 143,326.79 144,326.54 145,326.28 146,326.02 147,325.76 148,325.50 149,325.25 150,324.99 151,324.73 152,324.13 153,323.20 154,322.27 155,321.47 156,320.81 157,320.15 158,319.49 159,318.83 160,318.23 161,317.70 162,317.17 163,316.63 164,316.10 165,315.57 166,314.78 167,313.75 168,312.72 169,311.75 170,310.94 171,310.12 172,309.30 173,308.49 174,307.67 175,306.85 176,306.03 177,305.22 178,304.40 179,303.25 180,302.09 181,300.94 182,299.78 183,298.63 184,297.47 185,296.32 186,295.16 187,294.46 188,294.06 189,293.66 190,293.26 191,292.86 192,292.46 193,292.06 194,291.66 195,291.26 196,290.86 197,290.46 198,290.07 199,289.78 200,289.48 201,289.19 202,288.89 203,288.60 204,288.30 205,288.01 206,287.71 207,287.42 208,287.12 209,286.83 210,286.53 211,286.24 212,285.94 213,285.63 214,285.33 215,285.03 216,284.72 217,284.42 218,284.11 219,283.81 220,283.50 221,283.20 222,282.90 223,282.59 224,282.29 225,281.98 226,281.72 227,281.53 228,281.33 229,281.14 230,280.95 231,280.75 232,280.56 233,280.36 234,280.17 235,279.97 236,279.78 237,279.59 238,279.39 239,279.20 240,279.03 241,278.90 242,278.77 243,278.64 244,278.51 245,278.38 246,278.25 247,278.12 248,277.99 249,277.85 250,277.72 251,277.59 252,277.50 253,277.50 254,277.50 255,277.50 256,277.50 257,277.50 258,277.43 259,277.27 260,277.12 261,276.98 262,276.82 263,276.68 264,276.53 265,276.38 266,276.23 267,276.10 268,275.96 269,275.82 270,275.69 271,275.55 272,275.41 273,275.28 274,275.14 275,275.00 276,274.87 277,274.75 278,274.65 279,274.55 280,274.45 281,274.35 282,274.25 283,274.15 284,274.05 285,273.95 286,273.85 287,273.75 288,273.65 289,273.55 290,273.45 291,273.35 292,273.24 293,273.12 294,273.00 295,272.89 296,272.77 297,272.65 298,272.53 299,272.41 300,272.30 301,272.18 302,272.06 303,271.89 304,271.67 305,271.45 306,271.24 307,271.02 308,270.80 309,270.58 310,270.36 311,270.15 312,269.93 313,269.71 314,269.56 315,269.48 316,269.40 317,269.32 318,269.24 319,269.15 320,269.07 321,268.99 322,268.91 323,268.83 324,268.75 325,268.67 326,268.59 327,268.51 328,268.42 329,268.30 330,268.15 331,268.00 332,267.86 333,267.71 334,267.56 335,267.41 336,267.27 337,267.12 338,266.97 339,266.82 340,266.68 341,266.53 342,266.44 343,266.36 344,266.28 345,266.20 346,266.13 347,266.05 348,265.97 349,265.89 350,265.82 351,265.74 352,265.64 353,265.53 354,265.42 355,265.31 356,265.20 357,265.09 358,264.98 359,264.87 360,264.76 361,264.67 362,264.62 363,264.57 364,264.51 365,264.46 366,264.40 367,264.35 368,264.30 369,264.24 370,264.19 371,264.13 372,264.08 373,264.03 374,263.96 375,263.89 376,263.81 377,263.74 378,263.66 379,263.59 380,263.51 381,263.44 382,263.36 383,263.29 384,263.21 385,263.14 386,263.06 387,262.99 388,262.91 389,262.81 390,262.69 391,262.57 392,262.45 393,262.34 394,262.22 395,262.10 396,261.98 397,261.86 398,261.75 399,261.63 400,261.51 401,261.40 402,261.29 403,261.19 404,261.08 405,260.97 406,260.86 407,260.75 408,260.65 409,260.54 410,260.43 411,260.32 412,259.97 413,259.56 414,259.15 415,258.74 416,258.33 417,257.92 418,257.31 419,256.62 420,255.93 421,255.23 422,254.54 423,253.85 424,253.21 425,252.63 426,252.05 427,251.47 428,250.89 429,250.30 430,249.72 431,249.15 432,248.66 433,248.17 434,247.69 435,247.20 436,246.71 437,246.22 438,245.73 439,245.24 440,244.78 441,244.34 442,243.90 443,243.45 444,243.01 445,242.57 446,242.13 447,241.69 448,241.24 449,240.98 450,240.74 451,240.50 452,240.25 453,240.01 454,239.77 455,239.53 456,239.28 457,239.04 458,238.80 459,238.60 460,238.39 461,238.19 462,237.99 463,237.78 464,237.58 465,237.38 466,237.17 467,236.97 468,236.77 469,236.56 470,236.36 471,236.25 472,236.19 473,236.12 474,236.06 475,235.99 476,235.93 477,235.86 478,235.80 479,235.73 480,235.70 481,235.71 482,235.72 483,235.73 484,235.75 485,235.75 486,235.76 487,235.77 488,235.78 489,235.79 490,235.81 491,235.81 492,235.82 493,235.83 494,235.84 495,235.85 496,235.87 497,235.88 498,235.88 499,235.89 500,235.91 501,235.91 502,235.93 503,235.94 504,235.94 505,235.95 506,235.97 507,235.97 508,235.99 509,236.00 510,235.83 511,235.50 512,235.17 513,234.83 514,234.50 515,234.17 516,233.67 517,233.00 518,232.33 519,231.67 520,231.00 521,230.33 522,229.76 523,229.27 524,228.79 525,228.30 526,227.81 527,227.33 528,226.84 529,226.38 530,225.92 531,225.47 532,225.03 533,224.57 534,224.12 535,223.68 536,223.22 537,222.50 538,221.50 539,220.50 540,219.80 541,219.40 542,219.00 543,218.60 544,218.20 545,217.76 546,217.28 547,216.80 548,216.32 549,215.84 550,215.17 551,214.31 552,213.45 553,212.59 554,211.73 555,210.87 556,210.01 557,209.15 558,208.29 559,207.43 560,206.50 561,205.50 562,204.50 563,203.50 564,202.50 565,201.50 566,200.50 567,199.50 568,198.91 569,198.74 570,198.56 571,198.39 572,198.21 573,198.04 574,197.86 575,197.69 576,197.28 577,196.62 578,195.97 579,195.32 580,194.68 581,194.03 582,193.38 583,192.72 584,191.88 585,190.83 586,189.78 587,188.72 588,187.68 589,186.62 590,185.57 591,184.53 592,183.62 593,182.88 594,182.12 595,181.38 596,180.62 597,179.88 598,179.12 599,178.38 600,177.19 601,175.56 602,173.94 603,172.31 604,170.69 605,169.06 606,167.44 607,165.81 608,164.44 609,163.31 610,162.19 611,161.06 612,159.94 613,158.81 614,157.69 615,156.56 616,155.18 617,153.53 618,151.88 619,150.22 620,148.97 621,148.12 622,147.28 623,146.43 624,145.46 625,144.38 626,143.29 627,142.21 628,141.12 629,140.04 630,139.20 631,138.60 632,138.00 633,137.40 634,136.80 635,136.20 636,135.60 637,135.00 638,134.40 639,133.80 640,133.18 641,132.54 642,131.89 643,131.25 644,130.61 645,129.96 646,129.32 647,128.62 648,127.88 649,127.12 650,126.38 651,125.62 652,124.88 653,124.12 654,123.38 655,122.62 656,121.88 657,121.12 658,120.38 659,119.65 660,118.95 661,118.25 662,117.55 663,116.85 664,116.15 665,115.45 666,114.75 667,114.05 668,113.35 669,112.67 670,112.00 671,111.33 672,110.67 673,110.00 674,109.33 675,108.67 676,108.00 677,107.33 678,106.67 679,106.00 680,105.33 681,105.08 682,105.25 683,105.42 684,105.58 685,105.75 686,105.92 687,106.19 688,106.56 689,106.94 690,107.31 691,107.69 692,108.06 693,108.44 694,108.81 695,109.06 696,109.19 697,109.31 698,109.44 699,109.56 700,109.69 701,109.81 702,109.94 703,110.07 704,110.21 705,110.35 706,110.49 707,110.63 708,110.77 709,110.91 710,111.05 711,111.19 712,111.33 713,111.70 714,112.30 715,112.90 716,113.50 717,114.10 718,114.70 719,115.40 720,116.20 721,117.00 722,117.80 723,118.60 724,119.40 725,120.20 726,121.00 727,121.78 728,122.53 729,123.28 730,124.03 731,124.78 732,125.53 733,126.28 734,127.03 735,127.46 736,127.58 737,127.70 738,127.82 739,127.94 740,128.22 741,128.66 742,129.10 743,129.54 744,129.98 745,130.42 746,130.86 747,131.30 748,131.74 749,132.18 750,132.63 751,133.09 752,133.55 753,134.01 754,134.47 755,134.93 756,135.39 757,135.85 758,136.31 759,136.77 760,137.33 761,137.99 762,138.65 763,139.31 764,139.97 765,140.63 766,141.29 767,141.95 768,142.61 769,143.27 770,143.82 771,144.26 772,144.70 773,145.14 774,145.58 775,146.02 776,146.46 777,146.90 778,147.34 779,147.78 780,148.18 781,148.54 782,148.90 783,149.26 784,149.62 785,149.98 786,150.34 787,150.70 788,151.06 789,151.42 790,151.92 791,152.56 792,153.20 793,153.84 794,154.48 795,155.12 796,155.76 797,156.40 798,157.04 799,157.68 800,158.20 801,158.60 802,159.00 803,159.40 804,159.80 805,160.20 806,160.60 807,161.00 808,161.40 809,161.80 810,162.38 811,163.12 812,163.88 813,164.62 814,165.38 815,166.12 816,166.88 817,167.62 818,168.20 819,168.60 820,169.00 821,169.40 822,169.80 823,170.20 824,170.45 825,170.55 826,170.65 827,170.75 828,170.85 829,170.95 830,171.10 831,171.30 832,171.50 833,171.70 834,171.90 835,172.15 836,172.45 837,172.75 838,173.05 839,173.35 840,173.65 841,173.95 842,174.25 843,174.55 844,174.85 845,175.10 846,175.30 847,175.50 848,175.70 849,175.90 850,176.10 851,176.30 852,176.50 853,176.70 854,176.90 855,177.05 856,177.15 857,177.25 858,177.35 859,177.45 860,177.55 861,177.65 862,177.75 863,177.85 864,177.95 865,178.08 866,178.24 867,178.40 868,178.56 869,178.72 870,178.88 871,179.04 872,179.20 873,179.36 874,179.52 875,179.74 876,180.02 877,180.30 878,180.58 879,180.86 880,181.14 881,181.42 882,181.70 883,181.98 884,182.26 885,182.50 886,182.70 887,182.90 888,183.10 889,183.30 890,183.50 891,183.70 892,183.90 893,184.10 894,184.30 895,184.48 896,184.64 897,184.80 898,184.96 899,185.12 900,185.28 901,185.44 902,185.60 903,185.76 904,185.92 905,186.05 906,186.15 907,186.25 908,186.35 909,186.45 910,186.55 911,186.65 912,186.75 913,186.85 914,186.95 915,187.01 916,187.05 917,187.07 918,187.11 919,187.13 920,187.17 921,187.19 922,187.23 923,187.25 924,187.29 925,187.38 926,187.53 927,187.69 928,187.84 929,188.00 930,188.15 931,188.30 932,188.46 933,188.61 934,188.77 935,188.92 936,188.97 937,188.91 938,188.85 939,188.79 940,188.73 941,188.67 942,188.61 943,188.55 944,188.49 945,188.43 946,188.31 947,188.14 948,187.96 949,187.79 950,187.61 951,187.44 952,187.26 953,187.09 954,186.72 955,186.15 956,185.58 957,185.02 958,184.45 959,183.88 960,183.25 961,182.55 962,181.85 963,181.15 964,180.45 965,179.75 966,179.05 967,178.35 968,177.78 969,177.32 970,176.88 971,176.43 972,175.97 973,175.53 974,175.08 975,174.62 976,174.22 977,173.88 978,173.53 979,173.18 980,172.82 981,172.47 982,172.12 983,171.78 984,171.47 985,171.22 986,170.97 987,170.72 988,170.47 989,170.22 990,169.97 991,169.72 992,169.40 993,169.00 994,168.60 995,168.20 996,167.80 997,167.40 998,167.00 999,166.60 1000,166.16 1001,165.67 1002,165.18 1003,164.69 1004,164.21 1005,163.72 1006,163.23 1007,162.74 1008,162.18 1009,161.55 1010,160.92 1011,160.28 1012,159.65 1013,159.02 1014,158.53 1015,158.19 1016,157.86 1017,157.52 1018,157.18 1019,156.84 1020,156.51 1021,156.17 1022,155.76 1023,155.29 1024,154.81 1025,154.34 1026,153.86 1027,153.39 1028,152.91 1029,152.44 1030,152.33 1031,152.59 1032,152.85 1033,153.11 1034,153.37 1035,153.65 1036,153.95 1037,154.25 1038,154.55 1039,154.85 1040,155.12 1041,155.38 1042,155.62 1043,155.88 1044,156.12 1045,156.38 1046,156.62 1047,156.88 1048,157.00 1049,157.00 1050,157.00 1051,157.00 1052,157.00 1053,157.00" fill="none" stroke="#ffffff" stroke-width="2" stroke-linejoin="round"/>
<polyline points="2,595.64 3,595.63 4,595.61 5,595.60 6,595.59 7,595.57 8,595.56 9,595.54 10,595.53 11,595.51 12,594.95 13,594.92 14,594.89 15,594.86 16,594.83 17,593.87 18,593.86 19,593.84 20,593.83 21,593.81 22,593.26 23,593.25 24,593.24 25,593.23 26,593.22 27,593.21 28,593.20 29,593.19 30,593.18 31,593.17 32,593.16 33,593.15 34,593.14 35,593.13 36,592.65 37,592.66 38,592.66 39,592.66 40,592.67 41,592.67 42,592.67 43,592.68 44,592.68 45,592.68 46,592.69 47,592.69 48,592.69 49,592.70 50,592.70 51,592.70 52,592.71 53,592.71 54,592.71 55,592.72 56,592.72 57,592.72 58,592.73 59,592.73 60,592.73 61,592.74 62,592.74 63,592.74 64,592.75 65,592.75 66,592.75 67,592.75 68,592.76 69,592.76 70,592.76 71,592.77 72,592.77 73,592.77 74,592.78 75,592.78 76,592.78 77,592.79 78,592.99 79,593.40 80,593.81 81,594.12 82,594.34 83,594.56 84,594.78 85,594.99 86,595.21 87,595.43 88,595.65 89,595.86 90,596.08 91,596.32 92,596.56 93,596.60 94,596.60 95,596.60 96,596.60 97,596.60 98,596.60 99,596.60 100,596.60 101,596.60 102,596.60 103,596.60 104,596.60 105,596.60 106,596.60 107,596.60 108,596.60 109,596.60 110,596.60 111,596.60 112,596.60 113,596.60 114,596.60 115,596.60 116,596.60 117,596.60 118,596.60 119,596.60 120,596.45 121,596.27 122,596.09 123,595.92 124,595.74 125,595.57 126,595.33 127,595.06 128,594.80 129,594.53 130,594.27 131,594.00 132,593.74 133,593.47 134,593.25 135,593.03 136,592.80 137,592.58 138,592.36 139,592.14 140,591.92 141,591.69 142,591.47 143,591.29 144,591.11 145,590.93 146,590.76 147,590.58 148,590.41 149,590.23 150,590.06 151,589.88 152,589.47 153,588.84 154,588.20 155,587.66 156,587.21 157,586.76 158,586.31 159,585.86 160,585.45 161,585.09 162,584.73 163,584.36 164,584.00 165,583.64 166,583.11 167,582.40 168,581.70 169,581.04 170,580.48 171,579.93 172,579.37 173,578.81 174,578.26 175,577.70 176,577.14 177,576.59 178,576.03 179,575.24 180,574.46 181,573.67 182,572.88 183,572.10 184,571.31 185,570.53 186,569.74 187,569.26 188,568.99 189,568.72 190,568.44 191,568.17 192,567.90 193,567.63 194,567.35 195,567.08 196,566.81 197,566.54 198,566.27 199,566.07 200,565.87 201,565.67 202,565.47 203,565.27 204,565.06 205,564.86 206,564.66 207,564.46 208,564.26 209,564.06 210,563.86 211,563.66 212,563.46 213,563.25 214,563.04 215,562.83 216,562.63 217,562.42 218,562.21 219,562.00 220,561.80 221,561.59 222,561.38 223,561.18 224,560.97 225,560.76 226,560.58 227,560.45 228,560.32 229,560.19 230,560.05 231,559.92 232,559.79 233,559.66 234,559.52 235,559.39 236,559.26 237,559.13 238,559.00 239,558.86 240,558.75 241,558.66 242,558.57 243,558.48 244,558.40 245,558.31 246,558.22 247,558.13 248,558.04 249,557.95 250,557.86 251,557.77 252,557.71 253,557.71 254,557.71 255,557.71 256,557.71 257,557.71 258,557.66 259,557.55 260,557.45 261,557.35 262,557.25 263,557.15 264,557.04 265,556.94 266,556.84 267,556.75 268,556.66 269,556.56 270,556.47 271,556.38 272,556.29 273,556.19 274,556.10 275,556.01 276,555.91 277,555.83 278,555.77 279,555.70 280,555.63 281,555.56 282,555.49 283,555.43 284,555.36 285,555.29 286,555.22 287,555.15 288,555.08 289,555.02 290,554.95 291,554.88 292,554.81 293,554.73 294,554.64 295,554.56 296,554.48 297,554.40 298,554.32 299,554.24 300,554.16 301,554.08 302,554.00 303,553.89 304,553.74 305,553.59 306,553.44 307,553.29 308,553.14 309,552.99 310,552.85 311,552.70 312,552.55 313,552.40 314,552.30 315,552.24 316,552.19 317,552.13 318,552.08 319,552.02 320,551.97 321,551.91 322,551.86 323,551.80 324,551.75 325,551.69 326,551.64 327,551.58 328,551.52 329,551.44 330,551.34 331,551.24 332,551.14 333,551.04 334,550.94 335,550.84 336,550.74 337,550.64 338,550.54 339,550.43 340,550.33 341,550.23 342,550.17 343,550.12 344,550.07 345,550.01 346,549.96 347,549.91 348,549.85 349,549.80 350,549.75 351,549.70 352,549.63 353,549.56 354,549.48 355,549.40 356,549.33 357,549.25 358,549.18 359,549.10 360,549.03 361,548.97 362,548.93 363,548.90 364,548.86 365,548.82 366,548.79 367,548.75 368,548.71 369,548.68 370,548.64 371,548.60 372,548.57 373,548.53 374,548.49 375,548.43 376,548.38 377,548.33 378,548.28 379,548.23 380,548.18 381,548.13 382,548.08 383,548.03 384,547.98 385,547.92 386,547.87 387,547.82 388,547.77 389,547.70 390,547.62 391,547.54 392,547.46 393,547.38 394,547.30 395,547.22 396,547.14 397,547.06 398,546.98 399,546.90 400,546.82 401,546.74 402,546.67 403,546.59 404,546.52 405,546.45 406,546.37 407,546.30 408,546.23 409,546.15 410,546.08 411,546.01 412,545.77 413,545.49 414,545.21 415,544.93 416,544.65 417,544.37 418,543.96 419,543.48 420,543.01 421,542.54 422,542.07 423,541.59 424,541.16 425,540.76 426,540.37 427,539.97 428,539.58 429,539.18 430,538.79 431,538.40 432,538.06 433,537.73 434,537.40 435,537.07 436,536.73 437,536.40 438,536.07 439,535.73 440,535.42 441,535.12 442,534.82 443,534.51 444,534.21 445,533.91 446,533.61 447,533.31 448,533.01 449,532.83 450,532.67 451,532.50 452,532.34 453,532.17 454,532.01 455,531.84 456,531.68 457,531.51 458,531.34 459,531.21 460,531.07 461,530.93 462,530.79 463,530.65 464,530.51 465,530.38 466,530.24 467,530.10 468,529.96 469,529.82 470,529.68 471,529.61 472,529.57 473,529.52 474,529.48 475,529.43 476,529.39 477,529.34 478,529.30 479,529.26 480,529.24 481,529.24 482,529.25 483,529.26 484,529.26 485,529.27 486,529.28 487,529.28 488,529.29 489,529.30 490,529.30 491,529.31 492,529.32 493,529.33 494,529.33 495,529.34 496,529.35 497,529.35 498,529.36 499,529.37 500,529.37 501,529.38 502,529.39 503,529.39 504,529.40 505,529.41 506,529.41 507,529.42 508,529.43 509,529.43 510,529.32 511,529.10 512,528.87 513,528.64 514,528.42 515,528.19 516,527.85 517,527.39 518,526.94 519,526.49 520,526.03 521,525.58 522,525.18 523,524.85 524,524.52 525,524.19 526,523.86 527,523.53 528,523.20 529,522.88 530,522.57 531,522.27 532,521.96 533,521.65 534,521.35 535,521.04 536,520.74 537,520.24 538,519.56 539,518.88 540,518.40 541,518.13 542,517.86 543,517.58 544,517.31 545,517.01 546,516.69 547,516.36 548,516.03 549,515.70 550,515.25 551,514.66 552,514.08 553,513.49 554,512.90 555,512.32 556,511.73 557,511.15 558,510.56 559,509.98 560,509.34 561,508.66 562,507.98 563,507.30 564,506.62 565,505.94 566,505.25 567,504.57 568,504.17 569,504.05 570,503.93 571,503.82 572,503.70 573,503.58 574,503.46 575,503.34 576,503.06 577,502.62 578,502.17 579,501.73 580,501.29 581,500.84 582,500.40 583,499.96 584,499.38 585,498.66 586,497.95 587,497.23 588,496.52 589,495.80 590,495.09 591,494.37 592,493.76 593,493.25 594,492.74 595,492.23 596,491.72 597,491.21 598,490.69 599,490.18 600,489.37 601,488.27 602,487.16 603,486.05 604,484.95 605,483.84 606,482.73 607,481.63 608,480.69 609,479.92 610,479.16 611,478.39 612,477.62 613,476.86 614,476.09 615,475.32 616,474.38 617,473.26 618,472.13 619,471.01 620,470.16 621,469.58 622,469.00 623,468.42 624,467.76 625,467.02 626,466.28 627,465.55 628,464.81 629,464.07 630,463.50 631,463.09 632,462.68 633,462.27 634,461.86 635,461.45 636,461.04 637,460.64 638,460.23 639,459.82 640,459.40 641,458.96 642,458.52 643,458.08 644,457.64 645,457.21 646,456.77 647,456.29 648,455.78 649,455.27 650,454.76 651,454.25 652,453.74 653,453.23 654,452.72 655,452.21 656,451.70 657,451.18 658,450.67 659,450.18 660,449.70 661,449.23 662,448.75 663,448.27 664,447.80 665,447.32 666,446.84 667,446.37 668,445.89 669,445.42 670,444.97 671,444.51 672,444.06 673,443.61 674,443.15 675,442.70 676,442.24 677,441.79 678,441.34 679,440.88 680,440.43 681,440.26 682,440.37 683,440.48 684,440.60 685,440.71 686,440.82 687,441.01 688,441.26 689,441.52 690,441.78 691,442.03 692,442.29 693,442.54 694,442.80 695,442.97 696,443.05 697,443.14 698,443.22 699,443.31 700,443.39 701,443.48 702,443.56 703,443.65 704,443.75 705,443.84 706,443.94 707,444.04 708,444.13 709,444.23 710,444.32 711,444.42 712,444.51 713,444.76 714,445.17 715,445.58 716,445.99 717,446.40 718,446.81 719,447.28 720,447.83 721,448.37 722,448.92 723,449.46 724,450.01 725,450.55 726,451.10 727,451.63 728,452.14 729,452.65 730,453.16 731,453.67 732,454.18 733,454.69 734,455.20 735,455.50 736,455.58 737,455.66 738,455.75 739,455.83 740,456.02 741,456.32 742,456.62 743,456.92 744,457.22 745,457.52 746,457.82 747,458.12 748,458.42 749,458.72 750,459.02 751,459.34 752,459.65 753,459.96 754,460.28 755,460.59 756,460.90 757,461.22 758,461.53 759,461.84 760,462.22 761,462.67 762,463.12 763,463.57 764,464.02 765,464.47 766,464.92 767,465.37 768,465.82 769,466.27 770,466.64 771,466.94 772,467.24 773,467.54 774,467.84 775,468.14 776,468.44 777,468.74 778,469.04 779,469.34 780,469.61 781,469.86 782,470.10 783,470.35 784,470.60 785,470.84 786,471.09 787,471.33 788,471.58 789,471.82 790,472.16 791,472.60 792,473.03 793,473.47 794,473.91 795,474.34 796,474.78 797,475.21 798,475.65 799,476.09 800,476.44 801,476.71 802,476.99 803,477.26 804,477.53 805,477.80 806,478.07 807,478.35 808,478.62 809,478.89 810,479.28 811,479.79 812,480.31 813,480.82 814,481.33 815,481.84 816,482.35 817,482.86 818,483.25 819,483.52 820,483.80 821,484.07 822,484.34 823,484.61 824,484.78 825,484.85 826,484.92 827,484.99 828,485.06 829,485.13 830,485.23 831,485.36 832,485.50 833,485.64 834,485.77 835,485.94 836,486.15 837,486.35 838,486.56 839,486.76 840,486.96 841,487.17 842,487.37 843,487.58 844,487.78 845,487.95 846,488.09 847,488.22 848,488.36 849,488.50 850,488.63 851,488.77 852,488.91 853,489.04 854,489.18 855,489.28 856,489.35 857,489.42 858,489.49 859,489.55 860,489.62 861,489.69 862,489.76 863,489.83 864,489.89 865,489.98 866,490.09 867,490.20 868,490.31 869,490.42 870,490.53 871,490.64 872,490.75 873,490.85 874,490.96 875,491.11 876,491.30 877,491.49 878,491.69 879,491.88 880,492.07 881,492.26 882,492.45 883,492.64 884,492.83 885,492.99 886,493.13 887,493.27 888,493.40 889,493.54 890,493.67 891,493.81 892,493.95 893,494.08 894,494.22 895,494.34 896,494.45 897,494.56 898,494.67 899,494.78 900,494.89 901,495.00 902,495.10 903,495.21 904,495.32 905,495.41 906,495.48 907,495.55 908,495.62 909,495.68 910,495.75 911,495.82 912,495.89 913,495.96 914,496.02 915,496.07 916,496.09 917,496.11 918,496.13 919,496.15 920,496.17 921,496.19 922,496.21 923,496.23 924,496.25 925,496.32 926,496.42 927,496.53 928,496.63 929,496.74 930,496.84 931,496.95 932,497.05 933,497.16 934,497.26 935,497.37 936,497.40 937,497.36 938,497.32 939,497.28 940,497.24 941,497.20 942,497.16 943,497.11 944,497.07 945,497.03 946,496.95 947,496.83 948,496.71 949,496.60 950,496.48 951,496.36 952,496.24 953,496.12 954,495.87 955,495.48 956,495.09 957,494.71 958,494.32 959,493.94 960,493.50 961,493.03 962,492.55 963,492.07 964,491.60 965,491.12 966,490.64 967,490.17 968,489.77 969,489.47 970,489.16 971,488.85 972,488.55 973,488.24 974,487.94 975,487.63 976,487.36 977,487.12 978,486.88 979,486.64 980,486.40 981,486.16 982,485.93 983,485.69 984,485.48 985,485.31 986,485.14 987,484.97 988,484.80 989,484.63 990,484.46 991,484.29 992,484.07 993,483.80 994,483.52 995,483.25 996,482.98 997,482.71 998,482.43 999,482.16 1000,481.86 1001,481.53 1002,481.20 1003,480.86 1004,480.53 1005,480.20 1006,479.87 1007,479.54 1008,479.15 1009,478.72 1010,478.29 1011,477.86 1012,477.43 1013,477.00 1014,476.67 1015,476.44 1016,476.21 1017,475.98 1018,475.75 1019,475.52 1020,475.29 1021,475.06 1022,474.78 1023,474.46 1024,474.13 1025,473.81 1026,473.49 1027,473.16 1028,472.84 1029,472.51 1030,472.44 1031,472.62 1032,472.80 1033,472.97 1034,473.15 1035,473.34 1036,473.54 1037,473.75 1038,473.95 1039,474.16 1040,474.35 1041,474.52 1042,474.69 1043,474.86 1044,475.03 1045,475.20 1046,475.37 1047,475.54 1048,475.62 1049,475.62 1050,475.62 1051,475.62 1052,475.62 1053,475.62" fill="none" stroke="#ffffff" stroke-width="2" stroke-linejoin="round"/>
<polyline points="2,601.91 3,601.76 4,601.60 5,601.45 6,601.32 7,601.22 8,601.12 9,601.01 10,600.91 11,600.81 12,600.71 13,600.61 14,600.52 15,600.45 16,600.38 17,600.32 18,600.25 19,600.18 20,600.11 21,600.04 22,599.98 23,599.91 24,599.84 25,599.78 26,599.72 27,599.66 28,599.59 29,599.53 30,599.47 31,599.41 32,599.35 33,599.29 34,599.22 35,599.17 36,599.11 37,599.06 38,599.00 39,598.95 40,598.90 41,598.84 42,598.79 43,598.74 44,598.68 45,598.63 46,598.58 47,598.52 48,598.47 49,598.42 50,598.38 51,598.34 52,598.29 53,598.25 54,598.21 55,598.17 56,598.12 57,598.08 58,598.04 59,598.00 60,597.95 61,597.91 62,597.87 63,597.83 64,597.78 65,597.74 66,597.68 67,597.63 68,597.58 69,597.53 70,597.47 71,597.42 72,597.37 73,597.32 74,597.26 75,597.21 76,597.16 77,597.11 78,597.27 79,597.64 80,597.89 81,598.00 82,598.11 83,598.23 84,598.34 85,598.45 86,598.56 87,598.65 88,598.75 89,598.84 90,598.93 91,599.03 92,599.12 93,599.21 94,599.25 95,599.23 96,599.22 97,599.20 98,599.18 99,599.17 100,599.15 101,599.13 102,599.12 103,599.10 104,599.08 105,599.06 106,599.02 107,598.96 108,598.90 109,598.83 110,598.77 111,598.70 112,598.64 113,598.58 114,598.51 115,598.45 116,598.38 117,598.32 118,598.26 119,598.19 120,598.13 121,598.06 122,598.00 123,597.94 124,597.87 125,597.81 126,597.74 127,597.66 128,597.50 129,597.34 130,597.18 131,597.03 132,596.87 133,596.71 134,596.55 135,596.39 136,596.23 137,596.07 138,595.91 139,595.75 140,595.59 141,595.42 142,595.24 143,595.06 144,594.88 145,594.70 146,594.52 147,594.34 148,594.16 149,593.98 150,593.80 151,593.62 152,593.44 153,593.26 154,593.08 155,592.87 156,592.63 157,592.39 158,592.15 159,591.91 160,591.67 161,591.43 162,591.19 163,590.95 164,590.71 165,590.47 166,590.23 167,589.99 168,589.75 169,589.37 170,588.97 171,588.57 172,588.18 173,587.78 174,587.38 175,586.99 176,586.59 177,586.19 178,585.84 179,585.50 180,585.16 181,584.82 182,584.48 183,584.03 184,583.55 185,583.08 186,582.60 187,582.13 188,581.78 189,581.56 190,581.34 191,581.12 192,580.90 193,580.68 194,580.46 195,580.25 196,580.03 197,579.81 198,579.59 199,579.37 200,579.15 201,578.93 202,578.71 203,578.49 204,578.27 205,578.05 206,577.83 207,577.61 208,577.38 209,577.16 210,576.94 211,576.71 212,576.49 213,576.27 214,576.04 215,575.82 216,575.60 217,575.38 218,575.20 219,575.02 220,574.84 221,574.66 222,574.48 223,574.30 224,574.12 225,573.94 226,573.76 227,573.58 228,573.40 229,573.22 230,573.04 231,572.86 232,572.68 233,572.50 234,572.32 235,572.14 236,571.96 237,571.78 238,571.63 239,571.51 240,571.39 241,571.27 242,571.16 243,571.04 244,570.92 245,570.81 246,570.69 247,570.57 248,570.46 249,570.34 250,570.22 251,570.11 252,569.99 253,569.87 254,569.75 255,569.64 256,569.52 257,569.40 258,569.28 259,569.16 260,569.04 261,568.92 262,568.80 263,568.68 264,568.56 265,568.44 266,568.34 267,568.25 268,568.16 269,568.07 270,567.98 271,567.88 272,567.79 273,567.70 274,567.61 275,567.52 276,567.43 277,567.34 278,567.25 279,567.16 280,567.07 281,566.96 282,566.85 283,566.74 284,566.63 285,566.51 286,566.40 287,566.29 288,566.18 289,566.07 290,565.95 291,565.84 292,565.73 293,565.62 294,565.51 295,565.39 296,565.28 297,565.17 298,565.06 299,564.95 300,564.84 301,564.72 302,564.49 303,564.25 304,564.01 305,563.78 306,563.54 307,563.30 308,563.08 309,562.99 310,562.90 311,562.82 312,562.73 313,562.64 314,562.55 315,562.46 316,562.37 317,562.29 318,562.20 319,562.11 320,562.02 321,561.93 322,561.84 323,561.72 324,561.60 325,561.48 326,561.36 327,561.25 328,561.13 329,561.01 330,560.89 331,560.77 332,560.65 333,560.54 334,560.42 335,560.30 336,560.20 337,560.12 338,560.04 339,559.96 340,559.88 341,559.80 342,559.72 343,559.65 344,559.57 345,559.49 346,559.41 347,559.33 348,559.25 349,559.17 350,559.10 351,559.02 352,558.94 353,558.86 354,558.78 355,558.70 356,558.62 357,558.55 358,558.48 359,558.40 360,558.33 361,558.26 362,558.19 363,558.11 364,558.04 365,557.97 366,557.89 367,557.82 368,557.75 369,557.68 370,557.58 371,557.47 372,557.35 373,557.24 374,557.12 375,557.01 376,556.89 377,556.78 378,556.66 379,556.55 380,556.43 381,556.32 382,556.20 383,556.09 384,555.97 385,555.86 386,555.74 387,555.67 388,555.59 389,555.52 390,555.44 391,555.37 392,555.30 393,555.22 394,555.15 395,555.07 396,555.00 397,554.93 398,554.85 399,554.78 400,554.70 401,554.63 402,554.56 403,554.48 404,554.41 405,554.34 406,554.26 407,554.19 408,554.11 409,554.04 410,553.97 411,553.89 412,553.67 413,553.44 414,553.22 415,552.99 416,552.77 417,552.54 418,552.31 419,552.09 420,551.86 421,551.64 422,551.41 423,551.19 424,550.96 425,550.74 426,550.50 427,550.26 428,550.02 429,549.79 430,549.55 431,549.31 432,549.08 433,548.84 434,548.60 435,548.37 436,548.13 437,547.89 438,547.66 439,547.43 440,547.22 441,547.01 442,546.81 443,546.60 444,546.40 445,546.19 446,545.98 447,545.78 448,545.57 449,545.36 450,545.16 451,544.95 452,544.75 453,544.54 454,544.33 455,544.13 456,543.92 457,543.71 458,543.51 459,543.30 460,543.12 461,542.96 462,542.81 463,542.65 464,542.50 465,542.34 466,542.19 467,542.03 468,541.88 469,541.72 470,541.57 471,541.41 472,541.26 473,541.10 474,540.95 475,540.79 476,540.64 477,540.48 478,540.38 479,540.32 480,540.26 481,540.21 482,540.15 483,540.09 484,540.04 485,539.98 486,539.92 487,539.87 488,539.81 489,539.75 490,539.69 491,539.61 492,539.54 493,539.46 494,539.39 495,539.31 496,539.24 497,539.16 498,539.09 499,539.01 500,538.93 501,538.83 502,538.74 503,538.64 504,538.55 505,538.45 506,538.36 507,538.26 508,538.17 509,537.96 510,537.74 511,537.53 512,537.31 513,537.10 514,536.89 515,536.68 516,536.47 517,536.27 518,536.06 519,535.85 520,535.64 521,535.43 522,535.15 523,534.87 524,534.60 525,534.32 526,534.04 527,533.76 528,533.48 529,533.20 530,532.92 531,532.64 532,532.39 533,532.15 534,531.91 535,531.68 536,531.44 537,531.21 538,530.97 539,530.74 540,530.50 541,530.27 542,530.03 543,529.76 544,529.46 545,529.16 546,528.85 547,528.55 548,528.25 549,527.94 550,527.64 551,527.33 552,527.03 553,526.73 554,526.34 555,525.85 556,525.37 557,524.89 558,524.41 559,523.93 560,523.44 561,522.96 562,522.48 563,522.00 564,521.52 565,521.24 566,520.99 567,520.75 568,520.50 569,520.25 570,520.00 571,519.75 572,519.50 573,519.25 574,519.00 575,518.69 576,518.31 577,517.94 578,517.56 579,517.18 580,516.81 581,516.43 582,516.05 583,515.67 584,515.30 585,514.92 586,514.54 587,514.17 588,513.79 589,513.41 590,512.97 591,512.47 592,511.97 593,511.47 594,510.97 595,510.47 596,509.96 597,509.46 598,508.96 599,508.46 600,507.96 601,507.41 602,506.82 603,506.23 604,505.64 605,505.05 606,504.46 607,503.87 608,503.28 609,502.69 610,502.10 611,501.51 612,500.91 613,500.31 614,499.72 615,499.12 616,498.52 617,497.93 618,497.33 619,496.73 620,496.14 621,495.54 622,494.99 623,494.50 624,494.00 625,493.51 626,493.01 627,492.52 628,492.02 629,491.53 630,491.03 631,490.53 632,490.04 633,489.61 634,489.23 635,488.86 636,488.49 637,488.12 638,487.75 639,487.38 640,487.00 641,486.63 642,486.26 643,485.89 644,485.46 645,484.98 646,484.51 647,484.03 648,483.55 649,483.07 650,482.59 651,482.11 652,481.63 653,481.15 654,480.72 655,480.31 656,479.91 657,479.50 658,479.09 659,478.69 660,478.28 661,477.87 662,477.47 663,477.06 664,476.65 665,476.24 666,475.84 667,475.43 668,475.02 669,474.61 670,474.20 671,473.79 672,473.38 673,472.97 674,472.56 675,472.15 676,471.74 677,471.33 678,470.93 679,470.52 680,470.11 681,469.70 682,469.55 683,469.40 684,469.26 685,469.11 686,468.96 687,468.81 688,468.67 689,468.52 690,468.37 691,468.23 692,468.08 693,467.93 694,467.78 695,467.64 696,467.54 697,467.44 698,467.34 699,467.24 700,467.14 701,467.04 702,466.94 703,466.84 704,466.74 705,466.64 706,466.54 707,466.49 708,466.49 709,466.49 710,466.49 711,466.49 712,466.49 713,466.49 714,466.49 715,466.49 716,466.49 717,466.49 718,466.49 719,466.55 720,466.67 721,466.79 722,466.91 723,467.03 724,467.15 725,467.27 726,467.39 727,467.50 728,467.62 729,467.73 730,467.85 731,467.96 732,468.07 733,468.17 734,468.25 735,468.33 736,468.41 737,468.49 738,468.57 739,468.65 740,468.73 741,468.81 742,468.89 743,468.97 744,469.05 745,469.13 746,469.21 747,469.29 748,469.37 749,469.45 750,469.55 751,469.68 752,469.80 753,469.92 754,470.04 755,470.17 756,470.29 757,470.41 758,470.53 759,470.66 760,470.78 761,470.90 762,471.02 763,471.15 764,471.27 765,471.39 766,471.51 767,471.64 768,471.76 769,471.88 770,471.99 771,472.09 772,472.18 773,472.28 774,472.37 775,472.47 776,472.56 777,472.66 778,472.75 779,472.85 780,472.95 781,473.04 782,473.14 783,473.23 784,473.33 785,473.42 786,473.52 787,473.61 788,473.71 789,473.80 790,473.94 791,474.12 792,474.29 793,474.47 794,474.65 795,474.83 796,475.00 797,475.18 798,475.36 799,475.53 800,475.72 801,475.93 802,476.13 803,476.34 804,476.54 805,476.75 806,476.95 807,477.16 808,477.36 809,477.56 810,477.79 811,478.03 812,478.28 813,478.52 814,478.77 815,479.01 816,479.26 817,479.51 818,479.75 819,480.00 820,480.20 821,480.37 822,480.54 823,480.71 824,480.88 825,481.06 826,481.23 827,481.40 828,481.52 829,481.60 830,481.68 831,481.75 832,481.83 833,481.91 834,481.99 835,482.07 836,482.15 837,482.23 838,482.31 839,482.39 840,482.48 841,482.56 842,482.64 843,482.72 844,482.80 845,482.89 846,482.99 847,483.08 848,483.18 849,483.27 850,483.37 851,483.46 852,483.56 853,483.65 854,483.75 855,483.87 856,484.00 857,484.14 858,484.27 859,484.41 860,484.55 861,484.68 862,484.82 863,484.96 864,485.09 865,485.19 866,485.26 867,485.33 868,485.40 869,485.47 870,485.53 871,485.60 872,485.67 873,485.74 874,485.81 875,485.90 876,486.00 877,486.11 878,486.22 879,486.33 880,486.44 881,486.55 882,486.66 883,486.77 884,486.88 885,486.98 886,487.07 887,487.17 888,487.26 889,487.36 890,487.46 891,487.55 892,487.65 893,487.74 894,487.84 895,487.95 896,488.09 897,488.22 898,488.36 899,488.50 900,488.63 901,488.77 902,488.91 903,489.04 904,489.18 905,489.29 906,489.39 907,489.49 908,489.58 909,489.68 910,489.77 911,489.87 912,489.96 913,490.06 914,490.15 915,490.24 916,490.32 917,490.40 918,490.49 919,490.57 920,490.65 921,490.73 922,490.81 923,490.90 924,490.98 925,491.03 926,491.04 927,491.06 928,491.08 929,491.10 930,491.12 931,491.14 932,491.15 933,491.17 934,491.19 935,491.21 936,491.23 937,491.24 938,491.26 939,491.28 940,491.29 941,491.29 942,491.29 943,491.29 944,491.29 945,491.29 946,491.29 947,491.29 948,491.29 949,491.29 950,491.29 951,491.29 952,491.29 953,491.29 954,491.29 955,491.29 956,491.19 957,490.98 958,490.78 959,490.57 960,490.37 961,490.17 962,489.96 963,489.76 964,489.54 965,489.31 966,489.09 967,488.86 968,488.63 969,488.41 970,488.18 971,487.95 972,487.73 973,487.50 974,487.27 975,487.04 976,486.87 977,486.74 978,486.61 979,486.49 980,486.36 981,486.23 982,486.11 983,485.98 984,485.86 985,485.73 986,485.60 987,485.48 988,485.35 989,485.22 990,485.10 991,484.99 992,484.88 993,484.76 994,484.65 995,484.53 996,484.42 997,484.31 998,484.19 999,484.08 1000,483.97 1001,483.85 1002,483.68 1003,483.46 1004,483.23 1005,483.00 1006,482.78 1007,482.55 1008,482.32 1009,482.09 1010,481.87 1011,481.64 1012,481.41 1013,481.19 1014,480.99 1015,480.82 1016,480.65 1017,480.48 1018,480.31 1019,480.14 1020,479.97 1021,479.79 1022,479.62 1023,479.45 1024,479.28 1025,479.11 1026,479.00 1027,478.95 1028,478.90 1029,478.86 1030,478.81 1031,478.76 1032,478.71 1033,478.66 1034,478.61 1035,478.56 1036,478.51 1037,478.93 1038,479.37 1039,479.37 1040,479.37 1041,479.37 1042,479.37 1043,479.37 1044,479.37 1045,479.37 1046,479.37 1047,479.37 1048,479.37 1049,479.37 1050,479.37 1051,479.37 1052,479.37 1053,479.37" fill="none" stroke="#ff00ff" stroke-width="1" stroke-linejoin="round"/>
<polyline points="2,607.32 3,607.09 4,606.87 5,606.72 6,606.65 7,606.58 8,606.52 9,606.45 10,606.38 11,606.31 12,606.24 13,606.17 14,606.06 15,605.90 16,605.73 17,605.57 18,605.40 19,605.29 20,605.21 21,605.13 22,605.06 23,604.98 24,604.91 25,604.83 26,604.76 27,604.68 28,604.62 29,604.56 30,604.51 31,604.45 32,604.40 33,604.35 34,604.29 35,604.24 36,604.19 37,604.13 38,604.08 39,604.03 40,603.97 41,603.92 42,603.86 43,603.79 44,603.72 45,603.65 46,603.59 47,603.52 48,603.45 49,603.38 50,603.31 51,603.25 52,603.19 53,603.16 54,603.12 55,603.09 56,603.05 57,603.01 58,602.98 59,602.94 60,602.91 61,602.87 62,602.83 63,602.80 64,602.76 65,602.73 66,602.69 67,602.66 68,602.62 69,602.58 70,602.55 71,602.53 72,602.53 73,602.53 74,602.53 75,602.53 76,602.53 77,602.53 78,602.53 79,602.53 80,602.56 81,602.63 82,602.69 83,602.76 84,602.82 85,602.89 86,602.96 87,603.02 88,603.09 89,603.15 90,603.21 91,603.21 92,603.21 93,603.21 94,603.21 95,603.21 96,603.21 97,603.21 98,603.21 99,603.21 100,603.21 101,603.21 102,603.21 103,603.21 104,603.21 105,603.21 106,603.21 107,603.20 108,603.12 109,603.05 110,602.97 111,602.90 112,602.82 113,602.75 114,602.67 115,602.60 116,602.53 117,602.45 118,602.38 119,602.30 120,602.23 121,602.14 122,602.04 123,601.94 124,601.84 125,601.74 126,601.65 127,601.55 128,601.45 129,601.35 130,601.25 131,601.15 132,601.05 133,600.95 134,600.85 135,600.76 136,600.66 137,600.56 138,600.46 139,600.36 140,600.26 141,600.16 142,600.06 143,599.96 144,599.87 145,599.77 146,599.60 147,599.40 148,599.20 149,599.00 150,598.80 151,598.60 152,598.40 153,598.20 154,598.00 155,597.82 156,597.66 157,597.51 158,597.35 159,597.19 160,597.04 161,596.88 162,596.72 163,596.57 164,596.41 165,596.19 166,595.91 167,595.63 168,595.35 169,595.06 170,594.76 171,594.47 172,594.17 173,593.87 174,593.57 175,593.27 176,592.97 177,592.68 178,592.38 179,592.08 180,591.78 181,591.48 182,591.19 183,590.89 184,590.59 185,590.29 186,589.99 187,589.69 188,589.40 189,589.17 190,589.01 191,588.85 192,588.69 193,588.53 194,588.37 195,588.21 196,588.05 197,587.89 198,587.73 199,587.57 200,587.41 201,587.25 202,587.10 203,586.94 204,586.78 205,586.62 206,586.41 207,586.14 208,585.88 209,585.61 210,585.35 211,585.24 212,585.12 213,585.01 214,584.89 215,584.78 216,584.66 217,584.55 218,584.43 219,584.32 220,584.20 221,584.09 222,583.97 223,583.86 224,583.74 225,583.57 226,583.38 227,583.20 228,583.02 229,582.84 230,582.66 231,582.48 232,582.29 233,582.11 234,581.93 235,581.75 236,581.57 237,581.39 238,581.25 239,581.18 240,581.11 241,581.04 242,580.97 243,580.85 244,580.68 245,580.50 246,580.33 247,580.16 248,579.99 249,579.81 250,579.64 251,579.47 252,579.30 253,579.12 254,578.95 255,578.78 256,578.61 257,578.43 258,578.30 259,578.19 260,578.09 261,577.98 262,577.88 263,577.77 264,577.67 265,577.56 266,577.46 267,577.36 268,577.26 269,577.16 270,577.06 271,576.96 272,576.86 273,576.76 274,576.66 275,576.56 276,576.46 277,576.36 278,576.26 279,576.16 280,576.06 281,575.95 282,575.84 283,575.72 284,575.61 285,575.49 286,575.37 287,575.26 288,575.14 289,575.03 290,574.91 291,574.80 292,574.68 293,574.57 294,574.45 295,574.34 296,574.22 297,574.11 298,573.99 299,573.88 300,573.76 301,573.65 302,573.44 303,573.23 304,573.03 305,572.82 306,572.61 307,572.40 308,572.21 309,572.10 310,572.00 311,571.90 312,571.79 313,571.69 314,571.59 315,571.49 316,571.38 317,571.28 318,571.18 319,571.07 320,570.97 321,570.87 322,570.77 323,570.67 324,570.57 325,570.47 326,570.37 327,570.27 328,570.17 329,570.08 330,569.98 331,569.88 332,569.78 333,569.68 334,569.58 335,569.48 336,569.39 337,569.30 338,569.20 339,569.11 340,569.02 341,568.93 342,568.84 343,568.75 344,568.65 345,568.56 346,568.47 347,568.38 348,568.29 349,568.20 350,568.10 351,568.01 352,567.92 353,567.83 354,567.74 355,567.64 356,567.55 357,567.43 358,567.30 359,567.16 360,567.02 361,566.88 362,566.74 363,566.60 364,566.47 365,566.33 366,566.19 367,566.05 368,565.91 369,565.77 370,565.64 371,565.57 372,565.52 373,565.47 374,565.41 375,565.36 376,565.31 377,565.26 378,565.21 379,565.16 380,565.02 381,564.78 382,564.55 383,564.32 384,564.17 385,564.07 386,563.96 387,563.86 388,563.75 389,563.65 390,563.54 391,563.44 392,563.33 393,563.23 394,563.13 395,563.02 396,562.92 397,562.81 398,562.71 399,562.60 400,562.50 401,562.39 402,562.29 403,562.18 404,562.08 405,561.94 406,561.80 407,561.67 408,561.53 409,561.39 410,561.25 411,561.11 412,560.97 413,560.84 414,560.70 415,560.56 416,560.42 417,560.28 418,560.14 419,559.98 420,559.81 421,559.64 422,559.48 423,559.31 424,559.14 425,558.98 426,558.81 427,558.64 428,558.48 429,558.31 430,558.14 431,557.98 432,557.80 433,557.59 434,557.39 435,557.18 436,556.97 437,556.77 438,556.56 439,556.35 440,556.14 441,555.94 442,555.73 443,555.52 444,555.31 445,555.11 446,554.94 447,554.83 448,554.72 449,554.60 450,554.49 451,554.38 452,554.27 453,554.16 454,554.05 455,553.94 456,553.82 457,553.71 458,553.60 459,553.49 460,553.38 461,553.27 462,553.16 463,553.04 464,552.93 465,552.82 466,552.71 467,552.56 468,552.39 469,552.22 470,552.04 471,551.87 472,551.70 473,551.53 474,551.35 475,551.18 476,551.01 477,550.83 478,550.66 479,550.49 480,550.32 481,550.20 482,550.10 483,549.99 484,549.89 485,549.79 486,549.69 487,549.58 488,549.48 489,549.38 490,549.27 491,549.16 492,549.06 493,548.95 494,548.84 495,548.73 496,548.62 497,548.51 498,548.40 499,548.29 500,548.17 501,548.03 502,547.89 503,547.75 504,547.61 505,547.48 506,547.34 507,547.20 508,547.06 509,546.92 510,546.78 511,546.57 512,546.34 513,546.10 514,545.87 515,545.63 516,545.40 517,545.16 518,544.93 519,544.69 520,544.45 521,544.22 522,544.08 523,543.93 524,543.79 525,543.65 526,543.51 527,543.36 528,543.22 529,543.08 530,542.93 531,542.79 532,542.59 533,542.32 534,542.06 535,541.79 536,541.52 537,541.26 538,540.99 539,540.72 540,540.46 541,540.19 542,539.92 543,539.70 544,539.51 545,539.33 546,539.14 547,538.96 548,538.77 549,538.58 550,538.40 551,538.21 552,538.03 553,537.84 554,537.57 555,537.23 556,536.88 557,536.53 558,536.19 559,535.84 560,535.49 561,535.15 562,534.80 563,534.45 564,534.11 565,533.80 566,533.55 567,533.29 568,533.03 569,532.77 570,532.51 571,532.25 572,531.99 573,531.73 574,531.47 575,531.18 576,530.85 577,530.52 578,530.20 579,529.87 580,529.54 581,529.21 582,528.88 583,528.55 584,528.23 585,527.90 586,527.44 587,526.84 588,526.24 589,525.65 590,525.08 591,524.55 592,524.02 593,523.49 594,522.95 595,522.42 596,521.89 597,521.36 598,520.82 599,520.29 600,519.76 601,519.32 602,518.97 603,518.62 604,518.27 605,517.92 606,517.57 607,517.21 608,516.86 609,516.51 610,516.16 611,515.81 612,515.40 613,515.00 614,514.59 615,514.18 616,513.77 617,513.36 618,512.95 619,512.54 620,512.13 621,511.73 622,511.33 623,510.96 624,510.58 625,510.20 626,509.82 627,509.44 628,509.07 629,508.69 630,508.31 631,507.93 632,507.56 633,507.18 634,506.82 635,506.45 636,506.09 637,505.72 638,505.36 639,504.99 640,504.63 641,504.26 642,503.90 643,503.53 644,503.17 645,502.82 646,502.46 647,502.11 648,501.75 649,501.40 650,501.04 651,500.69 652,500.33 653,499.98 654,499.59 655,499.18 656,498.78 657,498.37 658,497.96 659,497.55 660,497.15 661,496.74 662,496.33 663,495.93 664,495.52 665,495.11 666,494.71 667,494.30 668,493.92 669,493.54 670,493.17 671,492.79 672,492.42 673,492.04 674,491.67 675,491.29 676,490.92 677,490.54 678,490.17 679,489.79 680,489.42 681,489.04 682,488.87 683,488.70 684,488.53 685,488.36 686,488.18 687,488.01 688,487.84 689,487.67 690,487.50 691,487.33 692,487.16 693,486.98 694,486.81 695,486.65 696,486.54 697,486.44 698,486.34 699,486.23 700,486.13 701,486.03 702,485.92 703,485.82 704,485.71 705,485.61 706,485.51 707,485.40 708,485.30 709,485.21 710,485.16 711,485.12 712,485.07 713,485.02 714,484.97 715,484.92 716,484.87 717,484.82 718,484.78 719,484.74 720,484.73 721,484.71 722,484.69 723,484.67 724,484.66 725,484.64 726,484.62 727,484.61 728,484.59 729,484.57 730,484.55 731,484.54 732,484.52 733,484.50 734,484.49 735,484.47 736,484.45 737,484.43 738,484.41 739,484.40 740,484.38 741,484.36 742,484.34 743,484.32 744,484.31 745,484.29 746,484.27 747,484.25 748,484.23 749,484.21 750,484.22 751,484.25 752,484.27 753,484.30 754,484.33 755,484.36 756,484.38 757,484.41 758,484.44 759,484.46 760,484.49 761,484.52 762,484.55 763,484.57 764,484.60 765,484.63 766,484.66 767,484.68 768,484.71 769,484.74 770,484.76 771,484.78 772,484.80 773,484.82 774,484.84 775,484.86 776,484.88 777,484.90 778,484.92 779,484.94 780,484.97 781,484.99 782,485.01 783,485.03 784,485.05 785,485.07 786,485.09 787,485.11 788,485.13 789,485.15 790,485.19 791,485.26 792,485.33 793,485.40 794,485.47 795,485.53 796,485.60 797,485.67 798,485.74 799,485.81 800,485.85 801,485.88 802,485.91 803,485.94 804,485.96 805,485.99 806,486.02 807,486.04 808,486.07 809,486.10 810,486.17 811,486.28 812,486.39 813,486.49 814,486.60 815,486.71 816,486.82 817,486.93 818,487.04 819,487.15 820,487.27 821,487.41 822,487.54 823,487.68 824,487.82 825,487.95 826,488.09 827,488.22 828,488.31 829,488.34 830,488.37 831,488.41 832,488.44 833,488.47 834,488.50 835,488.53 836,488.57 837,488.60 838,488.63 839,488.66 840,488.69 841,488.73 842,488.76 843,488.79 844,488.82 845,488.86 846,488.90 847,488.94 848,488.98 849,489.02 850,489.06 851,489.10 852,489.14 853,489.19 854,489.23 855,489.27 856,489.31 857,489.35 858,489.39 859,489.43 860,489.47 861,489.51 862,489.55 863,489.59 864,489.63 865,489.68 866,489.73 867,489.77 868,489.82 869,489.87 870,489.92 871,489.97 872,490.01 873,490.06 874,490.11 875,490.16 876,490.20 877,490.25 878,490.30 879,490.35 880,490.39 881,490.44 882,490.49 883,490.54 884,490.59 885,490.64 886,490.71 887,490.78 888,490.85 889,490.92 890,490.98 891,491.05 892,491.12 893,491.19 894,491.26 895,491.32 896,491.39 897,491.46 898,491.53 899,491.60 900,491.66 901,491.73 902,491.80 903,491.87 904,491.94 905,491.98 906,492.00 907,492.02 908,492.04 909,492.06 910,492.08 911,492.10 912,492.12 913,492.15 914,492.17 915,492.19 916,492.21 917,492.23 918,492.25 919,492.27 920,492.29 921,492.31 922,492.33 923,492.35 924,492.37 925,492.39 926,492.41 927,492.43 928,492.44 929,492.46 930,492.48 931,492.50 932,492.52 933,492.53 934,492.55 935,492.57 936,492.59 937,492.61 938,492.63 939,492.64 940,492.64 941,492.63 942,492.61 943,492.59 944,492.58 945,492.56 946,492.54 947,492.52 948,492.51 949,492.49 950,492.47 951,492.46 952,492.44 953,492.42 954,492.41 955,492.39 956,492.29 957,492.11 958,491.94 959,491.76 960,491.58 961,491.41 962,491.23 963,491.05 964,490.87 965,490.70 966,490.54 967,490.40 968,490.27 969,490.13 970,490.00 971,489.86 972,489.72 973,489.59 974,489.45 975,489.31 976,489.21 977,489.12 978,489.04 979,488.96 980,488.87 981,488.79 982,488.71 983,488.63 984,488.54 985,488.46 986,488.38 987,488.30 988,488.21 989,488.13 990,488.05 991,487.98 992,487.90 993,487.83 994,487.76 995,487.68 996,487.61 997,487.54 998,487.46 999,487.39 1000,487.31 1001,487.24 1002,487.13 1003,487.00 1004,486.86 1005,486.73 1006,486.59 1007,486.45 1008,486.32 1009,486.18 1010,486.04 1011,485.91 1012,485.77 1013,485.64 1014,485.49 1015,485.35 1016,485.20 1017,485.05 1018,484.90 1019,484.76 1020,484.61 1021,484.46 1022,484.31 1023,484.17 1024,484.02 1025,483.87 1026,483.75 1027,483.67 1028,483.58 1029,483.50 1030,483.46 1031,483.46 1032,483.46 1033,483.46 1034,483.46 1035,483.46 1036,483.46 1037,483.46 1038,483.46 1039,483.46 1040,483.46 1041,483.46 1042,483.46 1043,483.46 1044,483.46 1045,483.46 1046,483.46 1047,483.46 1048,483.46 1049,483.46 1050,483.46 1051,483.46 1052,483.46 1053,483.46" fill="none" stroke="#ffff00" stroke-width="1" stroke-linejoin="round"/>
<polyline points="2,612.10 3,611.90 4,611.69 5,611.55 6,611.48 7,611.40 8,611.33 9,611.25 10,611.17 11,611.10 12,611.02 13,610.95 14,610.86 15,610.77 16,610.68 17,610.59 18,610.50 19,610.41 20,610.32 21,610.23 22,610.14 23,610.06 24,610.00 25,609.94 26,609.88 27,609.82 28,609.75 29,609.69 30,609.63 31,609.57 32,609.51 33,609.44 34,609.38 35,609.31 36,609.24 37,609.17 38,609.10 39,609.04 40,608.97 41,608.90 42,608.84 43,608.78 44,608.72 45,608.66 46,608.60 47,608.54 48,608.49 49,608.43 50,608.37 51,608.31 52,608.25 53,608.19 54,608.14 55,608.08 56,608.03 57,607.99 58,607.95 59,607.90 60,607.86 61,607.82 62,607.78 63,607.74 64,607.70 65,607.66 66,607.62 67,607.58 68,607.54 69,607.50 70,607.46 71,607.43 72,607.43 73,607.43 74,607.43 75,607.43 76,607.43 77,607.43 78,607.43 79,607.43 80,607.43 81,607.43 82,607.43 83,607.43 84,607.43 85,607.43 86,607.43 87,607.43 88,607.43 89,607.43 90,607.43 91,607.43 92,607.43 93,607.43 94,607.43 95,607.43 96,607.43 97,607.43 98,607.43 99,607.43 100,607.43 101,607.43 102,607.43 103,607.43 104,607.43 105,607.43 106,607.43 107,607.42 108,607.36 109,607.29 110,607.23 111,607.16 112,607.10 113,607.03 114,606.97 115,606.90 116,606.84 117,606.78 118,606.71 119,606.65 120,606.58 121,606.50 122,606.41 123,606.32 124,606.22 125,606.13 126,606.04 127,605.94 128,605.85 129,605.76 130,605.66 131,605.57 132,605.48 133,605.38 134,605.29 135,605.20 136,605.10 137,605.01 138,604.91 139,604.82 140,604.73 141,604.63 142,604.54 143,604.45 144,604.35 145,604.26 146,604.11 147,603.93 148,603.75 149,603.58 150,603.40 151,603.22 152,603.04 153,602.86 154,602.69 155,602.53 156,602.40 157,602.27 158,602.15 159,602.02 160,601.89 161,601.76 162,601.63 163,601.50 164,601.37 165,601.16 166,600.86 167,600.56 168,600.26 169,600.02 170,599.80 171,599.59 172,599.38 173,599.16 174,598.95 175,598.73 176,598.52 177,598.31 178,598.09 179,597.88 180,597.66 181,597.45 182,597.24 183,597.02 184,596.81 185,596.60 186,596.38 187,596.17 188,595.95 189,595.74 190,595.57 191,595.40 192,595.23 193,595.07 194,594.90 195,594.73 196,594.57 197,594.40 198,594.23 199,594.06 200,593.90 201,593.73 202,593.56 203,593.40 204,593.23 205,593.06 206,592.90 207,592.73 208,592.56 209,592.39 210,592.22 211,592.01 212,591.79 213,591.57 214,591.36 215,591.14 216,590.92 217,590.71 218,590.49 219,590.30 220,590.18 221,590.07 222,589.95 223,589.83 224,589.71 225,589.59 226,589.47 227,589.36 228,589.24 229,589.12 230,589.00 231,588.88 232,588.77 233,588.65 234,588.53 235,588.41 236,588.29 237,588.18 238,588.06 239,587.94 240,587.82 241,587.70 242,587.59 243,587.47 244,587.35 245,587.23 246,587.11 247,586.99 248,586.87 249,586.74 250,586.62 251,586.50 252,586.37 253,586.25 254,586.13 255,586.00 256,585.88 257,585.75 258,585.63 259,585.51 260,585.38 261,585.26 262,585.13 263,585.01 264,584.89 265,584.76 266,584.64 267,584.52 268,584.39 269,584.27 270,584.17 271,584.11 272,584.05 273,583.99 274,583.92 275,583.86 276,583.80 277,583.73 278,583.67 279,583.61 280,583.54 281,583.43 282,583.30 283,583.16 284,583.03 285,582.89 286,582.76 287,582.62 288,582.49 289,582.35 290,582.22 291,582.08 292,581.95 293,581.81 294,581.68 295,581.54 296,581.41 297,581.27 298,581.14 299,581.00 300,580.87 301,580.73 302,580.62 303,580.50 304,580.39 305,580.27 306,580.16 307,580.04 308,579.93 309,579.81 310,579.70 311,579.59 312,579.47 313,579.36 314,579.24 315,579.13 316,579.01 317,578.90 318,578.78 319,578.67 320,578.55 321,578.44 322,578.32 323,578.19 324,578.05 325,577.92 326,577.78 327,577.65 328,577.51 329,577.38 330,577.24 331,577.11 332,576.97 333,576.84 334,576.70 335,576.57 336,576.43 337,576.30 338,576.16 339,576.03 340,575.89 341,575.76 342,575.62 343,575.51 344,575.42 345,575.33 346,575.23 347,575.14 348,575.05 349,574.96 350,574.87 351,574.78 352,574.68 353,574.59 354,574.50 355,574.41 356,574.32 357,574.22 358,574.13 359,574.04 360,573.95 361,573.86 362,573.77 363,573.67 364,573.60 365,573.53 366,573.45 367,573.38 368,573.31 369,573.24 370,573.17 371,573.10 372,573.03 373,572.95 374,572.88 375,572.81 376,572.74 377,572.67 378,572.60 379,572.52 380,572.42 381,572.29 382,572.16 383,572.03 384,571.89 385,571.76 386,571.63 387,571.50 388,571.36 389,571.23 390,571.10 391,570.99 392,570.90 393,570.81 394,570.72 395,570.63 396,570.53 397,570.44 398,570.35 399,570.26 400,570.16 401,570.07 402,569.98 403,569.89 404,569.80 405,569.70 406,569.61 407,569.52 408,569.43 409,569.34 410,569.24 411,569.15 412,568.95 413,568.74 414,568.53 415,568.33 416,568.12 417,567.92 418,567.71 419,567.50 420,567.30 421,567.09 422,566.89 423,566.68 424,566.48 425,566.27 426,566.11 427,565.94 428,565.77 429,565.60 430,565.43 431,565.27 432,565.10 433,564.93 434,564.76 435,564.60 436,564.43 437,564.26 438,564.09 439,563.93 440,563.80 441,563.66 442,563.52 443,563.38 444,563.25 445,563.11 446,562.97 447,562.83 448,562.70 449,562.56 450,562.42 451,562.28 452,562.14 453,562.01 454,561.87 455,561.73 456,561.59 457,561.46 458,561.32 459,561.18 460,561.04 461,560.88 462,560.73 463,560.57 464,560.41 465,560.26 466,560.10 467,559.95 468,559.79 469,559.64 470,559.48 471,559.33 472,559.17 473,559.02 474,558.86 475,558.71 476,558.55 477,558.40 478,558.28 479,558.20 480,558.12 481,558.04 482,557.96 483,557.88 484,557.80 485,557.72 486,557.64 487,557.57 488,557.49 489,557.41 490,557.32 491,557.22 492,557.13 493,557.03 494,556.94 495,556.84 496,556.75 497,556.65 498,556.56 499,556.46 500,556.34 501,556.20 502,556.05 503,555.91 504,555.76 505,555.62 506,555.47 507,555.32 508,555.18 509,555.03 510,554.89 511,554.70 512,554.49 513,554.28 514,554.07 515,553.86 516,553.65 517,553.44 518,553.23 519,553.02 520,552.81 521,552.60 522,552.37 523,552.14 524,551.92 525,551.69 526,551.46 527,551.24 528,551.01 529,550.78 530,550.55 531,550.33 532,550.12 533,549.94 534,549.77 535,549.59 536,549.41 537,549.23 538,549.05 539,548.87 540,548.69 541,548.51 542,548.33 543,548.14 544,547.94 545,547.74 546,547.54 547,547.35 548,547.15 549,546.95 550,546.75 551,546.55 552,546.36 553,546.16 554,545.91 555,545.60 556,545.30 557,545.00 558,544.69 559,544.39 560,544.09 561,543.78 562,543.48 563,543.18 564,542.87 565,542.61 566,542.39 567,542.18 568,541.96 569,541.74 570,541.52 571,541.30 572,541.09 573,540.87 574,540.65 575,540.42 576,540.19 577,539.95 578,539.72 579,539.48 580,539.25 581,539.01 582,538.78 583,538.54 584,538.31 585,538.07 586,537.80 587,537.49 588,537.17 589,536.86 590,536.55 591,536.24 592,535.93 593,535.62 594,535.31 595,534.99 596,534.68 597,534.37 598,534.06 599,533.75 600,533.40 601,533.03 602,532.65 603,532.27 604,531.89 605,531.52 606,531.14 607,530.76 608,530.38 609,530.00 610,529.63 611,529.23 612,528.82 613,528.42 614,528.01 615,527.60 616,527.19 617,526.78 618,526.37 619,525.96 620,525.55 621,525.15 622,524.72 623,524.29 624,523.86 625,523.42 626,522.99 627,522.56 628,522.12 629,521.69 630,521.26 631,520.82 632,520.39 633,520.06 634,519.83 635,519.60 636,519.37 637,519.14 638,518.91 639,518.68 640,518.45 641,518.23 642,518.00 643,517.77 644,517.50 645,517.20 646,516.89 647,516.59 648,516.29 649,515.98 650,515.68 651,515.38 652,515.07 653,514.77 654,514.47 655,514.11 656,513.71 657,513.31 658,512.91 659,512.51 660,512.10 661,511.70 662,511.30 663,510.90 664,510.50 665,510.15 666,509.85 667,509.55 668,509.26 669,508.96 670,508.66 671,508.36 672,508.07 673,507.77 674,507.47 675,507.17 676,506.86 677,506.54 678,506.22 679,505.89 680,505.57 681,505.25 682,504.92 683,504.60 684,504.37 685,504.25 686,504.13 687,504.00 688,503.88 689,503.75 690,503.61 691,503.44 692,503.28 693,503.12 694,502.95 695,502.77 696,502.58 697,502.39 698,502.20 699,502.00 700,501.81 701,501.62 702,501.42 703,501.23 704,501.04 705,500.84 706,500.65 707,500.50 708,500.38 709,500.27 710,500.16 711,500.04 712,499.93 713,499.82 714,499.70 715,499.59 716,499.48 717,499.36 718,499.25 719,499.16 720,499.08 721,499.01 722,498.94 723,498.86 724,498.79 725,498.72 726,498.64 727,498.57 728,498.50 729,498.42 730,498.35 731,498.28 732,498.22 733,498.18 734,498.15 735,498.11 736,498.07 737,498.03 738,498.00 739,497.96 740,497.92 741,497.89 742,497.85 743,497.81 744,497.77 745,497.74 746,497.70 747,497.66 748,497.63 749,497.59 750,497.55 751,497.51 752,497.48 753,497.44 754,497.40 755,497.36 756,497.32 757,497.28 758,497.24 759,497.20 760,497.16 761,497.12 762,497.08 763,497.04 764,497.00 765,496.96 766,496.92 767,496.88 768,496.84 769,496.81 770,496.77 771,496.73 772,496.69 773,496.65 774,496.61 775,496.57 776,496.53 777,496.49 778,496.47 779,496.49 780,496.50 781,496.51 782,496.52 783,496.54 784,496.55 785,496.56 786,496.57 787,496.58 788,496.60 789,496.61 790,496.62 791,496.63 792,496.65 793,496.66 794,496.67 795,496.68 796,496.70 797,496.71 798,496.72 799,496.73 800,496.74 801,496.75 802,496.75 803,496.76 804,496.76 805,496.76 806,496.77 807,496.77 808,496.78 809,496.78 810,496.79 811,496.79 812,496.80 813,496.80 814,496.81 815,496.81 816,496.81 817,496.82 818,496.82 819,496.83 820,496.83 821,496.84 822,496.84 823,496.85 824,496.85 825,496.86 826,496.86 827,496.86 828,496.87 829,496.87 830,496.88 831,496.88 832,496.89 833,496.89 834,496.89 835,496.90 836,496.90 837,496.91 838,496.91 839,496.91 840,496.92 841,496.92 842,496.92 843,496.93 844,496.93 845,496.94 846,496.94 847,496.94 848,496.95 849,496.95 850,496.96 851,496.96 852,496.96 853,496.97 854,496.97 855,496.98 856,496.98 857,496.98 858,496.99 859,496.99 860,496.99 861,497.00 862,497.00 863,497.01 864,497.01 865,497.02 866,497.02 867,497.03 868,497.04 869,497.05 870,497.06 871,497.06 872,497.07 873,497.08 874,497.09 875,497.10 876,497.10 877,497.11 878,497.12 879,497.13 880,497.14 881,497.14 882,497.17 883,497.22 884,497.27 885,497.31 886,497.36 887,497.41 888,497.46 889,497.50 890,497.55 891,497.60 892,497.64 893,497.69 894,497.74 895,497.78 896,497.83 897,497.88 898,497.92 899,497.97 900,498.01 901,498.06 902,498.10 903,498.15 904,498.19 905,498.24 906,498.28 907,498.33 908,498.37 909,498.42 910,498.44 911,498.44 912,498.44 913,498.44 914,498.43 915,498.43 916,498.43 917,498.43 918,498.43 919,498.42 920,498.42 921,498.42 922,498.42 923,498.42 924,498.41 925,498.41 926,498.41 927,498.41 928,498.41 929,498.40 930,498.40 931,498.40 932,498.40 933,498.40 934,498.39 935,498.39 936,498.39 937,498.39 938,498.39 939,498.38 940,498.38 941,498.38 942,498.38 943,498.38 944,498.33 945,498.25 946,498.17 947,498.08 948,498.00 949,497.91 950,497.83 951,497.75 952,497.66 953,497.58 954,497.49 955,497.41 956,497.33 957,497.22 958,497.10 959,496.97 960,496.84 961,496.72 962,496.59 963,496.47 964,496.34 965,496.22 966,496.09 967,495.96 968,495.84 969,495.71 970,495.61 971,495.52 972,495.43 973,495.34 974,495.25 975,495.16 976,495.07 977,494.99 978,494.90 979,494.81 980,494.72 981,494.63 982,494.54 983,494.45 984,494.37 985,494.28 986,494.19 987,494.10 988,494.01 989,493.92 990,493.82 991,493.69 992,493.57 993,493.44 994,493.32 995,493.19 996,493.07 997,492.94 998,492.82 999,492.69 1000,492.57 1001,492.44 1002,492.31 1003,492.16 1004,492.01 1005,491.86 1006,491.72 1007,491.57 1008,491.42 1009,491.27 1010,491.13 1011,490.98 1012,490.83 1013,490.68 1014,490.56 1015,490.46 1016,490.37 1017,490.27 1018,490.17 1019,490.08 1020,489.98 1021,489.89 1022,489.79 1023,489.69 1024,489.60 1025,489.50 1026,489.47 1027,489.50 1028,489.54 1029,489.57 1030,489.40 1031,489.03 1032,488.84 1033,488.84 1034,488.84 1035,488.84 1036,488.84 1037,488.84 1038,488.84 1039,488.84 1040,488.84 1041,488.84 1042,488.84 1043,488.84 1044,488.84 1045,488.84 1046,488.84 1047,488.84 1048,488.84 1049,488.84 1050,488.84 1051,488.84 1052,488.84 1053,488.84" fill="none" stroke="#5ac8f5" stroke-width="1" stroke-linejoin="round"/>
<polyline points="2,624.24 3,624.06 4,623.87 5,623.75 6,623.67 7,623.59 8,623.52 9,623.44 10,623.37 11,623.29 12,623.22 13,623.14 14,623.06 15,622.98 16,622.89 17,622.81 18,622.73 19,622.64 20,622.56 21,622.48 22,622.39 23,622.33 24,622.28 25,622.24 26,622.19 27,622.15 28,622.10 29,622.06 30,622.01 31,621.97 32,621.92 33,621.88 34,621.83 35,621.79 36,621.74 37,621.69 38,621.65 39,621.60 40,621.55 41,621.50 42,621.45 43,621.40 44,621.36 45,621.31 46,621.26 47,621.21 48,621.16 49,621.11 50,621.06 51,621.02 52,620.98 53,620.96 54,620.93 55,620.91 56,620.89 57,620.86 58,620.84 59,620.82 60,620.79 61,620.77 62,620.74 63,620.72 64,620.70 65,620.67 66,620.65 67,620.63 68,620.60 69,620.58 70,620.56 71,620.53 72,620.51 73,620.49 74,620.46 75,620.44 76,620.42 77,620.39 78,620.37 79,620.35 80,620.32 81,620.30 82,620.28 83,620.25 84,619.97 85,619.68 86,619.66 87,619.64 88,619.61 89,619.59 90,619.57 91,619.54 92,619.52 93,619.50 94,619.47 95,619.45 96,619.42 97,619.40 98,619.38 99,619.35 100,619.33 101,619.31 102,619.28 103,619.26 104,619.23 105,619.21 106,619.19 107,619.16 108,619.13 109,619.09 110,619.04 111,619.00 112,618.96 113,618.91 114,618.87 115,618.83 116,618.79 117,618.74 118,618.70 119,618.66 120,618.61 121,618.57 122,618.53 123,618.48 124,618.44 125,618.40 126,618.36 127,618.30 128,618.23 129,618.16 130,618.10 131,618.03 132,617.96 133,617.89 134,617.82 135,617.75 136,617.69 137,617.62 138,617.55 139,617.48 140,617.41 141,617.35 142,617.28 143,617.21 144,617.14 145,617.07 146,616.99 147,616.90 148,616.81 149,616.72 150,616.63 151,616.54 152,616.45 153,616.36 154,616.27 155,616.18 156,616.11 157,616.03 158,615.96 159,615.89 160,615.81 161,615.74 162,615.66 163,615.59 164,615.51 165,615.40 166,615.26 167,615.11 168,614.97 169,614.82 170,614.68 171,614.53 172,614.38 173,614.24 174,614.09 175,613.95 176,613.81 177,613.68 178,613.54 179,613.41 180,613.28 181,613.14 182,613.01 183,612.87 184,612.74 185,612.60 186,612.47 187,612.34 188,612.20 189,612.07 190,611.93 191,611.80 192,611.66 193,611.53 194,611.40 195,611.26 196,611.13 197,611.01 198,610.90 199,610.79 200,610.67 201,610.56 202,610.45 203,610.33 204,610.22 205,610.11 206,609.99 207,609.88 208,609.77 209,609.65 210,609.54 211,609.43 212,609.31 213,609.20 214,609.09 215,608.98 216,608.86 217,608.75 218,608.64 219,608.52 220,608.41 221,608.30 222,608.18 223,608.07 224,607.96 225,607.88 226,607.80 227,607.71 228,607.63 229,607.54 230,607.46 231,607.38 232,607.29 233,607.21 234,607.13 235,607.04 236,606.96 237,606.88 238,606.79 239,606.71 240,606.63 241,606.54 242,606.46 243,606.37 244,606.29 245,606.21 246,606.12 247,606.04 248,605.96 249,605.87 250,605.79 251,605.71 252,605.61 253,605.51 254,605.40 255,605.30 256,605.19 257,605.09 258,604.98 259,604.88 260,604.77 261,604.67 262,604.57 263,604.46 264,604.36 265,604.25 266,604.15 267,604.04 268,603.94 269,603.83 270,603.73 271,603.62 272,603.52 273,603.42 274,603.34 275,603.27 276,603.20 277,603.13 278,603.06 279,602.99 280,602.92 281,602.85 282,602.78 283,602.70 284,602.63 285,602.58 286,602.55 287,602.53 288,602.50 289,602.47 290,602.44 291,602.41 292,602.33 293,602.21 294,602.08 295,601.96 296,601.83 297,601.71 298,601.58 299,601.46 300,601.33 301,601.21 302,601.08 303,600.96 304,600.83 305,600.71 306,600.58 307,600.46 308,600.33 309,600.21 310,600.11 311,600.04 312,599.98 313,599.91 314,599.84 315,599.77 316,599.70 317,599.64 318,599.57 319,599.50 320,599.43 321,599.36 322,599.29 323,599.23 324,599.16 325,599.09 326,599.02 327,598.95 328,598.89 329,598.80 330,598.71 331,598.61 332,598.51 333,598.42 334,598.32 335,598.22 336,598.12 337,598.03 338,597.93 339,597.83 340,597.74 341,597.64 342,597.54 343,597.45 344,597.35 345,597.25 346,597.16 347,597.06 348,596.96 349,596.86 350,596.77 351,596.67 352,596.57 353,596.48 354,596.38 355,596.29 356,596.21 357,596.13 358,596.05 359,595.96 360,595.88 361,595.80 362,595.72 363,595.64 364,595.55 365,595.47 366,595.39 367,595.31 368,595.23 369,595.15 370,595.06 371,594.98 372,594.89 373,594.80 374,594.72 375,594.63 376,594.55 377,594.46 378,594.37 379,594.29 380,594.20 381,594.12 382,594.03 383,593.94 384,593.86 385,593.77 386,593.68 387,593.60 388,593.51 389,593.43 390,593.34 391,593.25 392,593.17 393,593.08 394,593.00 395,592.91 396,592.82 397,592.74 398,592.61 399,592.48 400,592.34 401,592.21 402,592.07 403,591.94 404,591.80 405,591.67 406,591.53 407,591.40 408,591.26 409,591.12 410,590.99 411,590.85 412,590.72 413,590.58 414,590.45 415,590.31 416,590.18 417,590.04 418,589.91 419,589.77 420,589.64 421,589.50 422,589.37 423,589.23 424,589.10 425,588.96 426,588.85 427,588.74 428,588.62 429,588.51 430,588.40 431,588.28 432,588.17 433,588.05 434,587.94 435,587.83 436,587.71 437,587.60 438,587.49 439,587.37 440,587.26 441,587.15 442,587.03 443,586.92 444,586.81 445,586.69 446,586.58 447,586.47 448,586.35 449,586.24 450,586.12 451,586.01 452,585.90 453,585.79 454,585.70 455,585.61 456,585.51 457,585.42 458,585.33 459,585.23 460,585.14 461,585.05 462,584.95 463,584.86 464,584.77 465,584.67 466,584.58 467,584.49 468,584.39 469,584.30 470,584.21 471,584.11 472,584.02 473,583.93 474,583.83 475,583.74 476,583.64 477,583.55 478,583.46 479,583.36 480,583.27 481,583.22 482,583.17 483,583.13 484,583.09 485,583.04 486,583.00 487,582.95 488,582.91 489,582.87 490,582.78 491,582.64 492,582.50 493,582.37 494,582.23 495,582.09 496,581.96 497,581.82 498,581.69 499,581.55 500,581.42 501,581.31 502,581.19 503,581.08 504,580.96 505,580.84 506,580.73 507,580.61 508,580.50 509,580.38 510,580.27 511,580.15 512,580.03 513,579.92 514,579.80 515,579.69 516,579.57 517,579.45 518,579.34 519,579.22 520,579.10 521,578.98 522,578.85 523,578.72 524,578.60 525,578.47 526,578.35 527,578.22 528,578.09 529,577.97 530,577.84 531,577.72 532,577.59 533,577.46 534,577.34 535,577.21 536,577.09 537,576.96 538,576.83 539,576.71 540,576.56 541,576.39 542,576.22 543,576.04 544,575.87 545,575.70 546,575.53 547,575.36 548,575.19 549,575.01 550,574.84 551,574.67 552,574.50 553,574.33 554,574.16 555,573.98 556,573.81 557,573.64 558,573.47 559,573.30 560,573.13 561,572.95 562,572.78 563,572.61 564,572.44 565,572.27 566,572.11 567,571.95 568,571.79 569,571.62 570,571.46 571,571.30 572,571.14 573,570.97 574,570.81 575,570.65 576,570.48 577,570.32 578,570.16 579,570.00 580,569.83 581,569.67 582,569.51 583,569.35 584,569.18 585,569.02 586,568.86 587,568.69 588,568.53 589,568.35 590,568.12 591,567.88 592,567.64 593,567.40 594,567.16 595,566.93 596,566.69 597,566.45 598,566.21 599,565.97 600,565.73 601,565.50 602,565.26 603,565.02 604,564.78 605,564.54 606,564.31 607,564.07 608,563.83 609,563.59 610,563.35 611,563.12 612,562.88 613,562.64 614,562.41 615,562.18 616,561.95 617,561.72 618,561.49 619,561.26 620,561.03 621,560.80 622,560.57 623,560.34 624,560.11 625,559.88 626,559.65 627,559.42 628,559.19 629,558.96 630,558.73 631,558.50 632,558.27 633,558.04 634,557.81 635,557.58 636,557.35 637,557.12 638,556.89 639,556.68 640,556.47 641,556.25 642,556.04 643,555.83 644,555.62 645,555.40 646,555.19 647,554.98 648,554.77 649,554.55 650,554.34 651,554.13 652,553.92 653,553.71 654,553.49 655,553.28 656,553.07 657,552.86 658,552.64 659,552.43 660,552.22 661,552.01 662,551.80 663,551.59 664,551.38 665,551.16 666,550.95 667,550.74 668,550.53 669,550.32 670,550.01 671,549.60 672,549.19 673,548.78 674,548.37 675,548.08 676,547.91 677,547.74 678,547.56 679,547.39 680,547.22 681,547.04 682,546.87 683,546.69 684,546.52 685,546.35 686,546.17 687,546.00 688,545.83 689,545.65 690,545.48 691,545.30 692,545.13 693,544.96 694,544.78 695,544.64 696,544.52 697,544.41 698,544.29 699,544.18 700,544.06 701,543.94 702,543.83 703,543.71 704,543.60 705,543.48 706,543.36 707,543.25 708,543.13 709,543.02 710,542.90 711,542.79 712,542.67 713,542.55 714,542.44 715,542.33 716,542.23 717,542.12 718,542.02 719,541.92 720,541.82 721,541.72 722,541.61 723,541.51 724,541.41 725,541.31 726,541.21 727,541.10 728,541.00 729,540.90 730,540.80 731,540.69 732,540.59 733,540.49 734,540.39 735,540.28 736,540.17 737,540.06 738,539.96 739,539.85 740,539.74 741,539.63 742,539.52 743,539.41 744,539.30 745,539.19 746,539.08 747,538.97 748,538.87 749,538.76 750,538.65 751,538.54 752,538.43 753,538.32 754,538.21 755,538.10 756,537.99 757,537.88 758,537.78 759,537.67 760,537.56 761,537.45 762,537.34 763,537.23 764,537.12 765,537.01 766,536.90 767,536.79 768,536.69 769,536.58 770,536.49 771,536.42 772,536.35 773,536.28 774,536.22 775,536.15 776,536.08 777,536.01 778,535.94 779,535.87 780,535.81 781,535.74 782,535.67 783,535.60 784,535.53 785,535.47 786,535.40 787,535.33 788,535.26 789,535.19 790,535.14 791,535.09 792,535.04 793,534.99 794,534.94 795,534.90 796,534.85 797,534.80 798,534.75 799,534.71 800,534.66 801,534.61 802,534.56 803,534.52 804,534.47 805,534.42 806,534.37 807,534.33 808,534.28 809,534.23 810,534.18 811,534.13 812,534.08 813,534.03 814,533.98 815,533.92 816,533.87 817,533.82 818,533.77 819,533.72 820,533.67 821,533.62 822,533.57 823,533.52 824,533.46 825,533.41 826,533.36 827,533.31 828,533.26 829,533.21 830,533.15 831,533.08 832,533.01 833,532.95 834,532.88 835,532.81 836,532.74 837,532.67 838,532.60 839,532.54 840,532.47 841,532.40 842,532.33 843,532.26 844,532.20 845,532.13 846,532.08 847,532.03 848,531.97 849,531.92 850,531.86 851,531.81 852,531.75 853,531.70 854,531.64 855,531.59 856,531.54 857,531.48 858,531.43 859,531.37 860,531.32 861,531.26 862,531.21 863,531.15 864,531.10 865,531.05 866,531.00 867,530.95 868,530.91 869,530.86 870,530.81 871,530.76 872,530.71 873,530.67 874,530.62 875,530.57 876,530.52 877,530.48 878,530.43 879,530.38 880,530.33 881,530.29 882,530.24 883,530.19 884,530.14 885,530.08 886,530.02 887,529.95 888,529.88 889,529.81 890,529.74 891,529.68 892,529.61 893,529.54 894,529.47 895,529.40 896,529.34 897,529.27 898,529.20 899,529.13 900,529.06 901,528.99 902,528.93 903,528.86 904,528.79 905,528.74 906,528.71 907,528.67 908,528.64 909,528.60 910,528.57 911,528.53 912,528.50 913,528.47 914,528.43 915,528.40 916,528.36 917,528.33 918,528.30 919,528.26 920,528.23 921,528.19 922,528.16 923,528.13 924,528.09 925,528.04 926,527.98 927,527.92 928,527.85 929,527.79 930,527.72 931,527.66 932,527.60 933,527.53 934,527.47 935,527.41 936,527.34 937,527.28 938,527.21 939,527.15 940,527.09 941,527.02 942,526.96 943,526.90 944,526.83 945,526.77 946,526.70 947,526.64 948,526.58 949,526.51 950,526.45 951,526.39 952,526.32 953,526.26 954,526.19 955,526.13 956,526.07 957,526.00 958,525.94 959,525.87 960,525.81 961,525.75 962,525.68 963,525.62 964,525.56 965,525.49 966,525.43 967,525.36 968,525.30 969,525.24 970,525.17 971,525.11 972,525.03 973,524.95 974,524.86 975,524.77 976,524.68 977,524.60 978,524.51 979,524.42 980,524.33 981,524.25 982,524.16 983,524.07 984,523.98 985,523.90 986,523.81 987,523.72 988,523.63 989,523.55 990,523.46 991,523.37 992,523.28 993,523.19 994,523.11 995,523.02 996,522.93 997,522.84 998,522.76 999,522.67 1000,522.56 1001,522.42 1002,522.28 1003,522.15 1004,522.01 1005,521.88 1006,521.74 1007,521.60 1008,521.47 1009,521.33 1010,521.19 1011,521.06 1012,520.92 1013,520.79 1014,520.65 1015,520.51 1016,520.38 1017,520.24 1018,520.10 1019,519.97 1020,519.83 1021,519.70 1022,519.59 1023,519.50 1024,519.42 1025,519.33 1026,519.24 1027,519.16 1028,519.07 1029,518.99 1030,518.90 1031,518.82 1032,518.73 1033,518.65 1034,518.56 1035,518.48 1036,518.39 1037,518.31 1038,518.24 1039,518.18 1040,518.13 1041,518.07 1042,518.02 1043,517.97 1044,517.91 1045,517.86 1046,517.80 1047,517.75 1048,517.69 1049,517.64 1050,517.58 1051,517.53 1052,517.48 1053,517.45" fill="none" stroke="#0000ff" stroke-width="1" stroke-linejoin="round"/>
<polygon points="964.5,154 969.5,148 974.5,154" fill="#ff0000"/>
<rect x="968" y="154" width="3" height="6" fill="#ff0000"/>
<polygon points="964.5,476 969.5,469 974.5,476" fill="#ff0000"/>
<rect x="968" y="476" width="3" height="6" fill="#ff0000"/>
<rect x="0" y="0" width="1" height="19" fill="#c80000"/>
<rect x="0" y="19" width="1121" height="1" fill="#c80000"/>
<rect x="23" y="0" width="1" height="19" fill="#c80000"/>
<rect x="805" y="0" width="1" height="19" fill="#c80000"/>
<rect x="839" y="0" width="1" height="19" fill="#c80000"/>
<rect x="874" y="0" width="1" height="19" fill="#c80000"/>
<rect x="909" y="0" width="1" height="19" fill="#c80000"/>
<rect x="944" y="0" width="1" height="19" fill="#c80000"/>
<rect x="979" y="0" width="1" height="19" fill="#c80000"/>
<rect x="1014" y="0" width="1" height="19" fill="#c80000"/>
<rect x="1049" y="0" width="1" height="19" fill="#c80000"/>
<rect x="1084" y="0" width="1" height="19" fill="#c80000"/>
<rect x="1121" y="0" width="1" height="396" fill="#c80000"/>
<rect x="1120" y="396" width="2" height="254" fill="#c80000"/>
<rect x="1070" y="19" width="1" height="377" fill="#c80000"/>
<rect x="1070" y="396" width="2" height="234" fill="#c80000"/>
<rect x="0" y="396" width="1070" height="1" fill="#c80000"/>
<rect x="1070" y="396" width="52" height="2" fill="#c80000"/>
<rect x="1121" y="25" width="9" height="1" fill="#c80000"/>
<rect x="1121" y="45" width="9" height="1" fill="#c80000"/>
<rect x="1121" y="142" width="9" height="1" fill="#c80000"/>
<rect x="1121" y="240" width="9" height="1" fill="#c80000"/>
<rect x="1121" y="325" width="9" height="1" fill="#c80000"/>
<rect x="1121" y="418" width="9" height="1" fill="#c80000"/>
<rect x="1121" y="437" width="9" height="1" fill="#c80000"/>
<rect x="1071" y="68" width="6" height="1" fill="#c80000"/>
<rect x="1071" y="94" width="3" height="1" fill="#c80000"/>
<rect x="1071" y="120" width="6" height="1" fill="#c80000"/>
<rect x="1071" y="146" width="3" height="1" fill="#c80000"/>
<rect x="1071" y="171" width="6" height="1" fill="#c80000"/>
<rect x="1071" y="197" width="3" height="1" fill="#c80000"/>
<rect x="1071" y="223" width="6" height="1" fill="#c80000"/>
<rect x="1071" y="249" width="3" height="1" fill="#c80000"/>
<rect x="1071" y="274" width="6" height="1" fill="#c80000"/>
<rect x="1071" y="300" width="3" height="1" fill="#c80000"/>
<rect x="1071" y="326" width="6" height="1" fill="#c80000"/>
<rect x="1071" y="352" width="3" height="1" fill="#c80000"/>
<rect x="1071" y="378" width="6" height="1" fill="#c80000"/>
<rect x="1072" y="415" width="5" height="1" fill="#c80000"/>
<rect x="1072" y="433" width="3" height="1" fill="#c80000"/>
<rect x="1072" y="450" width="5" height="1" fill="#c80000"/>
<rect x="1072" y="468" width="3" height="1" fill="#c80000"/>
<rect x="1072" y="485" width="5" height="1" fill="#c80000"/>
<rect x="1072" y="503" width="3" height="1" fill="#c80000"/>
<rect x="1072" y="521" width="5" height="1" fill="#c80000"/>
<rect x="1072" y="539" width="3" height="1" fill="#c80000"/>
<rect x="1072" y="556" width="5" height="1" fill="#c80000"/>
<rect x="1072" y="574" width="3" height="1" fill="#c80000"/>
<rect x="1072" y="591" width="5" height="1" fill="#c80000"/>
<rect x="0" y="630" width="1121" height="1" fill="#c80000"/>
<rect x="0" y="646" width="1121" height="1" fill="#c80000"/>
<rect x="67" y="630" width="1" height="17" fill="#c80000"/>
<rect x="166" y="630" width="1" height="17" fill="#c80000"/>
<rect x="255" y="630" width="1" height="17" fill="#c80000"/>
<rect x="350" y="630" width="1" height="17" fill="#c80000"/>
<rect x="458" y="630" width="1" height="17" fill="#c80000"/>
<rect x="557" y="630" width="1" height="17" fill="#c80000"/>
<rect x="661" y="630" width="1" height="17" fill="#c80000"/>
<rect x="741" y="630" width="1" height="17" fill="#c80000"/>
<rect x="835" y="630" width="1" height="17" fill="#c80000"/>
<rect x="944" y="630" width="1" height="17" fill="#c80000"/>
<rect x="92" y="631" width="1" height="3" fill="#c80000"/>
<rect x="117" y="631" width="1" height="3" fill="#c80000"/>
<rect x="141" y="631" width="1" height="3" fill="#c80000"/>
<rect x="188" y="631" width="1" height="3" fill="#c80000"/>
<rect x="212" y="631" width="1" height="3" fill="#c80000"/>
<rect x="234" y="631" width="1" height="3" fill="#c80000"/>
<rect x="279" y="631" width="1" height="3" fill="#c80000"/>
<rect x="303" y="631" width="1" height="3" fill="#c80000"/>
<rect x="326" y="631" width="1" height="3" fill="#c80000"/>
<rect x="377" y="631" width="1" height="3" fill="#c80000"/>
<rect x="404" y="631" width="1" height="3" fill="#c80000"/>
<rect x="431" y="631" width="1" height="3" fill="#c80000"/>
<rect x="483" y="631" width="1" height="3" fill="#c80000"/>
<rect x="508" y="631" width="1" height="3" fill="#c80000"/>
<rect x="532" y="631" width="1" height="3" fill="#c80000"/>
<rect x="583" y="631" width="1" height="3" fill="#c80000"/>
<rect x="609" y="631" width="1" height="3" fill="#c80000"/>
<rect x="635" y="631" width="1" height="3" fill="#c80000"/>
<rect x="681" y="631" width="1" height="3" fill="#c80000"/>
<rect x="701" y="631" width="1" height="3" fill="#c80000"/>
<rect x="721" y="631" width="1" height="3" fill="#c80000"/>
<rect x="765" y="631" width="1" height="3" fill="#c80000"/>
<rect x="788" y="631" width="1" height="3" fill="#c80000"/>
<rect x="812" y="631" width="1" height="3" fill="#c80000"/>
<rect x="862" y="631" width="1" height="3" fill="#c80000"/>
<rect x="890" y="631" width="1" height="3" fill="#c80000"/>
<rect x="917" y="631" width="1" height="3" fill="#c80000"/>
<rect x="968" y="631" width="1" height="3" fill="#c80000"/>
<rect x="1000" y="631" width="1" height="3" fill="#c80000"/>
<rect x="1030" y="631" width="1" height="3" fill="#c80000"/>
<rect x="0" y="647" width="1" height="3" fill="#c80000"/>
<rect x="42" y="647" width="1" height="3" fill="#c80000"/>
<rect x="73" y="647" width="1" height="3" fill="#c80000"/>
<rect x="115" y="647" width="1" height="3" fill="#c80000"/>
<rect x="145" y="647" width="1" height="3" fill="#c80000"/>
<rect x="177" y="647" width="1" height="3" fill="#c80000"/>
<rect x="210" y="647" width="1" height="3" fill="#c80000"/>
<rect x="241" y="647" width="1" height="3" fill="#c80000"/>
<rect x="282" y="647" width="1" height="3" fill="#c80000"/>
<rect x="308" y="647" width="1" height="3" fill="#c80000"/>
<rect x="332" y="647" width="1" height="3" fill="#c80000"/>
<rect x="364" y="647" width="1" height="3" fill="#c80000"/>
<rect x="390" y="647" width="1" height="3" fill="#c80000"/>
<rect x="422" y="647" width="1" height="3" fill="#c80000"/>
<rect x="447" y="647" width="1" height="3" fill="#c80000"/>
<rect x="480" y="647" width="1" height="3" fill="#c80000"/>
<rect x="508" y="647" width="1" height="3" fill="#c80000"/>
<rect x="540" y="647" width="1" height="3" fill="#c80000"/>
<rect x="568" y="647" width="1" height="3" fill="#c80000"/>
<rect x="600" y="647" width="1" height="3" fill="#c80000"/>
<rect x="628" y="647" width="1" height="3" fill="#c80000"/>
<rect x="663" y="647" width="1" height="3" fill="#c80000"/>
<rect x="697" y="647" width="1" height="3" fill="#c80000"/>
<rect x="736" y="647" width="1" height="3" fill="#c80000"/>
<rect x="767" y="647" width="1" height="3" fill="#c80000"/>
<rect x="807" y="647" width="1" height="3" fill="#c80000"/>
<rect x="839" y="647" width="1" height="3" fill="#c80000"/>
<rect x="871" y="647" width="1" height="3" fill="#c80000"/>
<rect x="905" y="647" width="1" height="3" fill="#c80000"/>
<rect x="940" y="647" width="1" height="3" fill="#c80000"/>
<rect x="975" y="647" width="1" height="3" fill="#c80000"/>
<rect x="8" y="649" width="1" height="1" fill="#c8c8c8"/>
<rect x="11" y="649" width="1" height="1" fill="#c8c8c8"/>
<rect x="16" y="649" width="1" height="1" fill="#c8c8c8"/>
<rect x="20" y="649" width="1" height="1" fill="#c8c8c8"/>
<rect x="51" y="649" width="1" height="1" fill="#c8c8c8"/>
<rect x="828" y="649" width="1" height="1" fill="#c8c8c8"/>
<rect x="845" y="649" width="8" height="1" fill="#54fcfc"/>
<rect x="856" y="649" width="10" height="1" fill="#54fcfc"/>
<rect x="984" y="600" width="146" height="50" fill="#000000"/>
</svg>

<svg class="ic" style="left:5px;top:3px" width="12" height="11" viewBox="0 0 12 11"><rect x="0.5" y="0.5" width="11" height="10" rx="2" fill="none" stroke="#8c8c8c"/><rect x="7" y="2" width="3" height="7" fill="#8c8c8c"/></svg>
<svg class="ic" style="left:1055px;top:24px" width="12" height="11" viewBox="0 0 12 11"><rect x="0.5" y="0.5" width="11" height="10" rx="2" fill="none" stroke="#8c8c8c"/><rect x="7" y="2" width="3" height="7" fill="#8c8c8c"/></svg>
<svg class="ic" style="left:1037px;top:24px" width="12" height="12" viewBox="0 0 12 12"><polygon points="6,0.5 11.5,6 6,11.5 0.5,6" fill="none" stroke="#8c8c8c"/></svg>
<svg class="ic" style="left:128px;top:23px" width="13" height="13" viewBox="0 0 13 13"><circle cx="6.5" cy="6.5" r="6" fill="#6e6e6e"/><polyline points="3.5,5 6.5,8 9.5,5" fill="none" stroke="#1e1e1e" stroke-width="1.3"/></svg>
<svg class="ic" style="left:2px;top:399px" width="13" height="13" viewBox="0 0 13 13"><circle cx="6.5" cy="6.5" r="6" fill="#6e6e6e"/><polyline points="3.5,5 6.5,8 9.5,5" fill="none" stroke="#1e1e1e" stroke-width="1.3"/></svg>

<div class="t" style="left:28px;top:2px;color:#c8c8c8;font-size:12px;">分时</div>
<div class="t" style="left:61px;top:2px;color:#c8c8c8;font-size:12px;">1分钟</div>
<div class="t" style="left:100px;top:2px;color:#c8c8c8;font-size:12px;">5分钟</div>
<div class="t" style="left:139px;top:2px;color:#c8c8c8;font-size:12px;">15分钟</div>
<div class="t" style="left:185px;top:2px;color:#c8c8c8;font-size:12px;">30分钟</div>
<div class="t" style="left:231px;top:2px;color:#c8c8c8;font-size:12px;">60分钟</div>
<div class="t" style="left:278px;top:2px;color:#00e6ff;font-size:12px;">日线</div>
<div class="t" style="left:312px;top:2px;color:#c8c8c8;font-size:12px;">周线</div>
<div class="t" style="left:345px;top:2px;color:#c8c8c8;font-size:12px;">月线</div>
<div class="t" style="left:378px;top:2px;color:#c8c8c8;font-size:12px;">多周期</div>
<div class="t" style="left:421px;top:2px;color:#c8c8c8;font-size:12px;">更多 &gt;</div>
<div class="t" style="left:806px;top:2px;width:33px;text-align:center;color:#c8c8c8;font-size:12px">复权</div>
<div class="t" style="left:840px;top:2px;width:34px;text-align:center;color:#c8c8c8;font-size:12px">叠加</div>
<div class="t" style="left:875px;top:2px;width:34px;text-align:center;color:#c8c8c8;font-size:12px">多股</div>
<div class="t" style="left:910px;top:2px;width:34px;text-align:center;color:#c8c8c8;font-size:12px">统计</div>
<div class="t" style="left:945px;top:2px;width:34px;text-align:center;color:#c8c8c8;font-size:12px">画线</div>
<div class="t" style="left:980px;top:2px;width:34px;text-align:center;color:#c8c8c8;font-size:12px">F10</div>
<div class="t" style="left:1015px;top:2px;width:34px;text-align:center;color:#c8c8c8;font-size:12px">标记</div>
<div class="t" style="left:1050px;top:2px;width:34px;text-align:center;color:#c8c8c8;font-size:12px">+自选</div>
<div class="t" style="left:1085px;top:2px;width:36px;text-align:center;color:#c8c8c8;font-size:12px">返回</div>
<div class="t" style="left:3px;top:22px;color:#c8c8c8;font-size:12px;letter-spacing:0.15px">北京利尔(日线.前复权)</div>
<div class="t" style="left:144px;top:22px;color:#ffffff;font-size:12px;letter-spacing:-0.1px">MA5: 8.28</div>
<div class="t" style="left:202px;top:22px;color:#ff00ff;font-size:12px;letter-spacing:-0.1px">MA10: 8.17</div>
<div class="t" style="left:267px;top:22px;color:#ffff00;font-size:12px;letter-spacing:-0.1px">MA20: 8.06</div>
<div class="t" style="left:332px;top:22px;color:#5ac8f5;font-size:12px;letter-spacing:-0.1px">MA60: 7.91</div>
<div class="t" style="left:18px;top:398px;color:#c8c8c8;font-size:12px;">股朋指标网</div>
<div class="t" style="left:83px;top:398px;color:#ffffff;font-size:12px;letter-spacing:0px">EMA30: 8.28</div>
<div class="t" style="left:156px;top:398px;color:#ff00ff;font-size:12px;letter-spacing:0px">EMA60: 8.17</div>
<div class="t" style="left:229px;top:398px;color:#ffff00;font-size:12px;letter-spacing:0px">EMA90: 8.06</div>
<div class="t" style="left:302px;top:398px;color:#5ac8f5;font-size:12px;letter-spacing:0px">EMA120: 7.91</div>
<div class="t" style="left:382px;top:398px;color:#0000ff;font-size:12px;letter-spacing:0px">EMA250: 7.09</div>
<div class="t ax" style="top:61.8px">10.00</div>
<div class="t ax" style="top:87.6px">9.50</div>
<div class="t ax" style="top:113.5px">9.00</div>
<div class="t ax" style="top:139.3px">8.50</div>
<div class="t ax" style="top:165.1px">8.00</div>
<div class="t ax" style="top:190.9px">7.50</div>
<div class="t ax" style="top:216.8px">7.00</div>
<div class="t ax" style="top:242.6px">6.50</div>
<div class="t ax" style="top:268.4px">6.00</div>
<div class="t ax" style="top:294.3px">5.50</div>
<div class="t ax" style="top:320.1px">5.00</div>
<div class="t ax" style="top:345.9px">4.50</div>
<div class="t ax" style="top:371.8px">4.00</div>
<div class="t ax" style="top:409.0px">10.00</div>
<div class="t ax" style="top:444.0px">9.00</div>
<div class="t ax" style="top:479.0px">8.00</div>
<div class="t ax" style="top:515.0px">7.00</div>
<div class="t ax" style="top:550.0px">6.00</div>
<div class="t ax" style="top:585.0px">5.00</div>
<div style="position:absolute;left:1072px;top:507px;width:48px;height:15px;background:#000080;border-top:1px solid #c80000;border-bottom:1px solid #c80000"></div>
<div class="t" style="left:1072px;top:508px;color:#e0e0e0;font-size:12px;">6.93</div>
<div class="t" style="left:3px;top:632px;color:#ff3c3c;font-size:12px;">2025年</div>
<div class="t" style="left:69px;top:632px;color:#ff3c3c;font-size:12px;">4</div>
<div class="t" style="left:168px;top:632px;color:#ff3c3c;font-size:12px;">5</div>
<div class="t" style="left:257px;top:632px;color:#ff3c3c;font-size:12px;">6</div>
<div class="t" style="left:352px;top:632px;color:#ff3c3c;font-size:12px;">7</div>
<div class="t" style="left:460px;top:632px;color:#ff3c3c;font-size:12px;">8</div>
<div class="t" style="left:559px;top:632px;color:#ff3c3c;font-size:12px;">9</div>
<div class="t" style="left:663px;top:632px;color:#ff3c3c;font-size:12px;">10</div>
<div class="t" style="left:743px;top:632px;color:#ff3c3c;font-size:12px;">11</div>
<div class="t" style="left:837px;top:632px;color:#ff3c3c;font-size:12px;">12</div>
<div class="t" style="left:946px;top:632px;color:#ff3c3c;font-size:12px;">1</div>
<div class="t" style="left:1018px;top:607px;font-size:18px;font-weight:bold;color:#fff">股朋指标网</div>
<div class="t" style="left:991px;top:627px;font-size:18px;letter-spacing:0.15px;color:#f0f0f0">www.7gpzb.com</div>
<div class="t rc" style="top:28.0px;color:#a0a0a0;font-size:12px;transform:rotate(90deg);transform-origin:6px 7.5px;">涨</div>
<div class="t rc" style="top:48.0px;color:#a0a0a0;font-size:12px;transform:rotate(90deg);transform-origin:6px 7.5px;">涨</div>
<div class="t rc" style="top:67.5px;color:#a0a0a0;font-size:12px;transform:rotate(90deg);transform-origin:6px 7.5px;">幅</div>
<div class="t rc" style="top:87.0px;color:#a0a0a0;font-size:12px;transform:rotate(90deg);transform-origin:6px 7.5px;">涨</div>
<div class="t rc" style="top:106.5px;color:#a0a0a0;font-size:12px;transform:rotate(90deg);transform-origin:6px 7.5px;">幅</div>
<div class="t rc" style="top:126.0px;color:#a0a0a0;font-size:12px;transform:rotate(90deg);transform-origin:6px 7.5px;">涨</div>
<div class="t rc" style="top:145.0px;color:#a0a0a0;font-size:12px;transform:rotate(90deg);transform-origin:6px 7.5px;">跌</div>
<div class="t rc" style="top:160.5px;color:#a0a0a0;font-size:12px;transform:rotate(90deg);transform-origin:6px 7.5px;">幅</div>
<div class="t rc" style="top:176.0px;color:#a0a0a0;font-size:12px;transform:rotate(90deg);transform-origin:6px 7.5px;">跌</div>
<div class="t rc" style="top:191.5px;color:#a0a0a0;font-size:12px;transform:rotate(90deg);transform-origin:6px 7.5px;">幅</div>
<div class="t rc" style="top:207.0px;color:#a0a0a0;font-size:12px;transform:rotate(90deg);transform-origin:6px 7.5px;">跌</div>
<div class="t rc" style="top:222.5px;color:#a0a0a0;font-size:12px;transform:rotate(90deg);transform-origin:6px 7.5px;">幅</div>
<div class="t rc" style="top:241.0px;color:#a0a0a0;font-size:12px;">田</div>
<div class="t rc" style="top:257.0px;color:#a0a0a0;font-size:12px;">洋</div>
<div class="t rc" style="top:273.0px;color:#a0a0a0;font-size:12px;">洋</div>
<div class="t rc" style="top:289.0px;color:#a0a0a0;font-size:12px;">完</div>
<div class="t rc" style="top:305.0px;color:#a0a0a0;font-size:12px;">处</div>
<div class="t rc" style="top:338.0px;color:#a0a0a0;font-size:12px;">换</div>
<div class="t rc" style="top:356.0px;color:#a0a0a0;font-size:12px;">洋</div>
<div class="t rc" style="top:374.0px;color:#a0a0a0;font-size:12px;">盯</div>
<div class="t rc" style="top:401.0px;color:#ffff00;font-size:14px;">自</div>
<div class="t rc" style="top:420.0px;color:#a0a0a0;font-size:12px;">交</div>
<div class="t rc" style="top:440.0px;color:#e6e6e6">1</div>
<div class="t rc" style="top:457.9px;color:#e6e6e6">1</div>
<div class="t rc" style="top:475.8px;color:#e6e6e6">1</div>
<div class="t rc" style="top:493.7px;color:#e6e6e6">1</div>
<div class="t rc" style="top:511.6px;color:#e6e6e6">1</div>
<div class="t rc" style="top:529.5px;color:#e6e6e6">1</div>
<div class="t rc" style="top:547.4px;color:#e6e6e6">1</div>
<div class="t rc" style="top:565.3px;color:#e6e6e6">1</div>
<div class="t rc" style="top:583.2px;color:#e6e6e6">1</div>
</body></html>
